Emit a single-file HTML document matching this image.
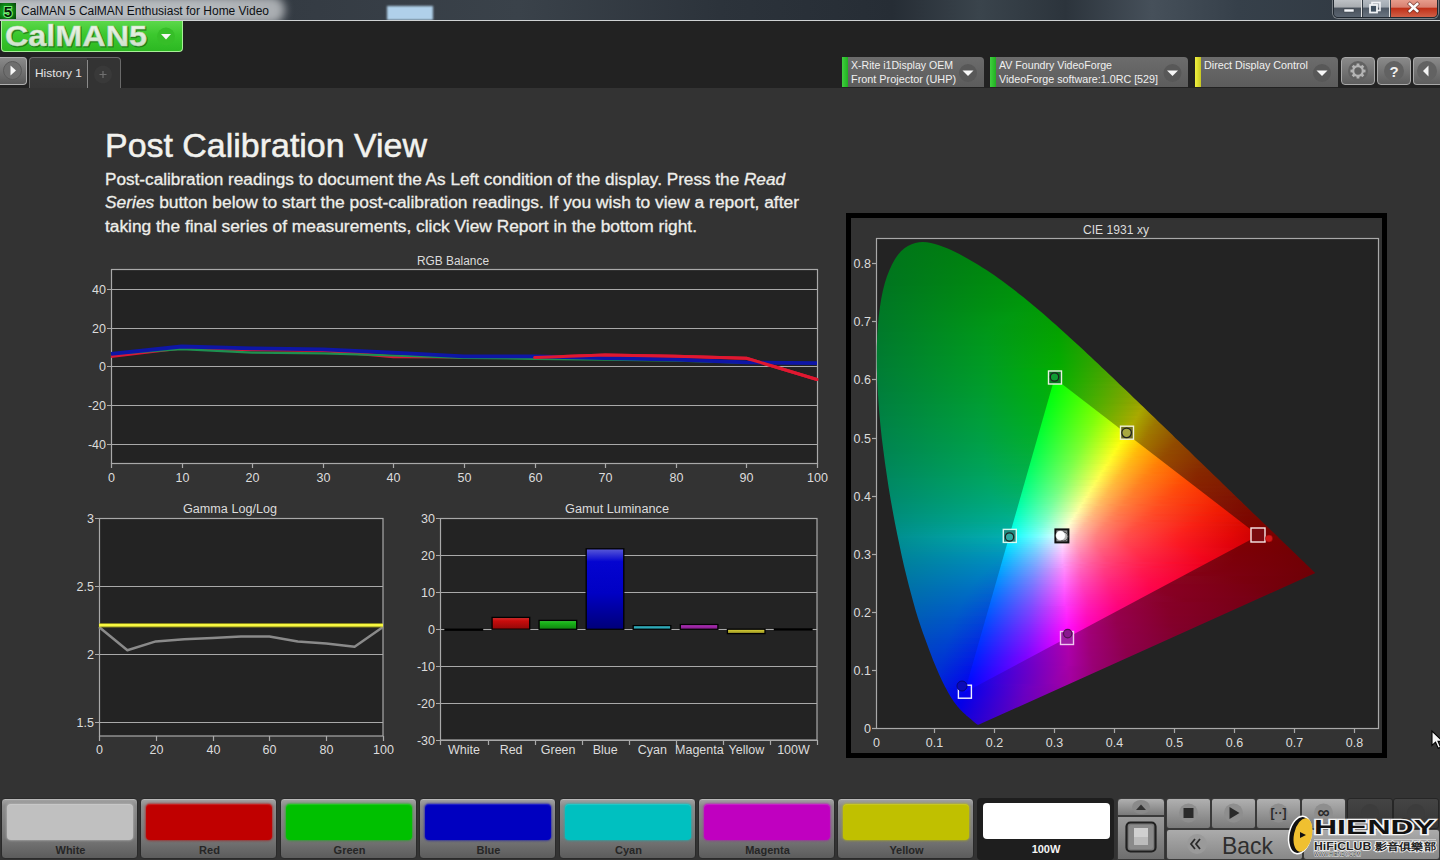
<!DOCTYPE html>
<html><head><meta charset="utf-8"><title>CalMAN 5</title>
<style>
*{margin:0;padding:0;box-sizing:border-box}
html,body{width:1440px;height:860px;overflow:hidden;background:#333;font-family:"Liberation Sans",sans-serif}
.abs{position:absolute}
svg text{font-family:"Liberation Sans",sans-serif}
#titlebar{left:0;top:0;width:1440px;height:21px;background:#2a323c}
#toolbar{left:0;top:21px;width:1440px;height:67px;background:#222222}
#content{left:0;top:88px;width:1440px;height:709px;background:#333333}
#bottombar{left:0;top:797px;width:1440px;height:63px;background:#333333}
</style></head><body>
<div id="titlebar" class="abs"></div>
<div id="toolbar" class="abs"></div>
<div id="content" class="abs"></div>
<div id="bottombar" class="abs"></div>

<svg class="abs" style="left:0;top:0" width="1440" height="860" viewBox="0 0 1440 860">
<text x="105" y="157" font-size="33" fill="#f2f2ee" text-anchor="start" font-weight="normal" font-style="normal" textLength="322" lengthAdjust="spacingAndGlyphs" stroke="#f2f2ee" stroke-width="0.5">Post Calibration View</text>
<text x="105" y="185" font-size="16" fill="#eeeeea" stroke="#eeeeea" stroke-width="0.3" textLength="680" lengthAdjust="spacingAndGlyphs">Post-calibration readings to document the As Left condition of the display. Press the <tspan font-style="italic">Read</tspan></text>
<text x="105" y="208" font-size="16" fill="#eeeeea" stroke="#eeeeea" stroke-width="0.3" textLength="694" lengthAdjust="spacingAndGlyphs"><tspan font-style="italic">Series</tspan> button below to start the post-calibration readings. If you wish to view a report, after</text>
<text x="105" y="232" font-size="16" fill="#eeeeea" stroke="#eeeeea" stroke-width="0.3" textLength="592" lengthAdjust="spacingAndGlyphs">taking the final series of measurements, click View Report in the bottom right.</text>
<text x="453" y="264.5" font-size="12" fill="#dcdcdc" text-anchor="middle" font-weight="normal" font-style="normal" textLength="72" lengthAdjust="spacingAndGlyphs">RGB Balance</text>
<rect x="111.5" y="269.5" width="706" height="194" fill="#232323" stroke="#a9a9a9" stroke-width="1.2"/>
<line x1="107" y1="289.5" x2="817" y2="289.5" stroke="#a9a9a9" stroke-width="1.2"/>
<text x="106" y="294.0" font-size="12.5" fill="#dcdcdc" text-anchor="end" font-weight="normal" font-style="normal">40</text>
<line x1="107" y1="328.5" x2="817" y2="328.5" stroke="#a9a9a9" stroke-width="1.2"/>
<text x="106" y="333.0" font-size="12.5" fill="#dcdcdc" text-anchor="end" font-weight="normal" font-style="normal">20</text>
<line x1="107" y1="366.5" x2="817" y2="366.5" stroke="#a9a9a9" stroke-width="1.2"/>
<text x="106" y="371.0" font-size="12.5" fill="#dcdcdc" text-anchor="end" font-weight="normal" font-style="normal">0</text>
<line x1="107" y1="405.5" x2="817" y2="405.5" stroke="#a9a9a9" stroke-width="1.2"/>
<text x="106" y="410.0" font-size="12.5" fill="#dcdcdc" text-anchor="end" font-weight="normal" font-style="normal">-20</text>
<line x1="107" y1="444.5" x2="817" y2="444.5" stroke="#a9a9a9" stroke-width="1.2"/>
<text x="106" y="449.0" font-size="12.5" fill="#dcdcdc" text-anchor="end" font-weight="normal" font-style="normal">-40</text>
<line x1="111.5" y1="463" x2="111.5" y2="468" stroke="#a9a9a9" stroke-width="1.2"/>
<text x="111.5" y="482" font-size="12.5" fill="#dcdcdc" text-anchor="middle" font-weight="normal" font-style="normal">0</text>
<line x1="182.5" y1="463" x2="182.5" y2="468" stroke="#a9a9a9" stroke-width="1.2"/>
<text x="182.5" y="482" font-size="12.5" fill="#dcdcdc" text-anchor="middle" font-weight="normal" font-style="normal">10</text>
<line x1="252.5" y1="463" x2="252.5" y2="468" stroke="#a9a9a9" stroke-width="1.2"/>
<text x="252.5" y="482" font-size="12.5" fill="#dcdcdc" text-anchor="middle" font-weight="normal" font-style="normal">20</text>
<line x1="323.5" y1="463" x2="323.5" y2="468" stroke="#a9a9a9" stroke-width="1.2"/>
<text x="323.5" y="482" font-size="12.5" fill="#dcdcdc" text-anchor="middle" font-weight="normal" font-style="normal">30</text>
<line x1="393.5" y1="463" x2="393.5" y2="468" stroke="#a9a9a9" stroke-width="1.2"/>
<text x="393.5" y="482" font-size="12.5" fill="#dcdcdc" text-anchor="middle" font-weight="normal" font-style="normal">40</text>
<line x1="464.5" y1="463" x2="464.5" y2="468" stroke="#a9a9a9" stroke-width="1.2"/>
<text x="464.5" y="482" font-size="12.5" fill="#dcdcdc" text-anchor="middle" font-weight="normal" font-style="normal">50</text>
<line x1="535.5" y1="463" x2="535.5" y2="468" stroke="#a9a9a9" stroke-width="1.2"/>
<text x="535.5" y="482" font-size="12.5" fill="#dcdcdc" text-anchor="middle" font-weight="normal" font-style="normal">60</text>
<line x1="605.5" y1="463" x2="605.5" y2="468" stroke="#a9a9a9" stroke-width="1.2"/>
<text x="605.5" y="482" font-size="12.5" fill="#dcdcdc" text-anchor="middle" font-weight="normal" font-style="normal">70</text>
<line x1="676.5" y1="463" x2="676.5" y2="468" stroke="#a9a9a9" stroke-width="1.2"/>
<text x="676.5" y="482" font-size="12.5" fill="#dcdcdc" text-anchor="middle" font-weight="normal" font-style="normal">80</text>
<line x1="746.5" y1="463" x2="746.5" y2="468" stroke="#a9a9a9" stroke-width="1.2"/>
<text x="746.5" y="482" font-size="12.5" fill="#dcdcdc" text-anchor="middle" font-weight="normal" font-style="normal">90</text>
<line x1="817.5" y1="463" x2="817.5" y2="468" stroke="#a9a9a9" stroke-width="1.2"/>
<text x="817.5" y="482" font-size="12.5" fill="#dcdcdc" text-anchor="middle" font-weight="normal" font-style="normal">100</text>
<polyline points="111.0,356.4 181.6,347.9 252.2,349.8 322.8,350.6 393.4,356.8 464.0,357.0 534.6,357.4 605.2,355.1 675.8,356.2 746.4,358.2 817.0,379.5" fill="none" stroke="#d81838" stroke-width="3" stroke-linejoin="round"/>
<polyline points="111.0,353.9 181.6,349.1 252.2,352.6 322.8,353.3 393.4,355.5 464.0,357.8 534.6,358.9 605.2,359.7 675.8,360.7 746.4,362.6 817.0,363.2" fill="none" stroke="#1e9050" stroke-width="2.2" stroke-linejoin="round"/>
<polyline points="111.0,353.9 181.6,346.5 252.2,348.3 322.8,349.4 393.4,352.6 464.0,356.4 534.6,356.4 605.2,358.2 675.8,359.5 746.4,362.4 817.0,363.2" fill="none" stroke="#0e16a6" stroke-width="3.8" stroke-linejoin="round"/>
<polyline points="534.6,357.4 605.2,355.1 675.8,356.2 746.4,358.2 817.0,379.5" fill="none" stroke="#e01830" stroke-width="3" stroke-linejoin="round" stroke-linecap="round"/>
<text x="230" y="512.5" font-size="12" fill="#dcdcdc" text-anchor="middle" font-weight="normal" font-style="normal" textLength="94" lengthAdjust="spacingAndGlyphs">Gamma Log/Log</text>
<rect x="99.5" y="518.5" width="283.5" height="217.5" fill="#232323" stroke="#a9a9a9" stroke-width="1.2"/>
<line x1="95" y1="518.5" x2="383" y2="518.5" stroke="#a9a9a9" stroke-width="1.2"/>
<text x="94" y="523.0" font-size="12.5" fill="#dcdcdc" text-anchor="end" font-weight="normal" font-style="normal">3</text>
<line x1="95" y1="586.5" x2="383" y2="586.5" stroke="#a9a9a9" stroke-width="1.2"/>
<text x="94" y="591.0" font-size="12.5" fill="#dcdcdc" text-anchor="end" font-weight="normal" font-style="normal">2.5</text>
<line x1="95" y1="654.5" x2="383" y2="654.5" stroke="#a9a9a9" stroke-width="1.2"/>
<text x="94" y="659.0" font-size="12.5" fill="#dcdcdc" text-anchor="end" font-weight="normal" font-style="normal">2</text>
<line x1="95" y1="722.5" x2="383" y2="722.5" stroke="#a9a9a9" stroke-width="1.2"/>
<text x="94" y="727.0" font-size="12.5" fill="#dcdcdc" text-anchor="end" font-weight="normal" font-style="normal">1.5</text>
<line x1="99.5" y1="736" x2="99.5" y2="741" stroke="#a9a9a9" stroke-width="1.2"/>
<text x="99.5" y="754" font-size="12.5" fill="#dcdcdc" text-anchor="middle" font-weight="normal" font-style="normal">0</text>
<line x1="156.5" y1="736" x2="156.5" y2="741" stroke="#a9a9a9" stroke-width="1.2"/>
<text x="156.5" y="754" font-size="12.5" fill="#dcdcdc" text-anchor="middle" font-weight="normal" font-style="normal">20</text>
<line x1="213.5" y1="736" x2="213.5" y2="741" stroke="#a9a9a9" stroke-width="1.2"/>
<text x="213.5" y="754" font-size="12.5" fill="#dcdcdc" text-anchor="middle" font-weight="normal" font-style="normal">40</text>
<line x1="269.5" y1="736" x2="269.5" y2="741" stroke="#a9a9a9" stroke-width="1.2"/>
<text x="269.5" y="754" font-size="12.5" fill="#dcdcdc" text-anchor="middle" font-weight="normal" font-style="normal">60</text>
<line x1="326.5" y1="736" x2="326.5" y2="741" stroke="#a9a9a9" stroke-width="1.2"/>
<text x="326.5" y="754" font-size="12.5" fill="#dcdcdc" text-anchor="middle" font-weight="normal" font-style="normal">80</text>
<line x1="383.5" y1="736" x2="383.5" y2="741" stroke="#a9a9a9" stroke-width="1.2"/>
<text x="383.5" y="754" font-size="12.5" fill="#dcdcdc" text-anchor="middle" font-weight="normal" font-style="normal">100</text>
<polyline points="99.0,627.0 127.4,650.2 155.8,641.4 184.2,639.3 212.6,637.9 241.0,636.6 269.4,636.6 297.8,641.4 326.2,643.4 354.6,646.8 383.0,627.0" fill="none" stroke="#8a8a8a" stroke-width="2.5" stroke-linejoin="round"/>
<line x1="99" y1="625.3" x2="383" y2="625.3" stroke="#c8c820" stroke-width="4.5" opacity="0.6"/>
<line x1="99" y1="625.3" x2="383" y2="625.3" stroke="#f8f840" stroke-width="2.4"/>
<text x="617" y="512.5" font-size="12" fill="#dcdcdc" text-anchor="middle" font-weight="normal" font-style="normal" textLength="104" lengthAdjust="spacingAndGlyphs">Gamut Luminance</text>
<rect x="440.5" y="518.5" width="376.5" height="221.5" fill="#232323" stroke="#a9a9a9" stroke-width="1.2"/>
<line x1="436" y1="518.5" x2="817" y2="518.5" stroke="#a9a9a9" stroke-width="1.2"/>
<text x="435" y="523.0" font-size="12.5" fill="#dcdcdc" text-anchor="end" font-weight="normal" font-style="normal">30</text>
<line x1="436" y1="555.5" x2="817" y2="555.5" stroke="#a9a9a9" stroke-width="1.2"/>
<text x="435" y="560.0" font-size="12.5" fill="#dcdcdc" text-anchor="end" font-weight="normal" font-style="normal">20</text>
<line x1="436" y1="592.5" x2="817" y2="592.5" stroke="#a9a9a9" stroke-width="1.2"/>
<text x="435" y="597.0" font-size="12.5" fill="#dcdcdc" text-anchor="end" font-weight="normal" font-style="normal">10</text>
<line x1="436" y1="629.5" x2="817" y2="629.5" stroke="#a9a9a9" stroke-width="1.2"/>
<text x="435" y="634.0" font-size="12.5" fill="#dcdcdc" text-anchor="end" font-weight="normal" font-style="normal">0</text>
<line x1="436" y1="666.5" x2="817" y2="666.5" stroke="#a9a9a9" stroke-width="1.2"/>
<text x="435" y="671.0" font-size="12.5" fill="#dcdcdc" text-anchor="end" font-weight="normal" font-style="normal">-10</text>
<line x1="436" y1="703.5" x2="817" y2="703.5" stroke="#a9a9a9" stroke-width="1.2"/>
<text x="435" y="708.0" font-size="12.5" fill="#dcdcdc" text-anchor="end" font-weight="normal" font-style="normal">-20</text>
<line x1="436" y1="740.5" x2="817" y2="740.5" stroke="#a9a9a9" stroke-width="1.2"/>
<text x="435" y="745.0" font-size="12.5" fill="#dcdcdc" text-anchor="end" font-weight="normal" font-style="normal">-30</text>
<defs>
<linearGradient id="bg0" x1="0" y1="0" x2="0" y2="1"><stop offset="0" stop-color="#535353"/><stop offset="0.3" stop-color="#333333"/><stop offset="1" stop-color="#242424"/></linearGradient>
<linearGradient id="bg1" x1="0" y1="0" x2="0" y2="1"><stop offset="0" stop-color="#d23232"/><stop offset="0.3" stop-color="#c80c0c"/><stop offset="1" stop-color="#900808"/></linearGradient>
<linearGradient id="bg2" x1="0" y1="0" x2="0" y2="1"><stop offset="0" stop-color="#3cc13c"/><stop offset="0.3" stop-color="#18b418"/><stop offset="1" stop-color="#118111"/></linearGradient>
<linearGradient id="bg3" x1="0" y1="0" x2="0" y2="1"><stop offset="0" stop-color="#5a5ad8"/><stop offset="0.16" stop-color="#0404d0"/><stop offset="0.55" stop-color="#0000c4"/><stop offset="1" stop-color="#000078"/></linearGradient>
<linearGradient id="bg4" x1="0" y1="0" x2="0" y2="1"><stop offset="0" stop-color="#50c4d2"/><stop offset="0.3" stop-color="#30b8c8"/><stop offset="1" stop-color="#228490"/></linearGradient>
<linearGradient id="bg5" x1="0" y1="0" x2="0" y2="1"><stop offset="0" stop-color="#b64abd"/><stop offset="0.3" stop-color="#a828b0"/><stop offset="1" stop-color="#781c7e"/></linearGradient>
<linearGradient id="bg6" x1="0" y1="0" x2="0" y2="1"><stop offset="0" stop-color="#d2cb50"/><stop offset="0.3" stop-color="#c8c030"/><stop offset="1" stop-color="#908a22"/></linearGradient>
<linearGradient id="bg7" x1="0" y1="0" x2="0" y2="1"><stop offset="0" stop-color="#535353"/><stop offset="0.3" stop-color="#333333"/><stop offset="1" stop-color="#242424"/></linearGradient>
</defs>
<line x1="440.5" y1="740" x2="440.5" y2="745" stroke="#a9a9a9" stroke-width="1.2"/>
<text x="464.03125" y="754" font-size="12.5" fill="#dcdcdc" text-anchor="middle" font-weight="normal" font-style="normal">White</text>
<rect x="445.0" y="629.2" width="37.6" height="1.0" fill="url(#bg0)" stroke="#000" stroke-width="1.3"/>
<line x1="488.5" y1="740" x2="488.5" y2="745" stroke="#a9a9a9" stroke-width="1.2"/>
<text x="511.09375" y="754" font-size="12.5" fill="#dcdcdc" text-anchor="middle" font-weight="normal" font-style="normal">Red</text>
<rect x="492.1" y="617.4" width="37.6" height="11.8" fill="url(#bg1)" stroke="#000" stroke-width="1.3"/>
<line x1="535.5" y1="740" x2="535.5" y2="745" stroke="#a9a9a9" stroke-width="1.2"/>
<text x="558.15625" y="754" font-size="12.5" fill="#dcdcdc" text-anchor="middle" font-weight="normal" font-style="normal">Green</text>
<rect x="539.1" y="620.4" width="37.6" height="8.9" fill="url(#bg2)" stroke="#000" stroke-width="1.3"/>
<line x1="582.5" y1="740" x2="582.5" y2="745" stroke="#a9a9a9" stroke-width="1.2"/>
<text x="605.21875" y="754" font-size="12.5" fill="#dcdcdc" text-anchor="middle" font-weight="normal" font-style="normal">Blue</text>
<rect x="586.2" y="548.8" width="37.6" height="80.5" fill="url(#bg3)" stroke="#000" stroke-width="1.3"/>
<line x1="629.5" y1="740" x2="629.5" y2="745" stroke="#a9a9a9" stroke-width="1.2"/>
<text x="652.28125" y="754" font-size="12.5" fill="#dcdcdc" text-anchor="middle" font-weight="normal" font-style="normal">Cyan</text>
<rect x="633.2" y="625.6" width="37.6" height="3.7" fill="url(#bg4)" stroke="#000" stroke-width="1.3"/>
<line x1="676.5" y1="740" x2="676.5" y2="745" stroke="#a9a9a9" stroke-width="1.2"/>
<text x="699.34375" y="754" font-size="12.5" fill="#dcdcdc" text-anchor="middle" font-weight="normal" font-style="normal">Magenta</text>
<rect x="680.3" y="624.5" width="37.6" height="4.8" fill="url(#bg5)" stroke="#000" stroke-width="1.3"/>
<line x1="723.5" y1="740" x2="723.5" y2="745" stroke="#a9a9a9" stroke-width="1.2"/>
<text x="746.40625" y="754" font-size="12.5" fill="#dcdcdc" text-anchor="middle" font-weight="normal" font-style="normal">Yellow</text>
<rect x="727.4" y="629.2" width="37.6" height="4.4" fill="url(#bg6)" stroke="#000" stroke-width="1.3"/>
<line x1="770.5" y1="740" x2="770.5" y2="745" stroke="#a9a9a9" stroke-width="1.2"/>
<text x="793.46875" y="754" font-size="12.5" fill="#dcdcdc" text-anchor="middle" font-weight="normal" font-style="normal">100W</text>
<rect x="774.4" y="628.9" width="37.6" height="1.0" fill="url(#bg7)" stroke="#000" stroke-width="1.3"/>
<line x1="817.5" y1="740" x2="817.5" y2="745" stroke="#a9a9a9" stroke-width="1.2"/>
</svg>
<div class="abs" style="left:846px;top:213px;width:541px;height:545px;background:#333;border:5px solid #000"></div>
<svg class="abs" style="left:0;top:0" width="1440" height="860" viewBox="0 0 1440 860">
<defs>
<clipPath id="hs"><polygon points="979.0,724.6 978.9,724.6 978.9,724.6 978.9,724.6 978.9,724.6 978.8,724.6 978.8,724.6 978.7,724.7 978.7,724.7 978.6,724.7 978.6,724.7 978.5,724.7 978.5,724.7 978.4,724.7 978.4,724.7 978.3,724.7 978.2,724.7 978.1,724.7 978.1,724.7 978.0,724.7 977.8,724.7 977.7,724.6 977.6,724.6 977.5,724.6 977.3,724.5 977.2,724.5 977.1,724.4 977.0,724.4 976.9,724.3 976.8,724.2 976.7,724.1 976.6,724.0 976.4,723.9 976.3,723.8 976.2,723.7 976.0,723.6 975.8,723.5 975.7,723.3 975.5,723.2 975.3,723.0 975.1,722.9 974.9,722.7 974.6,722.5 974.4,722.3 974.2,722.1 973.9,721.9 973.7,721.6 973.4,721.4 973.1,721.2 972.8,720.9 972.5,720.6 972.2,720.4 971.9,720.1 971.5,719.8 971.2,719.5 970.8,719.1 970.3,718.8 969.9,718.4 969.4,718.0 969.0,717.6 968.5,717.2 967.9,716.8 967.4,716.3 966.9,715.9 966.3,715.4 965.7,714.8 965.1,714.3 964.5,713.7 963.8,713.1 963.1,712.4 962.4,711.8 961.7,711.0 960.9,710.2 960.1,709.4 959.3,708.5 958.5,707.6 957.7,706.7 956.8,705.5 955.8,704.3 954.8,702.9 953.7,701.4 952.6,699.8 951.4,698.0 950.2,696.0 949.0,693.9 947.6,691.5 946.3,689.1 944.9,686.4 943.4,683.6 941.9,680.4 940.3,677.0 938.6,673.2 936.9,669.3 935.1,665.0 933.2,660.5 931.3,655.6 929.3,650.3 927.2,644.6 925.0,638.6 922.7,632.2 920.4,625.5 918.0,618.3 915.7,610.7 913.4,602.6 911.1,594.0 908.7,585.1 906.4,575.7 904.0,565.9 901.7,555.8 899.5,545.2 897.2,534.2 894.9,522.7 892.7,511.0 890.6,499.2 888.6,487.3 886.8,475.3 885.0,463.1 883.4,450.7 881.8,438.3 880.5,426.1 879.4,414.2 878.5,402.4 877.8,390.7 877.2,379.2 876.8,367.9 876.7,356.9 876.8,346.4 877.2,336.2 877.9,326.3 878.7,316.7 879.9,307.5 881.2,298.9 882.8,290.9 884.7,283.5 886.9,276.6 889.4,270.2 892.0,264.5 894.9,259.3 897.8,254.9 901.0,251.3 904.4,248.3 907.9,246.0 911.6,244.3 915.3,243.1 919.1,242.2 922.9,241.9 926.8,242.2 930.9,242.9 934.9,244.0 939.0,245.3 943.0,246.7 947.1,248.2 951.1,250.0 955.2,252.0 959.3,254.1 963.3,256.3 967.3,258.5 971.2,260.7 975.1,262.9 978.9,265.3 982.7,267.7 986.5,270.1 990.2,272.6 994.0,275.1 997.7,277.7 1001.3,280.3 1005.0,283.0 1008.6,285.7 1012.3,288.5 1015.9,291.3 1019.5,294.2 1023.2,297.1 1026.8,300.0 1030.4,303.0 1034.0,306.0 1037.6,309.0 1041.2,312.0 1044.7,315.1 1048.3,318.3 1051.9,321.4 1055.5,324.6 1059.0,327.8 1062.6,331.0 1066.2,334.2 1069.7,337.5 1073.3,340.7 1076.9,344.0 1080.5,347.3 1084.0,350.6 1087.6,354.0 1091.2,357.3 1094.8,360.7 1098.4,364.0 1101.9,367.4 1105.5,370.8 1109.1,374.2 1112.6,377.6 1116.2,381.0 1119.7,384.4 1123.3,387.7 1126.8,391.1 1130.4,394.5 1133.9,397.9 1137.4,401.3 1141.0,404.7 1144.5,408.0 1148.0,411.4 1151.4,414.8 1154.9,418.1 1158.3,421.4 1161.8,424.7 1165.2,428.0 1168.6,431.3 1172.0,434.6 1175.3,437.9 1178.7,441.1 1182.0,444.3 1185.3,447.5 1188.6,450.6 1191.8,453.8 1195.0,456.9 1198.2,460.0 1201.4,463.0 1204.5,466.1 1207.6,469.0 1210.7,472.0 1213.7,474.9 1216.7,477.8 1219.6,480.6 1222.5,483.4 1225.4,486.2 1228.2,488.9 1230.9,491.6 1233.6,494.2 1236.2,496.7 1238.8,499.2 1241.3,501.6 1243.7,504.0 1246.1,506.3 1248.4,508.5 1250.7,510.7 1252.9,512.9 1255.1,515.0 1257.3,517.1 1259.4,519.1 1261.4,521.1 1263.4,523.0 1265.3,524.8 1267.2,526.6 1269.0,528.3 1270.7,529.9 1272.4,531.6 1274.0,533.1 1275.5,534.6 1277.1,536.1 1278.5,537.5 1279.9,538.9 1281.3,540.2 1282.6,541.4 1283.8,542.7 1285.0,543.8 1286.2,544.9 1287.3,546.0 1288.4,547.1 1289.4,548.1 1290.4,549.0 1291.4,550.0 1292.3,550.8 1293.2,551.7 1294.0,552.5 1294.9,553.3 1295.7,554.1 1296.4,554.8 1297.2,555.5 1297.9,556.2 1298.6,556.9 1299.2,557.6 1299.9,558.2 1300.5,558.8 1301.2,559.4 1301.8,560.0 1302.3,560.6 1302.9,561.1 1303.4,561.6 1304.0,562.1 1304.5,562.6 1305.0,563.1 1305.4,563.6 1305.9,564.0 1306.3,564.4 1306.8,564.8 1307.2,565.2 1307.6,565.6 1307.9,565.9 1308.3,566.3 1308.6,566.6 1309.0,566.9 1309.3,567.2 1309.6,567.5 1309.8,567.8 1310.1,568.0 1310.4,568.3 1310.6,568.5 1310.8,568.7 1311.1,569.0 1311.3,569.2 1311.5,569.4 1311.7,569.6 1311.8,569.7 1312.0,569.9 1312.2,570.0 1312.3,570.2 1312.5,570.4 1312.7,570.5 1312.9,570.7 1313.1,571.0 1313.3,571.2 1313.5,571.3 1313.7,571.5 1313.9,571.7 1314.0,571.8 1314.1,572.0 1314.3,572.1 1314.4,572.2 1314.5,572.3 1314.7,572.5 1314.8,572.6 1315.0,572.8 1315.1,572.9 1315.2,573.0 1315.3,573.1"/></clipPath>
<clipPath id="tr"><polygon points="1258.5,535.4 1054.5,378.3 964.5,692.6"/></clipPath>
<linearGradient id="dim0" gradientUnits="userSpaceOnUse" x1="874.5" y1="0" x2="1320.5" y2="0"><stop offset="0.000" stop-color="#00731b"/><stop offset="0.345" stop-color="#008506"/><stop offset="0.462" stop-color="#0b8500"/><stop offset="0.807" stop-color="#697300"/><stop offset="0.848" stop-color="#726e00"/><stop offset="0.991" stop-color="#684600"/><stop offset="0.996" stop-color="#674500"/></linearGradient>
<linearGradient id="dim1" gradientUnits="userSpaceOnUse" x1="874.5" y1="0" x2="1320.5" y2="0"><stop offset="0.000" stop-color="#00731b"/><stop offset="0.341" stop-color="#008506"/><stop offset="0.448" stop-color="#098500"/><stop offset="0.565" stop-color="#258100"/><stop offset="0.816" stop-color="#6d7300"/><stop offset="0.852" stop-color="#716b00"/><stop offset="0.996" stop-color="#674400"/></linearGradient>
<linearGradient id="dim2" gradientUnits="userSpaceOnUse" x1="874.5" y1="0" x2="1320.5" y2="0"><stop offset="0.000" stop-color="#00731b"/><stop offset="0.341" stop-color="#008607"/><stop offset="0.448" stop-color="#098600"/><stop offset="0.570" stop-color="#278100"/><stop offset="0.821" stop-color="#6f7300"/><stop offset="0.996" stop-color="#674400"/></linearGradient>
<linearGradient id="dim3" gradientUnits="userSpaceOnUse" x1="874.5" y1="0" x2="1320.5" y2="0"><stop offset="0.000" stop-color="#00731b"/><stop offset="0.341" stop-color="#008607"/><stop offset="0.444" stop-color="#088700"/><stop offset="0.552" stop-color="#228300"/><stop offset="0.839" stop-color="#726e00"/><stop offset="0.982" stop-color="#674500"/><stop offset="0.996" stop-color="#674300"/></linearGradient>
<linearGradient id="dim4" gradientUnits="userSpaceOnUse" x1="874.5" y1="0" x2="1320.5" y2="0"><stop offset="0.000" stop-color="#00731c"/><stop offset="0.341" stop-color="#008707"/><stop offset="0.444" stop-color="#088700"/><stop offset="0.552" stop-color="#238300"/><stop offset="0.834" stop-color="#726f00"/><stop offset="0.973" stop-color="#684600"/><stop offset="0.996" stop-color="#674200"/></linearGradient>
<linearGradient id="dim5" gradientUnits="userSpaceOnUse" x1="874.5" y1="0" x2="1320.5" y2="0"><stop offset="0.000" stop-color="#00731c"/><stop offset="0.341" stop-color="#008707"/><stop offset="0.444" stop-color="#098800"/><stop offset="0.556" stop-color="#248300"/><stop offset="0.830" stop-color="#726f00"/><stop offset="0.969" stop-color="#684700"/><stop offset="0.996" stop-color="#664200"/></linearGradient>
<linearGradient id="dim6" gradientUnits="userSpaceOnUse" x1="874.5" y1="0" x2="1320.5" y2="0"><stop offset="0.000" stop-color="#00731c"/><stop offset="0.341" stop-color="#008807"/><stop offset="0.439" stop-color="#088900"/><stop offset="0.543" stop-color="#218500"/><stop offset="0.830" stop-color="#726e00"/><stop offset="0.969" stop-color="#684600"/><stop offset="0.996" stop-color="#664100"/></linearGradient>
<linearGradient id="dim7" gradientUnits="userSpaceOnUse" x1="874.5" y1="0" x2="1320.5" y2="0"><stop offset="0.000" stop-color="#00731c"/><stop offset="0.341" stop-color="#008907"/><stop offset="0.439" stop-color="#088900"/><stop offset="0.543" stop-color="#218500"/><stop offset="0.825" stop-color="#726f00"/><stop offset="0.964" stop-color="#684600"/><stop offset="0.996" stop-color="#664000"/></linearGradient>
<linearGradient id="dim8" gradientUnits="userSpaceOnUse" x1="874.5" y1="0" x2="1320.5" y2="0"><stop offset="0.000" stop-color="#00731d"/><stop offset="0.341" stop-color="#008907"/><stop offset="0.439" stop-color="#088a00"/><stop offset="0.543" stop-color="#228600"/><stop offset="0.821" stop-color="#727000"/><stop offset="0.955" stop-color="#684700"/><stop offset="0.996" stop-color="#664000"/></linearGradient>
<linearGradient id="dim9" gradientUnits="userSpaceOnUse" x1="874.5" y1="0" x2="1320.5" y2="0"><stop offset="0.000" stop-color="#00731d"/><stop offset="0.341" stop-color="#008a07"/><stop offset="0.435" stop-color="#078b00"/><stop offset="0.538" stop-color="#218700"/><stop offset="0.821" stop-color="#726e00"/><stop offset="0.955" stop-color="#684600"/><stop offset="0.996" stop-color="#663f00"/></linearGradient>
<linearGradient id="dim10" gradientUnits="userSpaceOnUse" x1="874.5" y1="0" x2="1320.5" y2="0"><stop offset="0.000" stop-color="#00731d"/><stop offset="0.336" stop-color="#008a08"/><stop offset="0.430" stop-color="#078b00"/><stop offset="0.529" stop-color="#1f8800"/><stop offset="0.816" stop-color="#726f00"/><stop offset="0.951" stop-color="#684700"/><stop offset="0.996" stop-color="#653e00"/></linearGradient>
<linearGradient id="dim11" gradientUnits="userSpaceOnUse" x1="874.5" y1="0" x2="1320.5" y2="0"><stop offset="0.000" stop-color="#00731e"/><stop offset="0.336" stop-color="#008b08"/><stop offset="0.430" stop-color="#078c00"/><stop offset="0.529" stop-color="#1f8800"/><stop offset="0.812" stop-color="#727000"/><stop offset="0.946" stop-color="#684700"/><stop offset="0.996" stop-color="#653e00"/></linearGradient>
<linearGradient id="dim12" gradientUnits="userSpaceOnUse" x1="874.5" y1="0" x2="1320.5" y2="0"><stop offset="0.000" stop-color="#00731e"/><stop offset="0.336" stop-color="#008b08"/><stop offset="0.430" stop-color="#078c00"/><stop offset="0.529" stop-color="#208900"/><stop offset="0.807" stop-color="#727100"/><stop offset="0.937" stop-color="#684800"/><stop offset="0.996" stop-color="#653d00"/></linearGradient>
<linearGradient id="dim13" gradientUnits="userSpaceOnUse" x1="874.5" y1="0" x2="1320.5" y2="0"><stop offset="0.000" stop-color="#00731e"/><stop offset="0.336" stop-color="#008c08"/><stop offset="0.430" stop-color="#078d00"/><stop offset="0.529" stop-color="#208900"/><stop offset="0.807" stop-color="#737000"/><stop offset="0.933" stop-color="#684800"/><stop offset="0.996" stop-color="#653c00"/></linearGradient>
<linearGradient id="dim14" gradientUnits="userSpaceOnUse" x1="874.5" y1="0" x2="1320.5" y2="0"><stop offset="0.000" stop-color="#00731e"/><stop offset="0.336" stop-color="#008d08"/><stop offset="0.430" stop-color="#078e00"/><stop offset="0.525" stop-color="#1f8a00"/><stop offset="0.803" stop-color="#747200"/><stop offset="0.915" stop-color="#694b00"/><stop offset="0.996" stop-color="#653c00"/></linearGradient>
<linearGradient id="dim15" gradientUnits="userSpaceOnUse" x1="874.5" y1="0" x2="1320.5" y2="0"><stop offset="0.000" stop-color="#00731f"/><stop offset="0.336" stop-color="#008d09"/><stop offset="0.430" stop-color="#078e00"/><stop offset="0.525" stop-color="#208b00"/><stop offset="0.798" stop-color="#757300"/><stop offset="0.897" stop-color="#6a4f00"/><stop offset="0.996" stop-color="#653b00"/></linearGradient>
<linearGradient id="dim16" gradientUnits="userSpaceOnUse" x1="874.5" y1="0" x2="1320.5" y2="0"><stop offset="0.000" stop-color="#00731f"/><stop offset="0.336" stop-color="#008e09"/><stop offset="0.430" stop-color="#078f00"/><stop offset="0.529" stop-color="#228b00"/><stop offset="0.798" stop-color="#757200"/><stop offset="0.888" stop-color="#6a5000"/><stop offset="0.996" stop-color="#643a00"/></linearGradient>
<linearGradient id="dim17" gradientUnits="userSpaceOnUse" x1="874.5" y1="0" x2="1320.5" y2="0"><stop offset="0.000" stop-color="#00731f"/><stop offset="0.336" stop-color="#008e09"/><stop offset="0.430" stop-color="#078f00"/><stop offset="0.525" stop-color="#218c00"/><stop offset="0.794" stop-color="#767400"/><stop offset="0.879" stop-color="#6b5200"/><stop offset="0.996" stop-color="#643a00"/></linearGradient>
<linearGradient id="dim18" gradientUnits="userSpaceOnUse" x1="874.5" y1="0" x2="1320.5" y2="0"><stop offset="0.000" stop-color="#007320"/><stop offset="0.336" stop-color="#008f09"/><stop offset="0.430" stop-color="#079000"/><stop offset="0.525" stop-color="#228c00"/><stop offset="0.789" stop-color="#777600"/><stop offset="0.879" stop-color="#6a5100"/><stop offset="0.996" stop-color="#643900"/></linearGradient>
<linearGradient id="dim19" gradientUnits="userSpaceOnUse" x1="874.5" y1="0" x2="1320.5" y2="0"><stop offset="0.000" stop-color="#007320"/><stop offset="0.336" stop-color="#009009"/><stop offset="0.426" stop-color="#069100"/><stop offset="0.520" stop-color="#218d00"/><stop offset="0.789" stop-color="#777500"/><stop offset="0.883" stop-color="#6a4f00"/><stop offset="0.996" stop-color="#643900"/></linearGradient>
<linearGradient id="dim20" gradientUnits="userSpaceOnUse" x1="874.5" y1="0" x2="1320.5" y2="0"><stop offset="0.000" stop-color="#007320"/><stop offset="0.336" stop-color="#009009"/><stop offset="0.426" stop-color="#069100"/><stop offset="0.516" stop-color="#1f8e00"/><stop offset="0.785" stop-color="#787600"/><stop offset="0.879" stop-color="#6a4f00"/><stop offset="0.996" stop-color="#643800"/></linearGradient>
<linearGradient id="dim21" gradientUnits="userSpaceOnUse" x1="874.5" y1="0" x2="1320.5" y2="0"><stop offset="0.000" stop-color="#007321"/><stop offset="0.336" stop-color="#009109"/><stop offset="0.426" stop-color="#069200"/><stop offset="0.516" stop-color="#208f00"/><stop offset="0.780" stop-color="#797800"/><stop offset="0.879" stop-color="#6a4e00"/><stop offset="0.996" stop-color="#633700"/></linearGradient>
<linearGradient id="dim22" gradientUnits="userSpaceOnUse" x1="874.5" y1="0" x2="1320.5" y2="0"><stop offset="0.000" stop-color="#007321"/><stop offset="0.336" stop-color="#009109"/><stop offset="0.426" stop-color="#069300"/><stop offset="0.516" stop-color="#218f00"/><stop offset="0.780" stop-color="#797700"/><stop offset="0.879" stop-color="#6a4d00"/><stop offset="0.996" stop-color="#633700"/></linearGradient>
<linearGradient id="dim23" gradientUnits="userSpaceOnUse" x1="874.5" y1="0" x2="1320.5" y2="0"><stop offset="0.000" stop-color="#007321"/><stop offset="0.336" stop-color="#00920a"/><stop offset="0.426" stop-color="#069300"/><stop offset="0.520" stop-color="#238f00"/><stop offset="0.776" stop-color="#7a7900"/><stop offset="0.879" stop-color="#694c00"/><stop offset="0.996" stop-color="#633600"/></linearGradient>
<linearGradient id="dim24" gradientUnits="userSpaceOnUse" x1="874.5" y1="0" x2="1320.5" y2="0"><stop offset="0.000" stop-color="#007422"/><stop offset="0.336" stop-color="#00930a"/><stop offset="0.426" stop-color="#069400"/><stop offset="0.516" stop-color="#229000"/><stop offset="0.776" stop-color="#7a7800"/><stop offset="0.879" stop-color="#694c00"/><stop offset="0.996" stop-color="#633600"/></linearGradient>
<linearGradient id="dim25" gradientUnits="userSpaceOnUse" x1="874.5" y1="0" x2="1320.5" y2="0"><stop offset="0.000" stop-color="#007422"/><stop offset="0.336" stop-color="#00930a"/><stop offset="0.422" stop-color="#059400"/><stop offset="0.507" stop-color="#1f9100"/><stop offset="0.771" stop-color="#7c7900"/><stop offset="0.874" stop-color="#6a4c00"/><stop offset="0.996" stop-color="#633500"/></linearGradient>
<linearGradient id="dim26" gradientUnits="userSpaceOnUse" x1="874.5" y1="0" x2="1320.5" y2="0"><stop offset="0.000" stop-color="#007422"/><stop offset="0.336" stop-color="#00940a"/><stop offset="0.422" stop-color="#069500"/><stop offset="0.511" stop-color="#219200"/><stop offset="0.767" stop-color="#7d7b00"/><stop offset="0.870" stop-color="#6b4d00"/><stop offset="0.996" stop-color="#633400"/></linearGradient>
<linearGradient id="dim27" gradientUnits="userSpaceOnUse" x1="874.5" y1="0" x2="1320.5" y2="0"><stop offset="0.000" stop-color="#007423"/><stop offset="0.336" stop-color="#00940a"/><stop offset="0.422" stop-color="#069600"/><stop offset="0.507" stop-color="#209200"/><stop offset="0.767" stop-color="#7d7a00"/><stop offset="0.870" stop-color="#6b4d00"/><stop offset="0.996" stop-color="#623400"/></linearGradient>
<linearGradient id="dim28" gradientUnits="userSpaceOnUse" x1="874.5" y1="0" x2="1320.5" y2="0"><stop offset="0.000" stop-color="#007523"/><stop offset="0.336" stop-color="#00950a"/><stop offset="0.422" stop-color="#069600"/><stop offset="0.507" stop-color="#219300"/><stop offset="0.762" stop-color="#7e7c00"/><stop offset="0.861" stop-color="#6d4f00"/><stop offset="0.996" stop-color="#623300"/></linearGradient>
<linearGradient id="dim29" gradientUnits="userSpaceOnUse" x1="874.5" y1="0" x2="1320.5" y2="0"><stop offset="0.000" stop-color="#007524"/><stop offset="0.336" stop-color="#00950a"/><stop offset="0.422" stop-color="#069700"/><stop offset="0.511" stop-color="#239300"/><stop offset="0.758" stop-color="#7f7d00"/><stop offset="0.857" stop-color="#6d5000"/><stop offset="0.996" stop-color="#623300"/></linearGradient>
<linearGradient id="dim30" gradientUnits="userSpaceOnUse" x1="874.5" y1="0" x2="1320.5" y2="0"><stop offset="0.000" stop-color="#007524"/><stop offset="0.336" stop-color="#00960b"/><stop offset="0.422" stop-color="#069800"/><stop offset="0.516" stop-color="#259300"/><stop offset="0.758" stop-color="#7f7c00"/><stop offset="0.857" stop-color="#6e4f00"/><stop offset="0.991" stop-color="#623300"/><stop offset="0.996" stop-color="#623200"/></linearGradient>
<linearGradient id="dim31" gradientUnits="userSpaceOnUse" x1="874.5" y1="0" x2="1320.5" y2="0"><stop offset="0.000" stop-color="#007525"/><stop offset="0.336" stop-color="#00970b"/><stop offset="0.422" stop-color="#069800"/><stop offset="0.507" stop-color="#229500"/><stop offset="0.753" stop-color="#807e00"/><stop offset="0.852" stop-color="#6e5000"/><stop offset="0.987" stop-color="#623300"/><stop offset="0.996" stop-color="#623100"/></linearGradient>
<linearGradient id="dim32" gradientUnits="userSpaceOnUse" x1="874.5" y1="0" x2="1320.5" y2="0"><stop offset="0.000" stop-color="#007625"/><stop offset="0.336" stop-color="#00970b"/><stop offset="0.422" stop-color="#069900"/><stop offset="0.511" stop-color="#259500"/><stop offset="0.749" stop-color="#818000"/><stop offset="0.843" stop-color="#705200"/><stop offset="0.978" stop-color="#623300"/><stop offset="0.996" stop-color="#623100"/></linearGradient>
<linearGradient id="dim33" gradientUnits="userSpaceOnUse" x1="874.5" y1="0" x2="1320.5" y2="0"><stop offset="0.000" stop-color="#007625"/><stop offset="0.336" stop-color="#00980b"/><stop offset="0.422" stop-color="#069900"/><stop offset="0.520" stop-color="#299500"/><stop offset="0.749" stop-color="#817f00"/><stop offset="0.848" stop-color="#6f5000"/><stop offset="0.987" stop-color="#623100"/><stop offset="0.996" stop-color="#613000"/></linearGradient>
<linearGradient id="dim34" gradientUnits="userSpaceOnUse" x1="874.5" y1="0" x2="1320.5" y2="0"><stop offset="0.000" stop-color="#007626"/><stop offset="0.332" stop-color="#00980c"/><stop offset="0.422" stop-color="#069a00"/><stop offset="0.525" stop-color="#2c9500"/><stop offset="0.744" stop-color="#828100"/><stop offset="0.839" stop-color="#715200"/><stop offset="0.978" stop-color="#623200"/><stop offset="0.996" stop-color="#613000"/></linearGradient>
<linearGradient id="dim35" gradientUnits="userSpaceOnUse" x1="874.5" y1="0" x2="1320.5" y2="0"><stop offset="0.000" stop-color="#007626"/><stop offset="0.323" stop-color="#00980d"/><stop offset="0.417" stop-color="#059b00"/><stop offset="0.498" stop-color="#219700"/><stop offset="0.744" stop-color="#827f00"/><stop offset="0.839" stop-color="#715200"/><stop offset="0.982" stop-color="#623100"/><stop offset="0.996" stop-color="#612f00"/></linearGradient>
<linearGradient id="dim36" gradientUnits="userSpaceOnUse" x1="874.5" y1="0" x2="1320.5" y2="0"><stop offset="0.000" stop-color="#007727"/><stop offset="0.318" stop-color="#00980e"/><stop offset="0.417" stop-color="#059b00"/><stop offset="0.502" stop-color="#249800"/><stop offset="0.740" stop-color="#838100"/><stop offset="0.834" stop-color="#725300"/><stop offset="0.982" stop-color="#613000"/><stop offset="0.996" stop-color="#612f00"/></linearGradient>
<linearGradient id="dim37" gradientUnits="userSpaceOnUse" x1="874.5" y1="0" x2="1320.5" y2="0"><stop offset="0.000" stop-color="#007727"/><stop offset="0.314" stop-color="#00990f"/><stop offset="0.417" stop-color="#059c00"/><stop offset="0.511" stop-color="#289700"/><stop offset="0.735" stop-color="#848300"/><stop offset="0.825" stop-color="#745500"/><stop offset="0.973" stop-color="#623100"/><stop offset="0.996" stop-color="#612e00"/></linearGradient>
<linearGradient id="dim38" gradientUnits="userSpaceOnUse" x1="874.5" y1="0" x2="1320.5" y2="0"><stop offset="0.000" stop-color="#007728"/><stop offset="0.309" stop-color="#009910"/><stop offset="0.417" stop-color="#059c00"/><stop offset="0.507" stop-color="#279800"/><stop offset="0.735" stop-color="#858200"/><stop offset="0.830" stop-color="#735300"/><stop offset="0.982" stop-color="#612f00"/><stop offset="0.996" stop-color="#612e00"/></linearGradient>
<linearGradient id="dim39" gradientUnits="userSpaceOnUse" x1="874.5" y1="0" x2="1320.5" y2="0"><stop offset="0.000" stop-color="#007728"/><stop offset="0.300" stop-color="#009911"/><stop offset="0.417" stop-color="#059d00"/><stop offset="0.511" stop-color="#2a9800"/><stop offset="0.731" stop-color="#868400"/><stop offset="0.821" stop-color="#755500"/><stop offset="0.973" stop-color="#613000"/><stop offset="0.996" stop-color="#602d00"/></linearGradient>
<linearGradient id="dim40" gradientUnits="userSpaceOnUse" x1="874.5" y1="0" x2="1320.5" y2="0"><stop offset="0.000" stop-color="#007728"/><stop offset="0.296" stop-color="#009912"/><stop offset="0.417" stop-color="#059e00"/><stop offset="0.529" stop-color="#329700"/><stop offset="0.726" stop-color="#878600"/><stop offset="0.816" stop-color="#755600"/><stop offset="0.969" stop-color="#623000"/><stop offset="0.996" stop-color="#602c00"/></linearGradient>
<linearGradient id="dim41" gradientUnits="userSpaceOnUse" x1="874.5" y1="0" x2="1320.5" y2="0"><stop offset="0.000" stop-color="#007829"/><stop offset="0.287" stop-color="#009913"/><stop offset="0.417" stop-color="#059e00"/><stop offset="0.556" stop-color="#3f9600"/><stop offset="0.726" stop-color="#878400"/><stop offset="0.816" stop-color="#765500"/><stop offset="0.969" stop-color="#622f00"/><stop offset="0.996" stop-color="#602c00"/></linearGradient>
<linearGradient id="dim42" gradientUnits="userSpaceOnUse" x1="874.5" y1="0" x2="1320.5" y2="0"><stop offset="0.000" stop-color="#007829"/><stop offset="0.283" stop-color="#009914"/><stop offset="0.413" stop-color="#049f00"/><stop offset="0.498" stop-color="#269b00"/><stop offset="0.722" stop-color="#888600"/><stop offset="0.812" stop-color="#765600"/><stop offset="0.964" stop-color="#623000"/><stop offset="0.996" stop-color="#602b00"/></linearGradient>
<linearGradient id="dim43" gradientUnits="userSpaceOnUse" x1="874.5" y1="0" x2="1320.5" y2="0"><stop offset="0.000" stop-color="#00782a"/><stop offset="0.274" stop-color="#009815"/><stop offset="0.413" stop-color="#04a000"/><stop offset="0.507" stop-color="#2a9b00"/><stop offset="0.717" stop-color="#898800"/><stop offset="0.803" stop-color="#785900"/><stop offset="0.946" stop-color="#653300"/><stop offset="0.996" stop-color="#602b00"/></linearGradient>
<linearGradient id="dim44" gradientUnits="userSpaceOnUse" x1="874.5" y1="0" x2="1320.5" y2="0"><stop offset="0.000" stop-color="#00782a"/><stop offset="0.260" stop-color="#009717"/><stop offset="0.413" stop-color="#04a000"/><stop offset="0.520" stop-color="#319a00"/><stop offset="0.717" stop-color="#898700"/><stop offset="0.803" stop-color="#785800"/><stop offset="0.951" stop-color="#643100"/><stop offset="0.996" stop-color="#602a00"/></linearGradient>
<linearGradient id="dim45" gradientUnits="userSpaceOnUse" x1="874.5" y1="0" x2="1320.5" y2="0"><stop offset="0.000" stop-color="#00782b"/><stop offset="0.256" stop-color="#009718"/><stop offset="0.413" stop-color="#04a100"/><stop offset="0.520" stop-color="#329a00"/><stop offset="0.713" stop-color="#8a8900"/><stop offset="0.798" stop-color="#795900"/><stop offset="0.942" stop-color="#663200"/><stop offset="0.996" stop-color="#602a00"/></linearGradient>
<linearGradient id="dim46" gradientUnits="userSpaceOnUse" x1="874.5" y1="0" x2="1320.5" y2="0"><stop offset="0.000" stop-color="#00782b"/><stop offset="0.256" stop-color="#009818"/><stop offset="0.413" stop-color="#04a100"/><stop offset="0.547" stop-color="#409900"/><stop offset="0.713" stop-color="#8a8700"/><stop offset="0.798" stop-color="#795800"/><stop offset="0.942" stop-color="#663200"/><stop offset="0.996" stop-color="#602a00"/></linearGradient>
<linearGradient id="dim47" gradientUnits="userSpaceOnUse" x1="874.5" y1="0" x2="1320.5" y2="0"><stop offset="0.000" stop-color="#00792c"/><stop offset="0.256" stop-color="#009819"/><stop offset="0.413" stop-color="#04a200"/><stop offset="0.637" stop-color="#6c9200"/><stop offset="0.709" stop-color="#8b8900"/><stop offset="0.794" stop-color="#7a5900"/><stop offset="0.937" stop-color="#673200"/><stop offset="0.996" stop-color="#602900"/></linearGradient>
<linearGradient id="dim48" gradientUnits="userSpaceOnUse" x1="874.5" y1="0" x2="1320.5" y2="0"><stop offset="0.000" stop-color="#00792c"/><stop offset="0.251" stop-color="#00981a"/><stop offset="0.413" stop-color="#04a300"/><stop offset="0.704" stop-color="#8c8b00"/><stop offset="0.785" stop-color="#7c5c00"/><stop offset="0.924" stop-color="#683400"/><stop offset="0.996" stop-color="#602900"/></linearGradient>
<linearGradient id="dim49" gradientUnits="userSpaceOnUse" x1="874.5" y1="0" x2="1320.5" y2="0"><stop offset="0.000" stop-color="#00792c"/><stop offset="0.251" stop-color="#00981b"/><stop offset="0.413" stop-color="#04a300"/><stop offset="0.704" stop-color="#8c8a00"/><stop offset="0.789" stop-color="#7b5900"/><stop offset="0.933" stop-color="#673200"/><stop offset="0.996" stop-color="#612800"/></linearGradient>
<linearGradient id="dim50" gradientUnits="userSpaceOnUse" x1="874.5" y1="0" x2="1320.5" y2="0"><stop offset="0.000" stop-color="#00792d"/><stop offset="0.251" stop-color="#00981b"/><stop offset="0.413" stop-color="#04a400"/><stop offset="0.700" stop-color="#8e8c00"/><stop offset="0.780" stop-color="#7d5c00"/><stop offset="0.915" stop-color="#6a3500"/><stop offset="0.996" stop-color="#612800"/></linearGradient>
<linearGradient id="dim51" gradientUnits="userSpaceOnUse" x1="874.5" y1="0" x2="1320.5" y2="0"><stop offset="0.000" stop-color="#00792d"/><stop offset="0.251" stop-color="#00991c"/><stop offset="0.413" stop-color="#04a400"/><stop offset="0.695" stop-color="#8f8e00"/><stop offset="0.776" stop-color="#7e5d00"/><stop offset="0.910" stop-color="#6a3500"/><stop offset="0.996" stop-color="#612800"/></linearGradient>
<linearGradient id="dim52" gradientUnits="userSpaceOnUse" x1="874.5" y1="0" x2="1320.5" y2="0"><stop offset="0.000" stop-color="#00792e"/><stop offset="0.251" stop-color="#00991c"/><stop offset="0.413" stop-color="#04a500"/><stop offset="0.695" stop-color="#8f8c00"/><stop offset="0.776" stop-color="#7e5c00"/><stop offset="0.910" stop-color="#6b3500"/><stop offset="0.996" stop-color="#612700"/></linearGradient>
<linearGradient id="dim53" gradientUnits="userSpaceOnUse" x1="874.5" y1="0" x2="1320.5" y2="0"><stop offset="0.000" stop-color="#007a2e"/><stop offset="0.251" stop-color="#00991d"/><stop offset="0.413" stop-color="#04a600"/><stop offset="0.691" stop-color="#908e00"/><stop offset="0.771" stop-color="#7f5d00"/><stop offset="0.906" stop-color="#6b3500"/><stop offset="0.996" stop-color="#622700"/></linearGradient>
<linearGradient id="dim54" gradientUnits="userSpaceOnUse" x1="874.5" y1="0" x2="1320.5" y2="0"><stop offset="0.000" stop-color="#007a2f"/><stop offset="0.251" stop-color="#009a1e"/><stop offset="0.413" stop-color="#04a600"/><stop offset="0.686" stop-color="#919000"/><stop offset="0.762" stop-color="#806000"/><stop offset="0.888" stop-color="#6e3800"/><stop offset="0.996" stop-color="#622700"/></linearGradient>
<linearGradient id="dim55" gradientUnits="userSpaceOnUse" x1="874.5" y1="0" x2="1320.5" y2="0"><stop offset="0.000" stop-color="#007a2f"/><stop offset="0.251" stop-color="#009a1e"/><stop offset="0.413" stop-color="#04a700"/><stop offset="0.686" stop-color="#918f00"/><stop offset="0.762" stop-color="#805f00"/><stop offset="0.892" stop-color="#6d3700"/><stop offset="0.996" stop-color="#622600"/></linearGradient>
<linearGradient id="dim56" gradientUnits="userSpaceOnUse" x1="874.5" y1="0" x2="1320.5" y2="0"><stop offset="0.000" stop-color="#007a30"/><stop offset="0.251" stop-color="#009a1f"/><stop offset="0.413" stop-color="#04a700"/><stop offset="0.682" stop-color="#929100"/><stop offset="0.758" stop-color="#816000"/><stop offset="0.883" stop-color="#6f3800"/><stop offset="0.996" stop-color="#622600"/></linearGradient>
<linearGradient id="dim57" gradientUnits="userSpaceOnUse" x1="874.5" y1="0" x2="1320.5" y2="0"><stop offset="0.000" stop-color="#007a30"/><stop offset="0.251" stop-color="#009a1f"/><stop offset="0.413" stop-color="#04a800"/><stop offset="0.682" stop-color="#928f00"/><stop offset="0.758" stop-color="#815f00"/><stop offset="0.888" stop-color="#6e3700"/><stop offset="0.996" stop-color="#632500"/></linearGradient>
<linearGradient id="dim58" gradientUnits="userSpaceOnUse" x1="874.5" y1="0" x2="1320.5" y2="0"><stop offset="0.000" stop-color="#007a31"/><stop offset="0.251" stop-color="#009a20"/><stop offset="0.413" stop-color="#04a900"/><stop offset="0.677" stop-color="#939100"/><stop offset="0.753" stop-color="#826000"/><stop offset="0.879" stop-color="#703800"/><stop offset="0.996" stop-color="#632500"/></linearGradient>
<linearGradient id="dim59" gradientUnits="userSpaceOnUse" x1="874.5" y1="0" x2="1320.5" y2="0"><stop offset="0.000" stop-color="#007b31"/><stop offset="0.251" stop-color="#009b21"/><stop offset="0.413" stop-color="#04a900"/><stop offset="0.673" stop-color="#949300"/><stop offset="0.744" stop-color="#846300"/><stop offset="0.865" stop-color="#713a00"/><stop offset="0.996" stop-color="#632500"/></linearGradient>
<linearGradient id="dim60" gradientUnits="userSpaceOnUse" x1="874.5" y1="0" x2="1320.5" y2="0"><stop offset="0.000" stop-color="#007b32"/><stop offset="0.251" stop-color="#009b21"/><stop offset="0.413" stop-color="#04aa00"/><stop offset="0.673" stop-color="#949100"/><stop offset="0.749" stop-color="#836000"/><stop offset="0.874" stop-color="#703800"/><stop offset="0.996" stop-color="#632400"/></linearGradient>
<linearGradient id="dim61" gradientUnits="userSpaceOnUse" x1="874.5" y1="0" x2="1320.5" y2="0"><stop offset="0.000" stop-color="#007b33"/><stop offset="0.251" stop-color="#009b22"/><stop offset="0.413" stop-color="#03ab00"/><stop offset="0.668" stop-color="#959400"/><stop offset="0.740" stop-color="#856300"/><stop offset="0.861" stop-color="#723a00"/><stop offset="0.996" stop-color="#632400"/></linearGradient>
<linearGradient id="dim62" gradientUnits="userSpaceOnUse" x1="874.5" y1="0" x2="1320.5" y2="0"><stop offset="0.000" stop-color="#007b33"/><stop offset="0.251" stop-color="#009b23"/><stop offset="0.413" stop-color="#03ab00"/><stop offset="0.664" stop-color="#979600"/><stop offset="0.735" stop-color="#866400"/><stop offset="0.852" stop-color="#743c00"/><stop offset="0.996" stop-color="#642300"/></linearGradient>
<linearGradient id="dim63" gradientUnits="userSpaceOnUse" x1="874.5" y1="0" x2="1320.5" y2="0"><stop offset="0.000" stop-color="#007b34"/><stop offset="0.251" stop-color="#009b23"/><stop offset="0.413" stop-color="#04ac00"/><stop offset="0.664" stop-color="#979400"/><stop offset="0.735" stop-color="#866300"/><stop offset="0.852" stop-color="#743b00"/><stop offset="0.996" stop-color="#642300"/></linearGradient>
<linearGradient id="dim64" gradientUnits="userSpaceOnUse" x1="874.5" y1="0" x2="1320.5" y2="0"><stop offset="0.000" stop-color="#007b34"/><stop offset="0.251" stop-color="#009c24"/><stop offset="0.413" stop-color="#04ac00"/><stop offset="0.659" stop-color="#989600"/><stop offset="0.731" stop-color="#876400"/><stop offset="0.848" stop-color="#743b00"/><stop offset="0.996" stop-color="#642300"/></linearGradient>
<linearGradient id="dim65" gradientUnits="userSpaceOnUse" x1="874.5" y1="0" x2="1320.5" y2="0"><stop offset="0.000" stop-color="#007c35"/><stop offset="0.247" stop-color="#009b25"/><stop offset="0.395" stop-color="#00ad03"/><stop offset="0.430" stop-color="#0fab00"/><stop offset="0.655" stop-color="#999900"/><stop offset="0.722" stop-color="#896700"/><stop offset="0.834" stop-color="#763e00"/><stop offset="0.996" stop-color="#642200"/></linearGradient>
<linearGradient id="dim66" gradientUnits="userSpaceOnUse" x1="874.5" y1="0" x2="1320.5" y2="0"><stop offset="0.000" stop-color="#007c35"/><stop offset="0.247" stop-color="#009b26"/><stop offset="0.386" stop-color="#00ad06"/><stop offset="0.417" stop-color="#07ad00"/><stop offset="0.655" stop-color="#999600"/><stop offset="0.722" stop-color="#896600"/><stop offset="0.834" stop-color="#773d00"/><stop offset="0.996" stop-color="#642200"/></linearGradient>
<linearGradient id="dim67" gradientUnits="userSpaceOnUse" x1="874.5" y1="0" x2="1320.5" y2="0"><stop offset="0.000" stop-color="#007c36"/><stop offset="0.247" stop-color="#009b27"/><stop offset="0.381" stop-color="#00ad08"/><stop offset="0.413" stop-color="#05ae00"/><stop offset="0.650" stop-color="#9a9900"/><stop offset="0.717" stop-color="#8a6700"/><stop offset="0.830" stop-color="#773d00"/><stop offset="0.996" stop-color="#652100"/></linearGradient>
<linearGradient id="dim68" gradientUnits="userSpaceOnUse" x1="874.5" y1="0" x2="1320.5" y2="0"><stop offset="0.000" stop-color="#007c36"/><stop offset="0.247" stop-color="#009c27"/><stop offset="0.381" stop-color="#00ad08"/><stop offset="0.413" stop-color="#05ae00"/><stop offset="0.646" stop-color="#9b9b00"/><stop offset="0.713" stop-color="#8b6800"/><stop offset="0.821" stop-color="#793f00"/><stop offset="0.996" stop-color="#652100"/></linearGradient>
<linearGradient id="dim69" gradientUnits="userSpaceOnUse" x1="874.5" y1="0" x2="1320.5" y2="0"><stop offset="0.000" stop-color="#007c37"/><stop offset="0.247" stop-color="#009c28"/><stop offset="0.381" stop-color="#00ad09"/><stop offset="0.408" stop-color="#03af00"/><stop offset="0.646" stop-color="#9b9900"/><stop offset="0.713" stop-color="#8b6700"/><stop offset="0.821" stop-color="#793e00"/><stop offset="0.996" stop-color="#652100"/></linearGradient>
<linearGradient id="dim70" gradientUnits="userSpaceOnUse" x1="874.5" y1="0" x2="1320.5" y2="0"><stop offset="0.000" stop-color="#007c38"/><stop offset="0.247" stop-color="#009c29"/><stop offset="0.381" stop-color="#00ad09"/><stop offset="0.408" stop-color="#03b000"/><stop offset="0.641" stop-color="#9c9c00"/><stop offset="0.704" stop-color="#8c6b00"/><stop offset="0.807" stop-color="#7b4100"/><stop offset="0.996" stop-color="#652000"/></linearGradient>
<linearGradient id="dim71" gradientUnits="userSpaceOnUse" x1="874.5" y1="0" x2="1320.5" y2="0"><stop offset="0.000" stop-color="#007d38"/><stop offset="0.247" stop-color="#009c29"/><stop offset="0.381" stop-color="#00ad0a"/><stop offset="0.413" stop-color="#06b000"/><stop offset="0.641" stop-color="#9c9900"/><stop offset="0.709" stop-color="#8b6700"/><stop offset="0.816" stop-color="#7a3e00"/><stop offset="0.996" stop-color="#652000"/></linearGradient>
<linearGradient id="dim72" gradientUnits="userSpaceOnUse" x1="874.5" y1="0" x2="1320.5" y2="0"><stop offset="0.000" stop-color="#007d39"/><stop offset="0.247" stop-color="#009c2a"/><stop offset="0.381" stop-color="#00ad0b"/><stop offset="0.408" stop-color="#04b001"/><stop offset="0.637" stop-color="#9d9c00"/><stop offset="0.700" stop-color="#8d6a00"/><stop offset="0.803" stop-color="#7c4100"/><stop offset="0.996" stop-color="#661f00"/></linearGradient>
<linearGradient id="dim73" gradientUnits="userSpaceOnUse" x1="874.5" y1="0" x2="1320.5" y2="0"><stop offset="0.000" stop-color="#007d39"/><stop offset="0.247" stop-color="#009c2b"/><stop offset="0.381" stop-color="#00ae0b"/><stop offset="0.408" stop-color="#05b002"/><stop offset="0.632" stop-color="#9f9e00"/><stop offset="0.695" stop-color="#8e6b00"/><stop offset="0.798" stop-color="#7c4100"/><stop offset="0.987" stop-color="#672000"/><stop offset="0.996" stop-color="#661f00"/></linearGradient>
<linearGradient id="dim74" gradientUnits="userSpaceOnUse" x1="874.5" y1="0" x2="1320.5" y2="0"><stop offset="0.000" stop-color="#007d3a"/><stop offset="0.247" stop-color="#009d2c"/><stop offset="0.381" stop-color="#00ae0c"/><stop offset="0.408" stop-color="#06b003"/><stop offset="0.632" stop-color="#9e9c00"/><stop offset="0.695" stop-color="#8e6a00"/><stop offset="0.798" stop-color="#7c4000"/><stop offset="0.987" stop-color="#672000"/><stop offset="0.996" stop-color="#661f00"/></linearGradient>
<linearGradient id="dim75" gradientUnits="userSpaceOnUse" x1="874.5" y1="0" x2="1320.5" y2="0"><stop offset="0.000" stop-color="#007d3b"/><stop offset="0.247" stop-color="#009d2c"/><stop offset="0.377" stop-color="#00ad0e"/><stop offset="0.408" stop-color="#07b004"/><stop offset="0.628" stop-color="#a09e00"/><stop offset="0.691" stop-color="#8f6b00"/><stop offset="0.794" stop-color="#7d4100"/><stop offset="0.982" stop-color="#682000"/><stop offset="0.996" stop-color="#661e00"/></linearGradient>
<linearGradient id="dim76" gradientUnits="userSpaceOnUse" x1="874.5" y1="0" x2="1320.5" y2="0"><stop offset="0.000" stop-color="#007d3b"/><stop offset="0.247" stop-color="#009d2d"/><stop offset="0.377" stop-color="#00ae0f"/><stop offset="0.404" stop-color="#05b006"/><stop offset="0.516" stop-color="#53aa00"/><stop offset="0.623" stop-color="#a1a100"/><stop offset="0.682" stop-color="#916f00"/><stop offset="0.776" stop-color="#804500"/><stop offset="0.951" stop-color="#6b2300"/><stop offset="0.996" stop-color="#661e00"/></linearGradient>
<linearGradient id="dim77" gradientUnits="userSpaceOnUse" x1="874.5" y1="0" x2="1320.5" y2="0"><stop offset="0.000" stop-color="#007e3c"/><stop offset="0.247" stop-color="#009d2e"/><stop offset="0.377" stop-color="#00ae10"/><stop offset="0.404" stop-color="#06b007"/><stop offset="0.507" stop-color="#4eab00"/><stop offset="0.623" stop-color="#a19f00"/><stop offset="0.682" stop-color="#916d00"/><stop offset="0.780" stop-color="#7f4300"/><stop offset="0.960" stop-color="#6a2100"/><stop offset="0.996" stop-color="#671d00"/></linearGradient>
<linearGradient id="dim78" gradientUnits="userSpaceOnUse" x1="874.5" y1="0" x2="1320.5" y2="0"><stop offset="0.000" stop-color="#007e3d"/><stop offset="0.247" stop-color="#009d2f"/><stop offset="0.377" stop-color="#00ae10"/><stop offset="0.404" stop-color="#07b008"/><stop offset="0.498" stop-color="#48ac00"/><stop offset="0.619" stop-color="#a2a100"/><stop offset="0.677" stop-color="#926f00"/><stop offset="0.771" stop-color="#814400"/><stop offset="0.942" stop-color="#6c2300"/><stop offset="0.996" stop-color="#671d00"/></linearGradient>
<linearGradient id="dim79" gradientUnits="userSpaceOnUse" x1="874.5" y1="0" x2="1320.5" y2="0"><stop offset="0.000" stop-color="#007e3d"/><stop offset="0.247" stop-color="#009d30"/><stop offset="0.377" stop-color="#00ae11"/><stop offset="0.404" stop-color="#08b009"/><stop offset="0.498" stop-color="#4aad00"/><stop offset="0.619" stop-color="#a29f00"/><stop offset="0.677" stop-color="#926d00"/><stop offset="0.771" stop-color="#814400"/><stop offset="0.946" stop-color="#6c2200"/><stop offset="0.996" stop-color="#671d00"/></linearGradient>
<linearGradient id="dim80" gradientUnits="userSpaceOnUse" x1="874.5" y1="0" x2="1320.5" y2="0"><stop offset="0.000" stop-color="#007e3e"/><stop offset="0.247" stop-color="#009e31"/><stop offset="0.377" stop-color="#00ae12"/><stop offset="0.399" stop-color="#06b00b"/><stop offset="0.502" stop-color="#4fad00"/><stop offset="0.614" stop-color="#a3a100"/><stop offset="0.673" stop-color="#936e00"/><stop offset="0.767" stop-color="#814400"/><stop offset="0.937" stop-color="#6d2200"/><stop offset="0.996" stop-color="#671c00"/></linearGradient>
<linearGradient id="dim81" gradientUnits="userSpaceOnUse" x1="874.5" y1="0" x2="1320.5" y2="0"><stop offset="0.000" stop-color="#007e3f"/><stop offset="0.247" stop-color="#009e31"/><stop offset="0.377" stop-color="#00ae13"/><stop offset="0.404" stop-color="#09b00b"/><stop offset="0.507" stop-color="#54ad00"/><stop offset="0.610" stop-color="#a4a400"/><stop offset="0.664" stop-color="#957300"/><stop offset="0.753" stop-color="#844700"/><stop offset="0.915" stop-color="#6f2500"/><stop offset="0.996" stop-color="#671c00"/></linearGradient>
<linearGradient id="dim82" gradientUnits="userSpaceOnUse" x1="874.5" y1="0" x2="1320.5" y2="0"><stop offset="0.000" stop-color="#007e3f"/><stop offset="0.242" stop-color="#009d33"/><stop offset="0.372" stop-color="#00ae15"/><stop offset="0.399" stop-color="#07b00d"/><stop offset="0.507" stop-color="#55ad00"/><stop offset="0.610" stop-color="#a4a100"/><stop offset="0.668" stop-color="#946e00"/><stop offset="0.762" stop-color="#824300"/><stop offset="0.933" stop-color="#6e2200"/><stop offset="0.996" stop-color="#681b00"/></linearGradient>
<linearGradient id="dim83" gradientUnits="userSpaceOnUse" x1="874.5" y1="0" x2="1320.5" y2="0"><stop offset="0.000" stop-color="#007f40"/><stop offset="0.242" stop-color="#009e34"/><stop offset="0.372" stop-color="#00ae16"/><stop offset="0.395" stop-color="#05b00f"/><stop offset="0.511" stop-color="#5bad00"/><stop offset="0.605" stop-color="#a5a400"/><stop offset="0.659" stop-color="#967200"/><stop offset="0.749" stop-color="#844700"/><stop offset="0.910" stop-color="#702400"/><stop offset="0.996" stop-color="#681b00"/></linearGradient>
<linearGradient id="dim84" gradientUnits="userSpaceOnUse" x1="874.5" y1="0" x2="1320.5" y2="0"><stop offset="0.000" stop-color="#007f41"/><stop offset="0.242" stop-color="#009e35"/><stop offset="0.372" stop-color="#00ae17"/><stop offset="0.395" stop-color="#06b010"/><stop offset="0.516" stop-color="#60ae00"/><stop offset="0.601" stop-color="#a6a700"/><stop offset="0.655" stop-color="#977300"/><stop offset="0.740" stop-color="#864900"/><stop offset="0.897" stop-color="#722600"/><stop offset="0.996" stop-color="#681a00"/></linearGradient>
<linearGradient id="dim85" gradientUnits="userSpaceOnUse" x1="874.5" y1="0" x2="1320.5" y2="0"><stop offset="0.000" stop-color="#007f41"/><stop offset="0.242" stop-color="#009e36"/><stop offset="0.372" stop-color="#00ae18"/><stop offset="0.399" stop-color="#0ab010"/><stop offset="0.520" stop-color="#66ae00"/><stop offset="0.601" stop-color="#a6a400"/><stop offset="0.655" stop-color="#977100"/><stop offset="0.744" stop-color="#854600"/><stop offset="0.906" stop-color="#712400"/><stop offset="0.996" stop-color="#681a00"/></linearGradient>
<linearGradient id="dim86" gradientUnits="userSpaceOnUse" x1="874.5" y1="0" x2="1320.5" y2="0"><stop offset="0.000" stop-color="#007f42"/><stop offset="0.242" stop-color="#009e36"/><stop offset="0.368" stop-color="#00ae1a"/><stop offset="0.395" stop-color="#08b012"/><stop offset="0.525" stop-color="#6bae00"/><stop offset="0.596" stop-color="#a8a700"/><stop offset="0.650" stop-color="#987300"/><stop offset="0.735" stop-color="#874800"/><stop offset="0.888" stop-color="#732600"/><stop offset="0.996" stop-color="#681a00"/></linearGradient>
<linearGradient id="dim87" gradientUnits="userSpaceOnUse" x1="874.5" y1="0" x2="1320.5" y2="0"><stop offset="0.000" stop-color="#007f43"/><stop offset="0.242" stop-color="#009e37"/><stop offset="0.368" stop-color="#00ae1b"/><stop offset="0.390" stop-color="#06b014"/><stop offset="0.529" stop-color="#71ae00"/><stop offset="0.592" stop-color="#a8a900"/><stop offset="0.646" stop-color="#997400"/><stop offset="0.731" stop-color="#874800"/><stop offset="0.883" stop-color="#732600"/><stop offset="0.996" stop-color="#691900"/></linearGradient>
<linearGradient id="dim88" gradientUnits="userSpaceOnUse" x1="874.5" y1="0" x2="1320.5" y2="0"><stop offset="0.000" stop-color="#007f43"/><stop offset="0.242" stop-color="#009e38"/><stop offset="0.368" stop-color="#00ae1c"/><stop offset="0.390" stop-color="#07b015"/><stop offset="0.529" stop-color="#74ae00"/><stop offset="0.592" stop-color="#a9a700"/><stop offset="0.646" stop-color="#987200"/><stop offset="0.731" stop-color="#874700"/><stop offset="0.883" stop-color="#742500"/><stop offset="0.996" stop-color="#691900"/></linearGradient>
<linearGradient id="dim89" gradientUnits="userSpaceOnUse" x1="874.5" y1="0" x2="1320.5" y2="0"><stop offset="0.000" stop-color="#008044"/><stop offset="0.242" stop-color="#009e39"/><stop offset="0.368" stop-color="#00af1d"/><stop offset="0.395" stop-color="#0bb016"/><stop offset="0.529" stop-color="#76af00"/><stop offset="0.587" stop-color="#aaaa00"/><stop offset="0.637" stop-color="#9b7700"/><stop offset="0.717" stop-color="#8a4b00"/><stop offset="0.861" stop-color="#762800"/><stop offset="0.996" stop-color="#691800"/></linearGradient>
<linearGradient id="dim90" gradientUnits="userSpaceOnUse" x1="874.5" y1="0" x2="1320.5" y2="0"><stop offset="0.000" stop-color="#008045"/><stop offset="0.242" stop-color="#009f3a"/><stop offset="0.368" stop-color="#00af1e"/><stop offset="0.395" stop-color="#0cb017"/><stop offset="0.525" stop-color="#74b000"/><stop offset="0.587" stop-color="#aaa700"/><stop offset="0.637" stop-color="#9a7500"/><stop offset="0.717" stop-color="#8a4a00"/><stop offset="0.861" stop-color="#762700"/><stop offset="0.996" stop-color="#691800"/></linearGradient>
<linearGradient id="dim91" gradientUnits="userSpaceOnUse" x1="874.5" y1="0" x2="1320.5" y2="0"><stop offset="0.000" stop-color="#008046"/><stop offset="0.242" stop-color="#009f3b"/><stop offset="0.368" stop-color="#00af1f"/><stop offset="0.395" stop-color="#0db019"/><stop offset="0.525" stop-color="#76b001"/><stop offset="0.583" stop-color="#aba900"/><stop offset="0.632" stop-color="#9b7600"/><stop offset="0.713" stop-color="#8a4a00"/><stop offset="0.857" stop-color="#772700"/><stop offset="0.996" stop-color="#691700"/></linearGradient>
<linearGradient id="dim92" gradientUnits="userSpaceOnUse" x1="874.5" y1="0" x2="1320.5" y2="0"><stop offset="0.000" stop-color="#008046"/><stop offset="0.242" stop-color="#009f3c"/><stop offset="0.368" stop-color="#00af20"/><stop offset="0.408" stop-color="#17b018"/><stop offset="0.534" stop-color="#81b000"/><stop offset="0.578" stop-color="#acac00"/><stop offset="0.628" stop-color="#9c7800"/><stop offset="0.704" stop-color="#8c4c00"/><stop offset="0.843" stop-color="#782900"/><stop offset="0.996" stop-color="#691700"/></linearGradient>
<linearGradient id="dim93" gradientUnits="userSpaceOnUse" x1="874.5" y1="0" x2="1320.5" y2="0"><stop offset="0.000" stop-color="#008047"/><stop offset="0.242" stop-color="#009f3d"/><stop offset="0.368" stop-color="#00af21"/><stop offset="0.439" stop-color="#30b014"/><stop offset="0.565" stop-color="#a2ae00"/><stop offset="0.578" stop-color="#aca900"/><stop offset="0.628" stop-color="#9c7500"/><stop offset="0.709" stop-color="#8b4900"/><stop offset="0.852" stop-color="#782600"/><stop offset="0.996" stop-color="#6a1700"/></linearGradient>
<linearGradient id="dim94" gradientUnits="userSpaceOnUse" x1="874.5" y1="0" x2="1320.5" y2="0"><stop offset="0.000" stop-color="#008048"/><stop offset="0.242" stop-color="#009f3e"/><stop offset="0.363" stop-color="#00af24"/><stop offset="0.386" stop-color="#09b01e"/><stop offset="0.511" stop-color="#70b007"/><stop offset="0.574" stop-color="#adac00"/><stop offset="0.619" stop-color="#9e7a00"/><stop offset="0.691" stop-color="#8e4f00"/><stop offset="0.821" stop-color="#7b2b00"/><stop offset="0.996" stop-color="#6a1600"/></linearGradient>
<linearGradient id="dim95" gradientUnits="userSpaceOnUse" x1="874.5" y1="0" x2="1320.5" y2="0"><stop offset="0.000" stop-color="#008149"/><stop offset="0.242" stop-color="#009f3f"/><stop offset="0.363" stop-color="#00af25"/><stop offset="0.395" stop-color="#11b01e"/><stop offset="0.520" stop-color="#7bb007"/><stop offset="0.570" stop-color="#aeae00"/><stop offset="0.619" stop-color="#9e7800"/><stop offset="0.695" stop-color="#8d4c00"/><stop offset="0.830" stop-color="#7a2900"/><stop offset="0.996" stop-color="#6a1600"/></linearGradient>
<linearGradient id="dim96" gradientUnits="userSpaceOnUse" x1="874.5" y1="0" x2="1320.5" y2="0"><stop offset="0.000" stop-color="#00814a"/><stop offset="0.242" stop-color="#00a040"/><stop offset="0.363" stop-color="#00af26"/><stop offset="0.413" stop-color="#1fb01c"/><stop offset="0.534" stop-color="#8bb005"/><stop offset="0.570" stop-color="#aeac00"/><stop offset="0.614" stop-color="#9f7a00"/><stop offset="0.686" stop-color="#8f4e00"/><stop offset="0.816" stop-color="#7c2a00"/><stop offset="0.996" stop-color="#6a1500"/></linearGradient>
<linearGradient id="dim97" gradientUnits="userSpaceOnUse" x1="874.5" y1="0" x2="1320.5" y2="0"><stop offset="0.000" stop-color="#00814a"/><stop offset="0.242" stop-color="#00a042"/><stop offset="0.363" stop-color="#00af27"/><stop offset="0.448" stop-color="#3eb018"/><stop offset="0.565" stop-color="#b0af00"/><stop offset="0.610" stop-color="#a07b00"/><stop offset="0.682" stop-color="#904f00"/><stop offset="0.807" stop-color="#7d2b00"/><stop offset="0.996" stop-color="#6a1500"/></linearGradient>
<linearGradient id="dim98" gradientUnits="userSpaceOnUse" x1="874.5" y1="0" x2="1320.5" y2="0"><stop offset="0.000" stop-color="#00814b"/><stop offset="0.242" stop-color="#00a043"/><stop offset="0.363" stop-color="#00af28"/><stop offset="0.466" stop-color="#4fb016"/><stop offset="0.561" stop-color="#aeb002"/><stop offset="0.614" stop-color="#9f7500"/><stop offset="0.691" stop-color="#8e4900"/><stop offset="0.830" stop-color="#7b2600"/><stop offset="0.996" stop-color="#6b1400"/></linearGradient>
<linearGradient id="dim99" gradientUnits="userSpaceOnUse" x1="874.5" y1="0" x2="1320.5" y2="0"><stop offset="0.000" stop-color="#00814c"/><stop offset="0.242" stop-color="#00a044"/><stop offset="0.363" stop-color="#00b029"/><stop offset="0.475" stop-color="#59b016"/><stop offset="0.561" stop-color="#afae03"/><stop offset="0.610" stop-color="#a07600"/><stop offset="0.682" stop-color="#8f4c00"/><stop offset="0.812" stop-color="#7d2900"/><stop offset="0.996" stop-color="#6b1400"/></linearGradient>
<linearGradient id="dim100" gradientUnits="userSpaceOnUse" x1="874.5" y1="0" x2="1320.5" y2="0"><stop offset="0.000" stop-color="#00814d"/><stop offset="0.242" stop-color="#00a045"/><stop offset="0.368" stop-color="#02b029"/><stop offset="0.493" stop-color="#6cb014"/><stop offset="0.556" stop-color="#b0b006"/><stop offset="0.605" stop-color="#a17800"/><stop offset="0.677" stop-color="#904c00"/><stop offset="0.807" stop-color="#7d2900"/><stop offset="0.996" stop-color="#6b1300"/></linearGradient>
<linearGradient id="dim101" gradientUnits="userSpaceOnUse" x1="874.5" y1="0" x2="1320.5" y2="0"><stop offset="0.000" stop-color="#00824e"/><stop offset="0.242" stop-color="#00a046"/><stop offset="0.368" stop-color="#03b02b"/><stop offset="0.489" stop-color="#6ab016"/><stop offset="0.556" stop-color="#afac07"/><stop offset="0.605" stop-color="#a07500"/><stop offset="0.677" stop-color="#904b00"/><stop offset="0.807" stop-color="#7d2800"/><stop offset="0.996" stop-color="#6b1300"/></linearGradient>
<linearGradient id="dim102" gradientUnits="userSpaceOnUse" x1="874.5" y1="0" x2="1320.5" y2="0"><stop offset="0.000" stop-color="#00824f"/><stop offset="0.242" stop-color="#00a147"/><stop offset="0.368" stop-color="#04b02c"/><stop offset="0.489" stop-color="#6db018"/><stop offset="0.552" stop-color="#b0af0a"/><stop offset="0.601" stop-color="#a17600"/><stop offset="0.673" stop-color="#914b00"/><stop offset="0.803" stop-color="#7e2800"/><stop offset="0.996" stop-color="#6b1300"/></linearGradient>
<linearGradient id="dim103" gradientUnits="userSpaceOnUse" x1="874.5" y1="0" x2="1320.5" y2="0"><stop offset="0.000" stop-color="#008250"/><stop offset="0.242" stop-color="#00a149"/><stop offset="0.363" stop-color="#02b02f"/><stop offset="0.484" stop-color="#6ab01a"/><stop offset="0.547" stop-color="#afb00d"/><stop offset="0.596" stop-color="#a27800"/><stop offset="0.668" stop-color="#924b00"/><stop offset="0.794" stop-color="#7f2800"/><stop offset="0.996" stop-color="#6b1200"/></linearGradient>
<linearGradient id="dim104" gradientUnits="userSpaceOnUse" x1="874.5" y1="0" x2="1320.5" y2="0"><stop offset="0.000" stop-color="#008250"/><stop offset="0.242" stop-color="#00a14a"/><stop offset="0.363" stop-color="#03b030"/><stop offset="0.484" stop-color="#6db01c"/><stop offset="0.547" stop-color="#afad0e"/><stop offset="0.596" stop-color="#a27501"/><stop offset="0.668" stop-color="#914a00"/><stop offset="0.798" stop-color="#7f2700"/><stop offset="0.996" stop-color="#6c1200"/></linearGradient>
<linearGradient id="dim105" gradientUnits="userSpaceOnUse" x1="874.5" y1="0" x2="1320.5" y2="0"><stop offset="0.000" stop-color="#008251"/><stop offset="0.242" stop-color="#00a14b"/><stop offset="0.363" stop-color="#04b032"/><stop offset="0.480" stop-color="#6ab01e"/><stop offset="0.543" stop-color="#b0b011"/><stop offset="0.587" stop-color="#a37a04"/><stop offset="0.655" stop-color="#944e00"/><stop offset="0.771" stop-color="#822b00"/><stop offset="0.996" stop-color="#6c1100"/></linearGradient>
<linearGradient id="dim106" gradientUnits="userSpaceOnUse" x1="874.5" y1="0" x2="1320.5" y2="0"><stop offset="0.000" stop-color="#008252"/><stop offset="0.242" stop-color="#00a14c"/><stop offset="0.359" stop-color="#01b034"/><stop offset="0.475" stop-color="#68b021"/><stop offset="0.538" stop-color="#aeb014"/><stop offset="0.592" stop-color="#a17404"/><stop offset="0.664" stop-color="#924800"/><stop offset="0.794" stop-color="#7f2600"/><stop offset="0.996" stop-color="#6c1100"/></linearGradient>
<linearGradient id="dim107" gradientUnits="userSpaceOnUse" x1="874.5" y1="0" x2="1320.5" y2="0"><stop offset="0.000" stop-color="#008253"/><stop offset="0.242" stop-color="#00a14e"/><stop offset="0.359" stop-color="#02b036"/><stop offset="0.475" stop-color="#6bb023"/><stop offset="0.538" stop-color="#b0ae15"/><stop offset="0.583" stop-color="#a37907"/><stop offset="0.650" stop-color="#944d00"/><stop offset="0.767" stop-color="#822a00"/><stop offset="0.996" stop-color="#6c1000"/></linearGradient>
<linearGradient id="dim108" gradientUnits="userSpaceOnUse" x1="874.5" y1="0" x2="1320.5" y2="0"><stop offset="0.000" stop-color="#008354"/><stop offset="0.247" stop-color="#00a24f"/><stop offset="0.359" stop-color="#03b038"/><stop offset="0.475" stop-color="#6db025"/><stop offset="0.534" stop-color="#b0b018"/><stop offset="0.583" stop-color="#a27608"/><stop offset="0.655" stop-color="#934900"/><stop offset="0.780" stop-color="#812600"/><stop offset="0.996" stop-color="#6c1000"/></linearGradient>
<linearGradient id="dim109" gradientUnits="userSpaceOnUse" x1="874.5" y1="0" x2="1320.5" y2="0"><stop offset="0.000" stop-color="#008355"/><stop offset="0.247" stop-color="#00a250"/><stop offset="0.354" stop-color="#01b03a"/><stop offset="0.471" stop-color="#6bb027"/><stop offset="0.534" stop-color="#afac1a"/><stop offset="0.578" stop-color="#a3770a"/><stop offset="0.646" stop-color="#954b00"/><stop offset="0.762" stop-color="#832900"/><stop offset="0.996" stop-color="#6c0f00"/></linearGradient>
<linearGradient id="dim110" gradientUnits="userSpaceOnUse" x1="874.5" y1="0" x2="1320.5" y2="0"><stop offset="0.000" stop-color="#008356"/><stop offset="0.247" stop-color="#00a351"/><stop offset="0.354" stop-color="#02b03c"/><stop offset="0.466" stop-color="#68b02a"/><stop offset="0.529" stop-color="#b0af1d"/><stop offset="0.574" stop-color="#a3790d"/><stop offset="0.641" stop-color="#964c00"/><stop offset="0.758" stop-color="#842900"/><stop offset="0.996" stop-color="#6d0f00"/></linearGradient>
<linearGradient id="dim111" gradientUnits="userSpaceOnUse" x1="874.5" y1="0" x2="1320.5" y2="0"><stop offset="0.000" stop-color="#008357"/><stop offset="0.247" stop-color="#00a353"/><stop offset="0.354" stop-color="#03b03e"/><stop offset="0.466" stop-color="#6bb02c"/><stop offset="0.525" stop-color="#afb020"/><stop offset="0.574" stop-color="#a3760e"/><stop offset="0.646" stop-color="#954800"/><stop offset="0.771" stop-color="#822500"/><stop offset="0.996" stop-color="#6d0f00"/></linearGradient>
<linearGradient id="dim112" gradientUnits="userSpaceOnUse" x1="874.5" y1="0" x2="1320.5" y2="0"><stop offset="0.000" stop-color="#008358"/><stop offset="0.247" stop-color="#00a354"/><stop offset="0.354" stop-color="#04b040"/><stop offset="0.466" stop-color="#6db02e"/><stop offset="0.525" stop-color="#afad22"/><stop offset="0.570" stop-color="#a37710"/><stop offset="0.641" stop-color="#954801"/><stop offset="0.762" stop-color="#832600"/><stop offset="0.996" stop-color="#6d0e00"/></linearGradient>
<linearGradient id="dim113" gradientUnits="userSpaceOnUse" x1="874.5" y1="0" x2="1320.5" y2="0"><stop offset="0.000" stop-color="#008359"/><stop offset="0.247" stop-color="#00a356"/><stop offset="0.350" stop-color="#01b042"/><stop offset="0.462" stop-color="#6bb031"/><stop offset="0.520" stop-color="#b0b025"/><stop offset="0.565" stop-color="#a47912"/><stop offset="0.632" stop-color="#964b03"/><stop offset="0.740" stop-color="#862900"/><stop offset="0.978" stop-color="#6f0f00"/><stop offset="0.996" stop-color="#6d0e00"/></linearGradient>
<linearGradient id="dim114" gradientUnits="userSpaceOnUse" x1="874.5" y1="0" x2="1320.5" y2="0"><stop offset="0.000" stop-color="#00845a"/><stop offset="0.247" stop-color="#00a357"/><stop offset="0.350" stop-color="#03b044"/><stop offset="0.457" stop-color="#68b034"/><stop offset="0.516" stop-color="#aeb028"/><stop offset="0.570" stop-color="#a27212"/><stop offset="0.641" stop-color="#944503"/><stop offset="0.762" stop-color="#832400"/><stop offset="0.996" stop-color="#6d0d00"/></linearGradient>
<linearGradient id="dim115" gradientUnits="userSpaceOnUse" x1="874.5" y1="0" x2="1320.5" y2="0"><stop offset="0.000" stop-color="#00845b"/><stop offset="0.247" stop-color="#00a359"/><stop offset="0.350" stop-color="#04b046"/><stop offset="0.457" stop-color="#6bb036"/><stop offset="0.516" stop-color="#b0ae2a"/><stop offset="0.561" stop-color="#a37716"/><stop offset="0.628" stop-color="#964a06"/><stop offset="0.731" stop-color="#872900"/><stop offset="0.964" stop-color="#700e00"/><stop offset="0.996" stop-color="#6d0d00"/></linearGradient>
<linearGradient id="dim116" gradientUnits="userSpaceOnUse" x1="874.5" y1="0" x2="1320.5" y2="0"><stop offset="0.000" stop-color="#00845c"/><stop offset="0.247" stop-color="#00a35a"/><stop offset="0.345" stop-color="#01b049"/><stop offset="0.453" stop-color="#68b039"/><stop offset="0.511" stop-color="#afb02e"/><stop offset="0.556" stop-color="#a47818"/><stop offset="0.623" stop-color="#964a07"/><stop offset="0.726" stop-color="#872900"/><stop offset="0.960" stop-color="#700e00"/><stop offset="0.996" stop-color="#6e0c00"/></linearGradient>
<linearGradient id="dim117" gradientUnits="userSpaceOnUse" x1="874.5" y1="0" x2="1320.5" y2="0"><stop offset="0.000" stop-color="#00845d"/><stop offset="0.251" stop-color="#00a45c"/><stop offset="0.345" stop-color="#02b04b"/><stop offset="0.453" stop-color="#6bb03b"/><stop offset="0.511" stop-color="#afac2f"/><stop offset="0.556" stop-color="#a37519"/><stop offset="0.623" stop-color="#964808"/><stop offset="0.726" stop-color="#872700"/><stop offset="0.964" stop-color="#700d00"/><stop offset="0.996" stop-color="#6e0c00"/></linearGradient>
<linearGradient id="dim118" gradientUnits="userSpaceOnUse" x1="874.5" y1="0" x2="1320.5" y2="0"><stop offset="0.000" stop-color="#00845e"/><stop offset="0.251" stop-color="#00a45d"/><stop offset="0.345" stop-color="#03b04d"/><stop offset="0.453" stop-color="#6eb03d"/><stop offset="0.507" stop-color="#b0af33"/><stop offset="0.552" stop-color="#a4771c"/><stop offset="0.619" stop-color="#96490a"/><stop offset="0.722" stop-color="#882700"/><stop offset="0.955" stop-color="#710d00"/><stop offset="0.996" stop-color="#6e0b00"/></linearGradient>
<linearGradient id="dim119" gradientUnits="userSpaceOnUse" x1="874.5" y1="0" x2="1320.5" y2="0"><stop offset="0.000" stop-color="#00845f"/><stop offset="0.251" stop-color="#00a55f"/><stop offset="0.345" stop-color="#04b04f"/><stop offset="0.448" stop-color="#6bb040"/><stop offset="0.502" stop-color="#afb036"/><stop offset="0.552" stop-color="#a3741d"/><stop offset="0.619" stop-color="#96470a"/><stop offset="0.726" stop-color="#872500"/><stop offset="0.973" stop-color="#700c00"/><stop offset="0.996" stop-color="#6e0b00"/></linearGradient>
<linearGradient id="dim120" gradientUnits="userSpaceOnUse" x1="874.5" y1="0" x2="1320.5" y2="0"><stop offset="0.000" stop-color="#008561"/><stop offset="0.251" stop-color="#00a561"/><stop offset="0.341" stop-color="#02b052"/><stop offset="0.444" stop-color="#69b043"/><stop offset="0.502" stop-color="#afad38"/><stop offset="0.547" stop-color="#a47520"/><stop offset="0.614" stop-color="#96470c"/><stop offset="0.722" stop-color="#882500"/><stop offset="0.969" stop-color="#700c00"/><stop offset="0.996" stop-color="#6e0a00"/></linearGradient>
<linearGradient id="dim121" gradientUnits="userSpaceOnUse" x1="874.5" y1="0" x2="1320.5" y2="0"><stop offset="0.000" stop-color="#008562"/><stop offset="0.251" stop-color="#00a563"/><stop offset="0.341" stop-color="#03b054"/><stop offset="0.444" stop-color="#6bb046"/><stop offset="0.498" stop-color="#b0b03c"/><stop offset="0.543" stop-color="#a47722"/><stop offset="0.610" stop-color="#97480e"/><stop offset="0.717" stop-color="#882500"/><stop offset="0.960" stop-color="#710c00"/><stop offset="0.996" stop-color="#6e0a00"/></linearGradient>
<linearGradient id="dim122" gradientUnits="userSpaceOnUse" x1="874.5" y1="0" x2="1320.5" y2="0"><stop offset="0.000" stop-color="#008563"/><stop offset="0.256" stop-color="#00a664"/><stop offset="0.341" stop-color="#04b057"/><stop offset="0.444" stop-color="#6eb048"/><stop offset="0.493" stop-color="#aeb040"/><stop offset="0.543" stop-color="#a47423"/><stop offset="0.610" stop-color="#96460f"/><stop offset="0.722" stop-color="#882300"/><stop offset="0.978" stop-color="#700a00"/><stop offset="0.996" stop-color="#6e0900"/></linearGradient>
<linearGradient id="dim123" gradientUnits="userSpaceOnUse" x1="874.5" y1="0" x2="1320.5" y2="0"><stop offset="0.000" stop-color="#008564"/><stop offset="0.256" stop-color="#00a666"/><stop offset="0.336" stop-color="#01b059"/><stop offset="0.435" stop-color="#66b04c"/><stop offset="0.493" stop-color="#b0ae42"/><stop offset="0.538" stop-color="#a47526"/><stop offset="0.605" stop-color="#974710"/><stop offset="0.717" stop-color="#882200"/><stop offset="0.973" stop-color="#700a00"/><stop offset="0.996" stop-color="#6e0900"/></linearGradient>
<linearGradient id="dim124" gradientUnits="userSpaceOnUse" x1="874.5" y1="0" x2="1320.5" y2="0"><stop offset="0.000" stop-color="#008565"/><stop offset="0.256" stop-color="#00a668"/><stop offset="0.336" stop-color="#02b05c"/><stop offset="0.435" stop-color="#69b04f"/><stop offset="0.489" stop-color="#afb046"/><stop offset="0.534" stop-color="#a57629"/><stop offset="0.596" stop-color="#984913"/><stop offset="0.704" stop-color="#8a2402"/><stop offset="0.933" stop-color="#740c00"/><stop offset="0.996" stop-color="#6e0800"/></linearGradient>
<linearGradient id="dim125" gradientUnits="userSpaceOnUse" x1="874.5" y1="0" x2="1320.5" y2="0"><stop offset="0.000" stop-color="#008566"/><stop offset="0.256" stop-color="#00a66a"/><stop offset="0.336" stop-color="#03b05e"/><stop offset="0.435" stop-color="#6bb052"/><stop offset="0.489" stop-color="#afac47"/><stop offset="0.534" stop-color="#a4732a"/><stop offset="0.601" stop-color="#974513"/><stop offset="0.713" stop-color="#882101"/><stop offset="0.960" stop-color="#720a00"/><stop offset="0.996" stop-color="#6f0800"/></linearGradient>
<linearGradient id="dim126" gradientUnits="userSpaceOnUse" x1="874.5" y1="0" x2="1320.5" y2="0"><stop offset="0.000" stop-color="#008668"/><stop offset="0.260" stop-color="#00a76c"/><stop offset="0.332" stop-color="#01b061"/><stop offset="0.430" stop-color="#69b055"/><stop offset="0.484" stop-color="#b0af4c"/><stop offset="0.525" stop-color="#a67930"/><stop offset="0.587" stop-color="#994a17"/><stop offset="0.691" stop-color="#8b2504"/><stop offset="0.888" stop-color="#780d00"/><stop offset="0.996" stop-color="#6f0800"/></linearGradient>
<linearGradient id="dim127" gradientUnits="userSpaceOnUse" x1="874.5" y1="0" x2="1320.5" y2="0"><stop offset="0.000" stop-color="#008669"/><stop offset="0.260" stop-color="#00a76e"/><stop offset="0.332" stop-color="#02b064"/><stop offset="0.430" stop-color="#6cb058"/><stop offset="0.480" stop-color="#aeb050"/><stop offset="0.529" stop-color="#a4722e"/><stop offset="0.596" stop-color="#974415"/><stop offset="0.713" stop-color="#881f02"/><stop offset="0.960" stop-color="#720900"/><stop offset="0.996" stop-color="#6f0700"/></linearGradient>
<linearGradient id="dim128" gradientUnits="userSpaceOnUse" x1="874.5" y1="0" x2="1320.5" y2="0"><stop offset="0.000" stop-color="#00866a"/><stop offset="0.260" stop-color="#00a770"/><stop offset="0.332" stop-color="#03b067"/><stop offset="0.426" stop-color="#69b05b"/><stop offset="0.480" stop-color="#b0ad52"/><stop offset="0.525" stop-color="#a57331"/><stop offset="0.592" stop-color="#974417"/><stop offset="0.704" stop-color="#892004"/><stop offset="0.928" stop-color="#740a00"/><stop offset="0.996" stop-color="#6f0700"/></linearGradient>
<linearGradient id="dim129" gradientUnits="userSpaceOnUse" x1="874.5" y1="0" x2="1320.5" y2="0"><stop offset="0.000" stop-color="#00866b"/><stop offset="0.265" stop-color="#00a872"/><stop offset="0.332" stop-color="#04b069"/><stop offset="0.426" stop-color="#6cb05e"/><stop offset="0.475" stop-color="#b0b057"/><stop offset="0.516" stop-color="#a67937"/><stop offset="0.578" stop-color="#99491c"/><stop offset="0.682" stop-color="#8b2407"/><stop offset="0.834" stop-color="#7c0f00"/><stop offset="0.996" stop-color="#6f0600"/></linearGradient>
<linearGradient id="dim130" gradientUnits="userSpaceOnUse" x1="874.5" y1="0" x2="1320.5" y2="0"><stop offset="0.000" stop-color="#00866d"/><stop offset="0.265" stop-color="#00a874"/><stop offset="0.327" stop-color="#01b06d"/><stop offset="0.422" stop-color="#69b062"/><stop offset="0.471" stop-color="#aeb05b"/><stop offset="0.520" stop-color="#a57135"/><stop offset="0.587" stop-color="#98431a"/><stop offset="0.700" stop-color="#891f05"/><stop offset="0.906" stop-color="#760a00"/><stop offset="0.996" stop-color="#6f0600"/></linearGradient>
<linearGradient id="dim131" gradientUnits="userSpaceOnUse" x1="874.5" y1="0" x2="1320.5" y2="0"><stop offset="0.000" stop-color="#00866e"/><stop offset="0.269" stop-color="#00a976"/><stop offset="0.327" stop-color="#02b06f"/><stop offset="0.422" stop-color="#6cb065"/><stop offset="0.471" stop-color="#b0ae5d"/><stop offset="0.511" stop-color="#a6773c"/><stop offset="0.574" stop-color="#9a481f"/><stop offset="0.677" stop-color="#8b2309"/><stop offset="0.830" stop-color="#7d0e00"/><stop offset="0.996" stop-color="#6f0500"/></linearGradient>
<linearGradient id="dim132" gradientUnits="userSpaceOnUse" x1="874.5" y1="0" x2="1320.5" y2="0"><stop offset="0.000" stop-color="#00876f"/><stop offset="0.269" stop-color="#00a978"/><stop offset="0.327" stop-color="#04b072"/><stop offset="0.417" stop-color="#69b069"/><stop offset="0.466" stop-color="#afb063"/><stop offset="0.511" stop-color="#a6743c"/><stop offset="0.574" stop-color="#994620"/><stop offset="0.682" stop-color="#8a2109"/><stop offset="0.834" stop-color="#7c0d00"/><stop offset="0.996" stop-color="#6f0500"/></linearGradient>
<linearGradient id="dim133" gradientUnits="userSpaceOnUse" x1="874.5" y1="0" x2="1320.5" y2="0"><stop offset="0.000" stop-color="#008771"/><stop offset="0.274" stop-color="#00aa7b"/><stop offset="0.323" stop-color="#01b076"/><stop offset="0.413" stop-color="#66b06d"/><stop offset="0.466" stop-color="#afac64"/><stop offset="0.507" stop-color="#a67640"/><stop offset="0.570" stop-color="#9a4622"/><stop offset="0.673" stop-color="#8b220b"/><stop offset="0.830" stop-color="#7d0c00"/><stop offset="0.996" stop-color="#6f0400"/></linearGradient>
<linearGradient id="dim134" gradientUnits="userSpaceOnUse" x1="874.5" y1="0" x2="1320.5" y2="0"><stop offset="0.000" stop-color="#008772"/><stop offset="0.274" stop-color="#00aa7d"/><stop offset="0.323" stop-color="#02b079"/><stop offset="0.413" stop-color="#69b070"/><stop offset="0.462" stop-color="#b0af6a"/><stop offset="0.502" stop-color="#a77744"/><stop offset="0.561" stop-color="#9b4926"/><stop offset="0.659" stop-color="#8c240d"/><stop offset="0.830" stop-color="#7d0c00"/><stop offset="0.996" stop-color="#6f0400"/></linearGradient>
<linearGradient id="dim135" gradientUnits="userSpaceOnUse" x1="874.5" y1="0" x2="1320.5" y2="0"><stop offset="0.000" stop-color="#008773"/><stop offset="0.278" stop-color="#00ab80"/><stop offset="0.323" stop-color="#03b07c"/><stop offset="0.413" stop-color="#6cb074"/><stop offset="0.457" stop-color="#aeb06f"/><stop offset="0.502" stop-color="#a77445"/><stop offset="0.565" stop-color="#9a4525"/><stop offset="0.668" stop-color="#8b210c"/><stop offset="0.839" stop-color="#7c0a00"/><stop offset="0.996" stop-color="#6f0400"/></linearGradient>
<linearGradient id="dim136" gradientUnits="userSpaceOnUse" x1="874.5" y1="0" x2="1320.5" y2="0"><stop offset="0.000" stop-color="#008775"/><stop offset="0.283" stop-color="#00ab82"/><stop offset="0.318" stop-color="#00b07f"/><stop offset="0.408" stop-color="#69b078"/><stop offset="0.457" stop-color="#b0ad71"/><stop offset="0.498" stop-color="#a77549"/><stop offset="0.556" stop-color="#9b4829"/><stop offset="0.655" stop-color="#8d230f"/><stop offset="0.834" stop-color="#7d0a00"/><stop offset="0.996" stop-color="#6f0400"/></linearGradient>
<linearGradient id="dim137" gradientUnits="userSpaceOnUse" x1="874.5" y1="0" x2="1320.5" y2="0"><stop offset="0.000" stop-color="#008776"/><stop offset="0.287" stop-color="#00ac85"/><stop offset="0.318" stop-color="#01b083"/><stop offset="0.404" stop-color="#66b07c"/><stop offset="0.453" stop-color="#b0b077"/><stop offset="0.493" stop-color="#a8774d"/><stop offset="0.552" stop-color="#9c482b"/><stop offset="0.650" stop-color="#8d2310"/><stop offset="0.830" stop-color="#7d0900"/><stop offset="0.996" stop-color="#6f0300"/></linearGradient>
<linearGradient id="dim138" gradientUnits="userSpaceOnUse" x1="874.5" y1="0" x2="1320.5" y2="0"><stop offset="0.000" stop-color="#008878"/><stop offset="0.291" stop-color="#00ad88"/><stop offset="0.318" stop-color="#03b086"/><stop offset="0.404" stop-color="#69b080"/><stop offset="0.448" stop-color="#adb07b"/><stop offset="0.498" stop-color="#a66f4a"/><stop offset="0.561" stop-color="#9a4229"/><stop offset="0.668" stop-color="#8b1e0e"/><stop offset="0.852" stop-color="#7b0700"/><stop offset="0.996" stop-color="#6f0300"/></linearGradient>
<linearGradient id="dim139" gradientUnits="userSpaceOnUse" x1="874.5" y1="0" x2="1320.5" y2="0"><stop offset="0.000" stop-color="#008879"/><stop offset="0.296" stop-color="#00ae8b"/><stop offset="0.318" stop-color="#04b089"/><stop offset="0.404" stop-color="#6cb084"/><stop offset="0.448" stop-color="#b0ae7e"/><stop offset="0.489" stop-color="#a87552"/><stop offset="0.547" stop-color="#9c472f"/><stop offset="0.646" stop-color="#8d2212"/><stop offset="0.830" stop-color="#7d0800"/><stop offset="0.996" stop-color="#6f0300"/></linearGradient>
<linearGradient id="dim140" gradientUnits="userSpaceOnUse" x1="874.5" y1="0" x2="1320.5" y2="0"><stop offset="0.000" stop-color="#00887b"/><stop offset="0.300" stop-color="#00ae8e"/><stop offset="0.318" stop-color="#05b08d"/><stop offset="0.404" stop-color="#70b088"/><stop offset="0.444" stop-color="#afb084"/><stop offset="0.489" stop-color="#a77253"/><stop offset="0.547" stop-color="#9b452f"/><stop offset="0.646" stop-color="#8d2113"/><stop offset="0.834" stop-color="#7d0700"/><stop offset="0.996" stop-color="#6f0200"/></linearGradient>
<linearGradient id="dim141" gradientUnits="userSpaceOnUse" x1="874.5" y1="0" x2="1320.5" y2="0"><stop offset="0.000" stop-color="#00887c"/><stop offset="0.305" stop-color="#00af91"/><stop offset="0.323" stop-color="#0cb090"/><stop offset="0.404" stop-color="#73b08c"/><stop offset="0.444" stop-color="#b0ac86"/><stop offset="0.484" stop-color="#a87357"/><stop offset="0.543" stop-color="#9c4532"/><stop offset="0.641" stop-color="#8d2114"/><stop offset="0.834" stop-color="#7d0600"/><stop offset="0.996" stop-color="#6f0200"/></linearGradient>
<linearGradient id="dim142" gradientUnits="userSpaceOnUse" x1="874.5" y1="0" x2="1320.5" y2="0"><stop offset="0.000" stop-color="#00887e"/><stop offset="0.314" stop-color="#03b095"/><stop offset="0.395" stop-color="#69b091"/><stop offset="0.439" stop-color="#b0af8d"/><stop offset="0.480" stop-color="#a9755c"/><stop offset="0.538" stop-color="#9d4635"/><stop offset="0.637" stop-color="#8e2016"/><stop offset="0.830" stop-color="#7d0600"/><stop offset="0.996" stop-color="#6f0200"/></linearGradient>
<linearGradient id="dim143" gradientUnits="userSpaceOnUse" x1="874.5" y1="0" x2="1320.5" y2="0"><stop offset="0.000" stop-color="#008880"/><stop offset="0.309" stop-color="#00b099"/><stop offset="0.390" stop-color="#66b095"/><stop offset="0.435" stop-color="#aeb093"/><stop offset="0.480" stop-color="#a8715d"/><stop offset="0.538" stop-color="#9c4436"/><stop offset="0.637" stop-color="#8d1f16"/><stop offset="0.834" stop-color="#7d0500"/><stop offset="0.996" stop-color="#6f0100"/></linearGradient>
<linearGradient id="dim144" gradientUnits="userSpaceOnUse" x1="874.5" y1="0" x2="1320.5" y2="0"><stop offset="0.000" stop-color="#008981"/><stop offset="0.309" stop-color="#01b09d"/><stop offset="0.390" stop-color="#69b09a"/><stop offset="0.435" stop-color="#b0ad95"/><stop offset="0.475" stop-color="#a97362"/><stop offset="0.534" stop-color="#9d4438"/><stop offset="0.632" stop-color="#8e1f18"/><stop offset="0.830" stop-color="#7d0400"/><stop offset="0.996" stop-color="#6f0100"/></linearGradient>
<linearGradient id="dim145" gradientUnits="userSpaceOnUse" x1="874.5" y1="0" x2="1320.5" y2="0"><stop offset="0.000" stop-color="#008983"/><stop offset="0.309" stop-color="#03b0a1"/><stop offset="0.390" stop-color="#6db09e"/><stop offset="0.430" stop-color="#b0b09d"/><stop offset="0.471" stop-color="#a97567"/><stop offset="0.529" stop-color="#9d453b"/><stop offset="0.623" stop-color="#8f201a"/><stop offset="0.816" stop-color="#7e0502"/><stop offset="0.996" stop-color="#6f0100"/></linearGradient>
<linearGradient id="dim146" gradientUnits="userSpaceOnUse" x1="874.5" y1="0" x2="1320.5" y2="0"><stop offset="0.000" stop-color="#008984"/><stop offset="0.305" stop-color="#00b0a5"/><stop offset="0.381" stop-color="#63b0a3"/><stop offset="0.426" stop-color="#adb0a2"/><stop offset="0.475" stop-color="#a86c63"/><stop offset="0.534" stop-color="#9c403a"/><stop offset="0.632" stop-color="#8d1d19"/><stop offset="0.839" stop-color="#7d0301"/><stop offset="0.996" stop-color="#6f0100"/></linearGradient>
<linearGradient id="dim147" gradientUnits="userSpaceOnUse" x1="874.5" y1="0" x2="1320.5" y2="0"><stop offset="0.000" stop-color="#008986"/><stop offset="0.305" stop-color="#01b0a9"/><stop offset="0.381" stop-color="#66b0a8"/><stop offset="0.426" stop-color="#b0aea6"/><stop offset="0.466" stop-color="#aa736d"/><stop offset="0.525" stop-color="#9e433f"/><stop offset="0.619" stop-color="#8f1f1d"/><stop offset="0.812" stop-color="#7e0403"/><stop offset="0.996" stop-color="#6f0000"/></linearGradient>
<linearGradient id="dim148" gradientUnits="userSpaceOnUse" x1="874.5" y1="0" x2="1320.5" y2="0"><stop offset="0.000" stop-color="#008988"/><stop offset="0.305" stop-color="#02b0ad"/><stop offset="0.381" stop-color="#6ab0ad"/><stop offset="0.422" stop-color="#afb0ad"/><stop offset="0.466" stop-color="#aa6f6d"/><stop offset="0.525" stop-color="#9d4140"/><stop offset="0.623" stop-color="#8e1d1c"/><stop offset="0.825" stop-color="#7d0202"/><stop offset="0.996" stop-color="#6f0000"/></linearGradient>
<linearGradient id="dim149" gradientUnits="userSpaceOnUse" x1="874.5" y1="0" x2="1320.5" y2="0"><stop offset="0.000" stop-color="#00898a"/><stop offset="0.305" stop-color="#04afb1"/><stop offset="0.381" stop-color="#6caeb0"/><stop offset="0.422" stop-color="#b0acaf"/><stop offset="0.462" stop-color="#aa7173"/><stop offset="0.516" stop-color="#9f4446"/><stop offset="0.605" stop-color="#902021"/><stop offset="0.785" stop-color="#800506"/><stop offset="0.996" stop-color="#6f0000"/></linearGradient>
<linearGradient id="dim150" gradientUnits="userSpaceOnUse" x1="874.5" y1="0" x2="1320.5" y2="0"><stop offset="0.000" stop-color="#00888a"/><stop offset="0.300" stop-color="#00acb2"/><stop offset="0.381" stop-color="#6da9b1"/><stop offset="0.422" stop-color="#b0a7af"/><stop offset="0.462" stop-color="#aa6d73"/><stop offset="0.520" stop-color="#9e3f44"/><stop offset="0.614" stop-color="#8f1d1f"/><stop offset="0.807" stop-color="#7e0304"/><stop offset="0.996" stop-color="#6f0001"/></linearGradient>
<linearGradient id="dim151" gradientUnits="userSpaceOnUse" x1="874.5" y1="0" x2="1320.5" y2="0"><stop offset="0.000" stop-color="#00878b"/><stop offset="0.300" stop-color="#02a9b4"/><stop offset="0.381" stop-color="#6ea5b2"/><stop offset="0.422" stop-color="#b0a2af"/><stop offset="0.462" stop-color="#aa6a74"/><stop offset="0.520" stop-color="#9e3d44"/><stop offset="0.614" stop-color="#8f1b20"/><stop offset="0.807" stop-color="#7e0205"/><stop offset="0.996" stop-color="#6f0001"/></linearGradient>
<linearGradient id="dim152" gradientUnits="userSpaceOnUse" x1="874.5" y1="0" x2="1320.5" y2="0"><stop offset="0.000" stop-color="#00868c"/><stop offset="0.300" stop-color="#03a6b5"/><stop offset="0.386" stop-color="#75a0b2"/><stop offset="0.422" stop-color="#b09db0"/><stop offset="0.462" stop-color="#a96774"/><stop offset="0.520" stop-color="#9d3b45"/><stop offset="0.614" stop-color="#8f1a20"/><stop offset="0.807" stop-color="#7e0105"/><stop offset="0.996" stop-color="#6f0001"/></linearGradient>
<linearGradient id="dim153" gradientUnits="userSpaceOnUse" x1="874.5" y1="0" x2="1320.5" y2="0"><stop offset="0.000" stop-color="#00868c"/><stop offset="0.296" stop-color="#00a3b6"/><stop offset="0.377" stop-color="#699db3"/><stop offset="0.422" stop-color="#b098b0"/><stop offset="0.462" stop-color="#a96375"/><stop offset="0.520" stop-color="#9d3945"/><stop offset="0.614" stop-color="#8f1921"/><stop offset="0.807" stop-color="#7e0105"/><stop offset="0.996" stop-color="#6f0001"/></linearGradient>
<linearGradient id="dim154" gradientUnits="userSpaceOnUse" x1="874.5" y1="0" x2="1320.5" y2="0"><stop offset="0.000" stop-color="#00858d"/><stop offset="0.296" stop-color="#01a0b8"/><stop offset="0.386" stop-color="#7798b3"/><stop offset="0.422" stop-color="#af93b0"/><stop offset="0.462" stop-color="#a96076"/><stop offset="0.520" stop-color="#9d3746"/><stop offset="0.614" stop-color="#8e1821"/><stop offset="0.807" stop-color="#7e0006"/><stop offset="0.996" stop-color="#6f0002"/></linearGradient>
<linearGradient id="dim155" gradientUnits="userSpaceOnUse" x1="874.5" y1="0" x2="1320.5" y2="0"><stop offset="0.000" stop-color="#00848e"/><stop offset="0.296" stop-color="#029db9"/><stop offset="0.386" stop-color="#7793b4"/><stop offset="0.422" stop-color="#af8eb0"/><stop offset="0.466" stop-color="#a85971"/><stop offset="0.525" stop-color="#9c3344"/><stop offset="0.623" stop-color="#8d1520"/><stop offset="0.816" stop-color="#7d0006"/><stop offset="0.996" stop-color="#6f0002"/></linearGradient>
<linearGradient id="dim156" gradientUnits="userSpaceOnUse" x1="874.5" y1="0" x2="1320.5" y2="0"><stop offset="0.000" stop-color="#00838f"/><stop offset="0.296" stop-color="#049aba"/><stop offset="0.390" stop-color="#7f8fb4"/><stop offset="0.422" stop-color="#af89b0"/><stop offset="0.466" stop-color="#a85672"/><stop offset="0.525" stop-color="#9c3145"/><stop offset="0.623" stop-color="#8d1420"/><stop offset="0.816" stop-color="#7d0006"/><stop offset="0.996" stop-color="#6f0002"/></linearGradient>
<linearGradient id="dim157" gradientUnits="userSpaceOnUse" x1="874.5" y1="0" x2="1320.5" y2="0"><stop offset="0.000" stop-color="#00828f"/><stop offset="0.291" stop-color="#0098bc"/><stop offset="0.386" stop-color="#798bb5"/><stop offset="0.422" stop-color="#ae85b0"/><stop offset="0.466" stop-color="#a85372"/><stop offset="0.525" stop-color="#9c2f45"/><stop offset="0.623" stop-color="#8d1321"/><stop offset="0.812" stop-color="#7d0007"/><stop offset="0.996" stop-color="#6f0002"/></linearGradient>
<linearGradient id="dim158" gradientUnits="userSpaceOnUse" x1="874.5" y1="0" x2="1320.5" y2="0"><stop offset="0.000" stop-color="#008190"/><stop offset="0.287" stop-color="#0095bd"/><stop offset="0.354" stop-color="#4e8cb8"/><stop offset="0.422" stop-color="#ae80b0"/><stop offset="0.466" stop-color="#a75073"/><stop offset="0.525" stop-color="#9b2e46"/><stop offset="0.623" stop-color="#8d1221"/><stop offset="0.807" stop-color="#7d0008"/><stop offset="0.996" stop-color="#6f0003"/></linearGradient>
<linearGradient id="dim159" gradientUnits="userSpaceOnUse" x1="874.5" y1="0" x2="1320.5" y2="0"><stop offset="0.000" stop-color="#008091"/><stop offset="0.283" stop-color="#0092bd"/><stop offset="0.300" stop-color="#0d90be"/><stop offset="0.404" stop-color="#9380b3"/><stop offset="0.426" stop-color="#af77ab"/><stop offset="0.466" stop-color="#a74d73"/><stop offset="0.525" stop-color="#9b2c46"/><stop offset="0.623" stop-color="#8d1122"/><stop offset="0.807" stop-color="#7d0009"/><stop offset="0.996" stop-color="#6f0003"/></linearGradient>
<linearGradient id="dim160" gradientUnits="userSpaceOnUse" x1="874.5" y1="0" x2="1320.5" y2="0"><stop offset="0.000" stop-color="#007f91"/><stop offset="0.278" stop-color="#008fbe"/><stop offset="0.291" stop-color="#048ebf"/><stop offset="0.399" stop-color="#8d7cb4"/><stop offset="0.426" stop-color="#af73ab"/><stop offset="0.466" stop-color="#a74b74"/><stop offset="0.529" stop-color="#9a2844"/><stop offset="0.632" stop-color="#8b0e20"/><stop offset="0.812" stop-color="#7d0009"/><stop offset="0.996" stop-color="#6f0003"/></linearGradient>
<linearGradient id="dim161" gradientUnits="userSpaceOnUse" x1="874.5" y1="0" x2="1320.5" y2="0"><stop offset="0.000" stop-color="#007e92"/><stop offset="0.269" stop-color="#008dbd"/><stop offset="0.291" stop-color="#068bc0"/><stop offset="0.404" stop-color="#9477b4"/><stop offset="0.426" stop-color="#af6fab"/><stop offset="0.466" stop-color="#a74874"/><stop offset="0.529" stop-color="#9a2745"/><stop offset="0.632" stop-color="#8b0d21"/><stop offset="0.803" stop-color="#7d000a"/><stop offset="0.996" stop-color="#6f0004"/></linearGradient>
<linearGradient id="dim162" gradientUnits="userSpaceOnUse" x1="874.5" y1="0" x2="1320.5" y2="0"><stop offset="0.000" stop-color="#007d93"/><stop offset="0.265" stop-color="#008bbe"/><stop offset="0.287" stop-color="#0289c2"/><stop offset="0.399" stop-color="#8e74b5"/><stop offset="0.426" stop-color="#b06bac"/><stop offset="0.466" stop-color="#a74575"/><stop offset="0.529" stop-color="#9a2546"/><stop offset="0.632" stop-color="#8b0c21"/><stop offset="0.798" stop-color="#7d000b"/><stop offset="0.996" stop-color="#6f0004"/></linearGradient>
<linearGradient id="dim163" gradientUnits="userSpaceOnUse" x1="874.5" y1="0" x2="1320.5" y2="0"><stop offset="0.000" stop-color="#007c93"/><stop offset="0.260" stop-color="#0088be"/><stop offset="0.287" stop-color="#0486c3"/><stop offset="0.404" stop-color="#9470b4"/><stop offset="0.426" stop-color="#b068ac"/><stop offset="0.466" stop-color="#a74375"/><stop offset="0.529" stop-color="#9a2346"/><stop offset="0.632" stop-color="#8b0b22"/><stop offset="0.794" stop-color="#7d000c"/><stop offset="0.996" stop-color="#6f0004"/></linearGradient>
<linearGradient id="dim164" gradientUnits="userSpaceOnUse" x1="874.5" y1="0" x2="1320.5" y2="0"><stop offset="0.000" stop-color="#007b94"/><stop offset="0.256" stop-color="#0086be"/><stop offset="0.283" stop-color="#0084c4"/><stop offset="0.404" stop-color="#956cb4"/><stop offset="0.426" stop-color="#b064ad"/><stop offset="0.466" stop-color="#a64076"/><stop offset="0.529" stop-color="#9a2247"/><stop offset="0.632" stop-color="#8b0a22"/><stop offset="0.789" stop-color="#7e000d"/><stop offset="0.996" stop-color="#6f0004"/></linearGradient>
<linearGradient id="dim165" gradientUnits="userSpaceOnUse" x1="874.5" y1="0" x2="1320.5" y2="0"><stop offset="0.000" stop-color="#007a95"/><stop offset="0.251" stop-color="#0084bf"/><stop offset="0.283" stop-color="#0181c5"/><stop offset="0.413" stop-color="#a166b3"/><stop offset="0.426" stop-color="#b060ad"/><stop offset="0.466" stop-color="#a63e76"/><stop offset="0.529" stop-color="#9a2047"/><stop offset="0.632" stop-color="#8b0923"/><stop offset="0.785" stop-color="#7e000e"/><stop offset="0.996" stop-color="#6f0005"/></linearGradient>
<linearGradient id="dim166" gradientUnits="userSpaceOnUse" x1="874.5" y1="0" x2="1320.5" y2="0"><stop offset="0.000" stop-color="#007995"/><stop offset="0.247" stop-color="#0082bf"/><stop offset="0.283" stop-color="#037ec6"/><stop offset="0.422" stop-color="#ac5fb1"/><stop offset="0.457" stop-color="#a84181"/><stop offset="0.516" stop-color="#9c234f"/><stop offset="0.610" stop-color="#8e0c29"/><stop offset="0.762" stop-color="#7f0010"/><stop offset="0.996" stop-color="#6f0005"/></linearGradient>
<linearGradient id="dim167" gradientUnits="userSpaceOnUse" x1="874.5" y1="0" x2="1320.5" y2="0"><stop offset="0.000" stop-color="#007896"/><stop offset="0.242" stop-color="#0080bf"/><stop offset="0.283" stop-color="#047bc7"/><stop offset="0.422" stop-color="#ac5cb1"/><stop offset="0.448" stop-color="#aa458c"/><stop offset="0.502" stop-color="#9e2759"/><stop offset="0.587" stop-color="#900f30"/><stop offset="0.731" stop-color="#820013"/><stop offset="0.996" stop-color="#6e0005"/></linearGradient>
<linearGradient id="dim168" gradientUnits="userSpaceOnUse" x1="874.5" y1="0" x2="1320.5" y2="0"><stop offset="0.000" stop-color="#007797"/><stop offset="0.238" stop-color="#007ebf"/><stop offset="0.278" stop-color="#0179c8"/><stop offset="0.422" stop-color="#ac58b1"/><stop offset="0.439" stop-color="#ad4a99"/><stop offset="0.489" stop-color="#a12a63"/><stop offset="0.565" stop-color="#931238"/><stop offset="0.700" stop-color="#840017"/><stop offset="0.996" stop-color="#6e0005"/></linearGradient>
<linearGradient id="dim169" gradientUnits="userSpaceOnUse" x1="874.5" y1="0" x2="1320.5" y2="0"><stop offset="0.000" stop-color="#007697"/><stop offset="0.233" stop-color="#007cc0"/><stop offset="0.278" stop-color="#0276c9"/><stop offset="0.426" stop-color="#b053ae"/><stop offset="0.466" stop-color="#a63478"/><stop offset="0.529" stop-color="#991a49"/><stop offset="0.632" stop-color="#8b0624"/><stop offset="0.812" stop-color="#7b000e"/><stop offset="0.996" stop-color="#6e0005"/></linearGradient>
<linearGradient id="dim170" gradientUnits="userSpaceOnUse" x1="874.5" y1="0" x2="1320.5" y2="0"><stop offset="0.000" stop-color="#007598"/><stop offset="0.229" stop-color="#007ac0"/><stop offset="0.278" stop-color="#0473ca"/><stop offset="0.426" stop-color="#b04faf"/><stop offset="0.466" stop-color="#a63279"/><stop offset="0.529" stop-color="#99184a"/><stop offset="0.632" stop-color="#8b0525"/><stop offset="0.821" stop-color="#7a000e"/><stop offset="0.996" stop-color="#6e0006"/></linearGradient>
<linearGradient id="dim171" gradientUnits="userSpaceOnUse" x1="874.5" y1="0" x2="1320.5" y2="0"><stop offset="0.000" stop-color="#007499"/><stop offset="0.229" stop-color="#0078c1"/><stop offset="0.274" stop-color="#0071cb"/><stop offset="0.426" stop-color="#b04caf"/><stop offset="0.466" stop-color="#a62f79"/><stop offset="0.529" stop-color="#99174a"/><stop offset="0.632" stop-color="#8a0425"/><stop offset="0.830" stop-color="#7a000e"/><stop offset="0.996" stop-color="#6e0006"/></linearGradient>
<linearGradient id="dim172" gradientUnits="userSpaceOnUse" x1="874.5" y1="0" x2="1320.5" y2="0"><stop offset="0.000" stop-color="#007399"/><stop offset="0.224" stop-color="#0076c1"/><stop offset="0.274" stop-color="#016ecc"/><stop offset="0.426" stop-color="#b049b0"/><stop offset="0.466" stop-color="#a62d7a"/><stop offset="0.529" stop-color="#99154b"/><stop offset="0.632" stop-color="#8a0326"/><stop offset="0.839" stop-color="#79000e"/><stop offset="0.996" stop-color="#6e0006"/></linearGradient>
<linearGradient id="dim173" gradientUnits="userSpaceOnUse" x1="874.5" y1="0" x2="1320.5" y2="0"><stop offset="0.000" stop-color="#00729a"/><stop offset="0.220" stop-color="#0074c1"/><stop offset="0.274" stop-color="#036bcd"/><stop offset="0.426" stop-color="#b046b0"/><stop offset="0.471" stop-color="#a52976"/><stop offset="0.538" stop-color="#971247"/><stop offset="0.650" stop-color="#880022"/><stop offset="0.910" stop-color="#74000a"/><stop offset="0.996" stop-color="#6e0007"/></linearGradient>
<linearGradient id="dim174" gradientUnits="userSpaceOnUse" x1="874.5" y1="0" x2="1320.5" y2="0"><stop offset="0.000" stop-color="#00719b"/><stop offset="0.215" stop-color="#0072c1"/><stop offset="0.274" stop-color="#0468ce"/><stop offset="0.426" stop-color="#b042b0"/><stop offset="0.471" stop-color="#a52676"/><stop offset="0.538" stop-color="#971047"/><stop offset="0.650" stop-color="#880023"/><stop offset="0.910" stop-color="#74000a"/><stop offset="0.996" stop-color="#6d0007"/></linearGradient>
<linearGradient id="dim175" gradientUnits="userSpaceOnUse" x1="874.5" y1="0" x2="1320.5" y2="0"><stop offset="0.000" stop-color="#00709b"/><stop offset="0.215" stop-color="#0070c2"/><stop offset="0.269" stop-color="#0167cf"/><stop offset="0.426" stop-color="#af3fb0"/><stop offset="0.471" stop-color="#a52477"/><stop offset="0.538" stop-color="#970f48"/><stop offset="0.646" stop-color="#890024"/><stop offset="0.897" stop-color="#74000c"/><stop offset="0.996" stop-color="#6d0007"/></linearGradient>
<linearGradient id="dim176" gradientUnits="userSpaceOnUse" x1="874.5" y1="0" x2="1320.5" y2="0"><stop offset="0.000" stop-color="#006f9c"/><stop offset="0.211" stop-color="#006ec2"/><stop offset="0.269" stop-color="#0264d0"/><stop offset="0.426" stop-color="#af3cb0"/><stop offset="0.471" stop-color="#a42277"/><stop offset="0.538" stop-color="#970e48"/><stop offset="0.646" stop-color="#890025"/><stop offset="0.892" stop-color="#74000c"/><stop offset="0.996" stop-color="#6d0008"/></linearGradient>
<linearGradient id="dim177" gradientUnits="userSpaceOnUse" x1="874.5" y1="0" x2="1320.5" y2="0"><stop offset="0.000" stop-color="#006e9d"/><stop offset="0.211" stop-color="#006cc3"/><stop offset="0.269" stop-color="#0361d0"/><stop offset="0.426" stop-color="#af39b0"/><stop offset="0.475" stop-color="#a31e73"/><stop offset="0.543" stop-color="#960b47"/><stop offset="0.650" stop-color="#880025"/><stop offset="0.906" stop-color="#73000c"/><stop offset="0.996" stop-color="#6d0008"/></linearGradient>
<linearGradient id="dim178" gradientUnits="userSpaceOnUse" x1="874.5" y1="0" x2="1320.5" y2="0"><stop offset="0.000" stop-color="#006d9d"/><stop offset="0.206" stop-color="#006bc3"/><stop offset="0.265" stop-color="#005fd2"/><stop offset="0.422" stop-color="#aa38b2"/><stop offset="0.435" stop-color="#ae31a4"/><stop offset="0.480" stop-color="#a21b70"/><stop offset="0.552" stop-color="#950843"/><stop offset="0.659" stop-color="#870024"/><stop offset="0.924" stop-color="#72000b"/><stop offset="0.996" stop-color="#6d0008"/></linearGradient>
<linearGradient id="dim179" gradientUnits="userSpaceOnUse" x1="874.5" y1="0" x2="1320.5" y2="0"><stop offset="0.000" stop-color="#006c9e"/><stop offset="0.202" stop-color="#0069c3"/><stop offset="0.265" stop-color="#015dd2"/><stop offset="0.422" stop-color="#aa35b2"/><stop offset="0.435" stop-color="#ae2ea4"/><stop offset="0.484" stop-color="#a1176d"/><stop offset="0.561" stop-color="#930640"/><stop offset="0.677" stop-color="#850022"/><stop offset="0.969" stop-color="#6f000a"/><stop offset="0.996" stop-color="#6d0009"/></linearGradient>
<linearGradient id="dim180" gradientUnits="userSpaceOnUse" x1="874.5" y1="0" x2="1320.5" y2="0"><stop offset="0.000" stop-color="#006b9f"/><stop offset="0.202" stop-color="#0067c4"/><stop offset="0.265" stop-color="#035ad3"/><stop offset="0.422" stop-color="#aa32b2"/><stop offset="0.439" stop-color="#ad299e"/><stop offset="0.489" stop-color="#a01469"/><stop offset="0.565" stop-color="#92043e"/><stop offset="0.691" stop-color="#830020"/><stop offset="0.996" stop-color="#6c0009"/></linearGradient>
<linearGradient id="dim181" gradientUnits="userSpaceOnUse" x1="874.5" y1="0" x2="1320.5" y2="0"><stop offset="0.000" stop-color="#006a9f"/><stop offset="0.197" stop-color="#0066c4"/><stop offset="0.265" stop-color="#0457d3"/><stop offset="0.422" stop-color="#aa2fb2"/><stop offset="0.439" stop-color="#ad269e"/><stop offset="0.489" stop-color="#a0126a"/><stop offset="0.565" stop-color="#92033f"/><stop offset="0.695" stop-color="#830020"/><stop offset="0.996" stop-color="#6c0009"/></linearGradient>
<linearGradient id="dim182" gradientUnits="userSpaceOnUse" x1="874.5" y1="0" x2="1320.5" y2="0"><stop offset="0.000" stop-color="#0069a0"/><stop offset="0.197" stop-color="#0064c5"/><stop offset="0.260" stop-color="#0155d5"/><stop offset="0.417" stop-color="#a52db4"/><stop offset="0.430" stop-color="#af29ac"/><stop offset="0.475" stop-color="#a31576"/><stop offset="0.543" stop-color="#960549"/><stop offset="0.650" stop-color="#870028"/><stop offset="0.897" stop-color="#73000e"/><stop offset="0.996" stop-color="#6c0009"/></linearGradient>
<linearGradient id="dim183" gradientUnits="userSpaceOnUse" x1="874.5" y1="0" x2="1320.5" y2="0"><stop offset="0.000" stop-color="#0068a1"/><stop offset="0.193" stop-color="#0062c5"/><stop offset="0.260" stop-color="#0253d5"/><stop offset="0.417" stop-color="#a52bb4"/><stop offset="0.430" stop-color="#af26ac"/><stop offset="0.475" stop-color="#a31376"/><stop offset="0.543" stop-color="#960449"/><stop offset="0.650" stop-color="#870029"/><stop offset="0.897" stop-color="#72000e"/><stop offset="0.996" stop-color="#6c000a"/></linearGradient>
<linearGradient id="dim184" gradientUnits="userSpaceOnUse" x1="874.5" y1="0" x2="1320.5" y2="0"><stop offset="0.000" stop-color="#0067a1"/><stop offset="0.193" stop-color="#0060c6"/><stop offset="0.260" stop-color="#0350d6"/><stop offset="0.417" stop-color="#a528b4"/><stop offset="0.430" stop-color="#af24ad"/><stop offset="0.475" stop-color="#a31177"/><stop offset="0.543" stop-color="#96034a"/><stop offset="0.655" stop-color="#860028"/><stop offset="0.906" stop-color="#72000e"/><stop offset="0.996" stop-color="#6c000a"/></linearGradient>
<linearGradient id="dim185" gradientUnits="userSpaceOnUse" x1="874.5" y1="0" x2="1320.5" y2="0"><stop offset="0.000" stop-color="#0066a2"/><stop offset="0.188" stop-color="#005fc6"/><stop offset="0.256" stop-color="#004fd7"/><stop offset="0.413" stop-color="#a127b6"/><stop offset="0.430" stop-color="#af21ad"/><stop offset="0.475" stop-color="#a30f77"/><stop offset="0.547" stop-color="#950148"/><stop offset="0.668" stop-color="#850026"/><stop offset="0.937" stop-color="#6f000d"/><stop offset="0.996" stop-color="#6b000a"/></linearGradient>
<linearGradient id="dim186" gradientUnits="userSpaceOnUse" x1="874.5" y1="0" x2="1320.5" y2="0"><stop offset="0.000" stop-color="#0065a2"/><stop offset="0.188" stop-color="#005dc7"/><stop offset="0.256" stop-color="#014cd8"/><stop offset="0.413" stop-color="#a124b6"/><stop offset="0.430" stop-color="#af1fad"/><stop offset="0.475" stop-color="#a30e78"/><stop offset="0.543" stop-color="#96004b"/><stop offset="0.664" stop-color="#850028"/><stop offset="0.924" stop-color="#70000e"/><stop offset="0.996" stop-color="#6b000b"/></linearGradient>
<linearGradient id="dim187" gradientUnits="userSpaceOnUse" x1="874.5" y1="0" x2="1320.5" y2="0"><stop offset="0.000" stop-color="#0064a3"/><stop offset="0.188" stop-color="#005bc8"/><stop offset="0.256" stop-color="#0349d8"/><stop offset="0.413" stop-color="#a122b6"/><stop offset="0.430" stop-color="#af1cae"/><stop offset="0.475" stop-color="#a30c78"/><stop offset="0.543" stop-color="#95004b"/><stop offset="0.664" stop-color="#850028"/><stop offset="0.924" stop-color="#70000e"/><stop offset="0.996" stop-color="#6b000b"/></linearGradient>
<linearGradient id="dim188" gradientUnits="userSpaceOnUse" x1="874.5" y1="0" x2="1320.5" y2="0"><stop offset="0.000" stop-color="#0063a4"/><stop offset="0.184" stop-color="#005ac8"/><stop offset="0.256" stop-color="#0447d9"/><stop offset="0.413" stop-color="#a11fb6"/><stop offset="0.430" stop-color="#b01aae"/><stop offset="0.475" stop-color="#a30a78"/><stop offset="0.543" stop-color="#95004c"/><stop offset="0.664" stop-color="#850029"/><stop offset="0.924" stop-color="#6f000f"/><stop offset="0.996" stop-color="#6b000b"/></linearGradient>
<linearGradient id="dim189" gradientUnits="userSpaceOnUse" x1="874.5" y1="0" x2="1320.5" y2="0"><stop offset="0.000" stop-color="#0062a4"/><stop offset="0.184" stop-color="#0058c8"/><stop offset="0.251" stop-color="#0145da"/><stop offset="0.408" stop-color="#9d1eb8"/><stop offset="0.430" stop-color="#b017ae"/><stop offset="0.475" stop-color="#a30979"/><stop offset="0.543" stop-color="#95004d"/><stop offset="0.664" stop-color="#840029"/><stop offset="0.919" stop-color="#6f000f"/><stop offset="0.996" stop-color="#6a000b"/></linearGradient>
<linearGradient id="dim190" gradientUnits="userSpaceOnUse" x1="874.5" y1="0" x2="1320.5" y2="0"><stop offset="0.000" stop-color="#0061a5"/><stop offset="0.179" stop-color="#0056c8"/><stop offset="0.251" stop-color="#0243da"/><stop offset="0.408" stop-color="#9d1bb8"/><stop offset="0.430" stop-color="#b015af"/><stop offset="0.475" stop-color="#a30779"/><stop offset="0.543" stop-color="#95004d"/><stop offset="0.664" stop-color="#84002a"/><stop offset="0.919" stop-color="#6f000f"/><stop offset="0.996" stop-color="#6a000c"/></linearGradient>
<linearGradient id="dim191" gradientUnits="userSpaceOnUse" x1="874.5" y1="0" x2="1320.5" y2="0"><stop offset="0.000" stop-color="#0060a5"/><stop offset="0.179" stop-color="#0054c9"/><stop offset="0.251" stop-color="#0341db"/><stop offset="0.408" stop-color="#9d19b8"/><stop offset="0.430" stop-color="#b013af"/><stop offset="0.475" stop-color="#a3057a"/><stop offset="0.543" stop-color="#95004e"/><stop offset="0.664" stop-color="#84002a"/><stop offset="0.919" stop-color="#6f0010"/><stop offset="0.996" stop-color="#6a000c"/></linearGradient>
<linearGradient id="dim192" gradientUnits="userSpaceOnUse" x1="874.5" y1="0" x2="1320.5" y2="0"><stop offset="0.000" stop-color="#005fa6"/><stop offset="0.179" stop-color="#0053ca"/><stop offset="0.251" stop-color="#043edb"/><stop offset="0.408" stop-color="#9d16b8"/><stop offset="0.430" stop-color="#b010af"/><stop offset="0.475" stop-color="#a3047a"/><stop offset="0.543" stop-color="#94004e"/><stop offset="0.664" stop-color="#84002b"/><stop offset="0.919" stop-color="#6f0010"/><stop offset="0.996" stop-color="#6a000c"/></linearGradient>
<linearGradient id="dim193" gradientUnits="userSpaceOnUse" x1="874.5" y1="0" x2="1320.5" y2="0"><stop offset="0.000" stop-color="#005ea7"/><stop offset="0.175" stop-color="#0051ca"/><stop offset="0.247" stop-color="#013ddc"/><stop offset="0.404" stop-color="#9915ba"/><stop offset="0.430" stop-color="#b00eb0"/><stop offset="0.475" stop-color="#a3027b"/><stop offset="0.543" stop-color="#94004f"/><stop offset="0.664" stop-color="#83002b"/><stop offset="0.919" stop-color="#6e0010"/><stop offset="0.996" stop-color="#69000d"/></linearGradient>
<linearGradient id="dim194" gradientUnits="userSpaceOnUse" x1="874.5" y1="0" x2="1320.5" y2="0"><stop offset="0.000" stop-color="#005da7"/><stop offset="0.175" stop-color="#0050cb"/><stop offset="0.247" stop-color="#033add"/><stop offset="0.404" stop-color="#9913ba"/><stop offset="0.430" stop-color="#b00cb0"/><stop offset="0.475" stop-color="#a3007b"/><stop offset="0.543" stop-color="#940050"/><stop offset="0.664" stop-color="#83002c"/><stop offset="0.919" stop-color="#6e0011"/><stop offset="0.996" stop-color="#69000d"/></linearGradient>
<linearGradient id="dim195" gradientUnits="userSpaceOnUse" x1="874.5" y1="0" x2="1320.5" y2="0"><stop offset="0.000" stop-color="#005ca8"/><stop offset="0.175" stop-color="#004ecc"/><stop offset="0.247" stop-color="#0438dd"/><stop offset="0.404" stop-color="#9911ba"/><stop offset="0.430" stop-color="#b00ab0"/><stop offset="0.480" stop-color="#a20077"/><stop offset="0.552" stop-color="#92004c"/><stop offset="0.682" stop-color="#810029"/><stop offset="0.960" stop-color="#6b000f"/><stop offset="0.996" stop-color="#69000d"/></linearGradient>
<linearGradient id="dim196" gradientUnits="userSpaceOnUse" x1="874.5" y1="0" x2="1320.5" y2="0"><stop offset="0.000" stop-color="#005ba9"/><stop offset="0.170" stop-color="#004dcb"/><stop offset="0.242" stop-color="#0137de"/><stop offset="0.404" stop-color="#990eba"/><stop offset="0.430" stop-color="#b007b0"/><stop offset="0.480" stop-color="#a10078"/><stop offset="0.552" stop-color="#92004d"/><stop offset="0.682" stop-color="#810029"/><stop offset="0.960" stop-color="#6b000f"/><stop offset="0.996" stop-color="#69000d"/></linearGradient>
<linearGradient id="dim197" gradientUnits="userSpaceOnUse" x1="874.5" y1="0" x2="1320.5" y2="0"><stop offset="0.000" stop-color="#005aa9"/><stop offset="0.170" stop-color="#004bcc"/><stop offset="0.242" stop-color="#0234df"/><stop offset="0.404" stop-color="#990cba"/><stop offset="0.435" stop-color="#af04aa"/><stop offset="0.484" stop-color="#a00074"/><stop offset="0.561" stop-color="#900049"/><stop offset="0.700" stop-color="#7f0027"/><stop offset="0.996" stop-color="#68000e"/></linearGradient>
<linearGradient id="dim198" gradientUnits="userSpaceOnUse" x1="874.5" y1="0" x2="1320.5" y2="0"><stop offset="0.000" stop-color="#0059aa"/><stop offset="0.170" stop-color="#0049cd"/><stop offset="0.242" stop-color="#0332df"/><stop offset="0.404" stop-color="#990aba"/><stop offset="0.435" stop-color="#af02ab"/><stop offset="0.480" stop-color="#a10079"/><stop offset="0.552" stop-color="#91004e"/><stop offset="0.682" stop-color="#80002a"/><stop offset="0.955" stop-color="#6b0010"/><stop offset="0.996" stop-color="#68000e"/></linearGradient>
<linearGradient id="dim199" gradientUnits="userSpaceOnUse" x1="874.5" y1="0" x2="1320.5" y2="0"><stop offset="0.000" stop-color="#0058aa"/><stop offset="0.166" stop-color="#0048cd"/><stop offset="0.242" stop-color="#0430e0"/><stop offset="0.404" stop-color="#9908ba"/><stop offset="0.435" stop-color="#af00ab"/><stop offset="0.480" stop-color="#a00079"/><stop offset="0.552" stop-color="#91004e"/><stop offset="0.682" stop-color="#80002b"/><stop offset="0.955" stop-color="#6a0010"/><stop offset="0.996" stop-color="#68000e"/></linearGradient>
<linearGradient id="dim200" gradientUnits="userSpaceOnUse" x1="874.5" y1="0" x2="1320.5" y2="0"><stop offset="0.000" stop-color="#0057ab"/><stop offset="0.166" stop-color="#0046cd"/><stop offset="0.238" stop-color="#012ee1"/><stop offset="0.399" stop-color="#9607bc"/><stop offset="0.435" stop-color="#ae00ab"/><stop offset="0.480" stop-color="#a00079"/><stop offset="0.556" stop-color="#90004d"/><stop offset="0.691" stop-color="#7f002a"/><stop offset="0.978" stop-color="#69000f"/><stop offset="0.996" stop-color="#67000e"/></linearGradient>
<linearGradient id="dim201" gradientUnits="userSpaceOnUse" x1="874.5" y1="0" x2="1320.5" y2="0"><stop offset="0.000" stop-color="#0055ac"/><stop offset="0.166" stop-color="#0044ce"/><stop offset="0.238" stop-color="#022ce1"/><stop offset="0.399" stop-color="#9605bc"/><stop offset="0.435" stop-color="#ae00ab"/><stop offset="0.480" stop-color="#a00079"/><stop offset="0.556" stop-color="#90004d"/><stop offset="0.691" stop-color="#7f002a"/><stop offset="0.978" stop-color="#68000f"/><stop offset="0.996" stop-color="#67000f"/></linearGradient>
<linearGradient id="dim202" gradientUnits="userSpaceOnUse" x1="874.5" y1="0" x2="1320.5" y2="0"><stop offset="0.000" stop-color="#0054ac"/><stop offset="0.161" stop-color="#0043ce"/><stop offset="0.238" stop-color="#042ae1"/><stop offset="0.399" stop-color="#9603bc"/><stop offset="0.435" stop-color="#ad00ab"/><stop offset="0.484" stop-color="#9e0076"/><stop offset="0.561" stop-color="#8f004c"/><stop offset="0.700" stop-color="#7e0029"/><stop offset="0.996" stop-color="#67000f"/></linearGradient>
<linearGradient id="dim203" gradientUnits="userSpaceOnUse" x1="874.5" y1="0" x2="1320.5" y2="0"><stop offset="0.000" stop-color="#0053ad"/><stop offset="0.161" stop-color="#0041cf"/><stop offset="0.233" stop-color="#0129e2"/><stop offset="0.399" stop-color="#9601bc"/><stop offset="0.435" stop-color="#ad00aa"/><stop offset="0.484" stop-color="#9e0076"/><stop offset="0.565" stop-color="#8e004a"/><stop offset="0.709" stop-color="#7c0028"/><stop offset="0.996" stop-color="#67000f"/></linearGradient>
<linearGradient id="dim204" gradientUnits="userSpaceOnUse" x1="874.5" y1="0" x2="1320.5" y2="0"><stop offset="0.000" stop-color="#0052ad"/><stop offset="0.161" stop-color="#0040d0"/><stop offset="0.233" stop-color="#0226e3"/><stop offset="0.395" stop-color="#9300be"/><stop offset="0.435" stop-color="#ad00aa"/><stop offset="0.484" stop-color="#9e0077"/><stop offset="0.565" stop-color="#8e004b"/><stop offset="0.709" stop-color="#7c0028"/><stop offset="0.996" stop-color="#66000f"/></linearGradient>
<linearGradient id="dim205" gradientUnits="userSpaceOnUse" x1="874.5" y1="0" x2="1320.5" y2="0"><stop offset="0.000" stop-color="#0051ae"/><stop offset="0.157" stop-color="#003fcf"/><stop offset="0.233" stop-color="#0324e3"/><stop offset="0.390" stop-color="#8f00bf"/><stop offset="0.435" stop-color="#ac00aa"/><stop offset="0.484" stop-color="#9d0077"/><stop offset="0.565" stop-color="#8d004b"/><stop offset="0.709" stop-color="#7c0028"/><stop offset="0.996" stop-color="#66000f"/></linearGradient>
<linearGradient id="dim206" gradientUnits="userSpaceOnUse" x1="874.5" y1="0" x2="1320.5" y2="0"><stop offset="0.000" stop-color="#0050af"/><stop offset="0.157" stop-color="#003dd0"/><stop offset="0.233" stop-color="#0422e3"/><stop offset="0.386" stop-color="#8b00c0"/><stop offset="0.435" stop-color="#ac00aa"/><stop offset="0.484" stop-color="#9d0077"/><stop offset="0.565" stop-color="#8d004c"/><stop offset="0.709" stop-color="#7c0029"/><stop offset="0.996" stop-color="#660010"/></linearGradient>
<linearGradient id="dim207" gradientUnits="userSpaceOnUse" x1="874.5" y1="0" x2="1320.5" y2="0"><stop offset="0.000" stop-color="#004faf"/><stop offset="0.157" stop-color="#003bd1"/><stop offset="0.229" stop-color="#0121e4"/><stop offset="0.381" stop-color="#8800c1"/><stop offset="0.435" stop-color="#ab00aa"/><stop offset="0.484" stop-color="#9c0077"/><stop offset="0.565" stop-color="#8d004c"/><stop offset="0.709" stop-color="#7b0029"/><stop offset="0.996" stop-color="#650010"/></linearGradient>
<linearGradient id="dim208" gradientUnits="userSpaceOnUse" x1="874.5" y1="0" x2="1320.5" y2="0"><stop offset="0.000" stop-color="#004eb0"/><stop offset="0.157" stop-color="#0039d2"/><stop offset="0.229" stop-color="#021fe5"/><stop offset="0.377" stop-color="#8400c2"/><stop offset="0.435" stop-color="#ab00a9"/><stop offset="0.484" stop-color="#9c0078"/><stop offset="0.565" stop-color="#8c004c"/><stop offset="0.709" stop-color="#7b0029"/><stop offset="0.996" stop-color="#650010"/></linearGradient>
<linearGradient id="dim209" gradientUnits="userSpaceOnUse" x1="874.5" y1="0" x2="1320.5" y2="0"><stop offset="0.000" stop-color="#004db0"/><stop offset="0.152" stop-color="#0039d1"/><stop offset="0.229" stop-color="#041de5"/><stop offset="0.368" stop-color="#7d00c5"/><stop offset="0.435" stop-color="#aa00a9"/><stop offset="0.489" stop-color="#9b0074"/><stop offset="0.574" stop-color="#8b0049"/><stop offset="0.726" stop-color="#790027"/><stop offset="0.996" stop-color="#650010"/></linearGradient>
<linearGradient id="dim210" gradientUnits="userSpaceOnUse" x1="874.5" y1="0" x2="1320.5" y2="0"><stop offset="0.000" stop-color="#004cb1"/><stop offset="0.152" stop-color="#0037d2"/><stop offset="0.224" stop-color="#011ce6"/><stop offset="0.359" stop-color="#7600c8"/><stop offset="0.435" stop-color="#aa00a9"/><stop offset="0.489" stop-color="#9a0075"/><stop offset="0.574" stop-color="#8b004a"/><stop offset="0.731" stop-color="#780027"/><stop offset="0.996" stop-color="#640010"/></linearGradient>
<linearGradient id="dim211" gradientUnits="userSpaceOnUse" x1="874.5" y1="0" x2="1320.5" y2="0"><stop offset="0.000" stop-color="#004bb1"/><stop offset="0.152" stop-color="#0035d3"/><stop offset="0.224" stop-color="#021ae6"/><stop offset="0.354" stop-color="#7300c9"/><stop offset="0.435" stop-color="#a900a9"/><stop offset="0.489" stop-color="#9a0075"/><stop offset="0.574" stop-color="#8a004a"/><stop offset="0.731" stop-color="#780027"/><stop offset="0.996" stop-color="#640011"/></linearGradient>
<linearGradient id="dim212" gradientUnits="userSpaceOnUse" x1="874.5" y1="0" x2="1320.5" y2="0"><stop offset="0.000" stop-color="#004ab2"/><stop offset="0.152" stop-color="#0033d4"/><stop offset="0.224" stop-color="#0317e7"/><stop offset="0.345" stop-color="#6c00cb"/><stop offset="0.435" stop-color="#a900a8"/><stop offset="0.489" stop-color="#9a0075"/><stop offset="0.574" stop-color="#8a004a"/><stop offset="0.731" stop-color="#780027"/><stop offset="0.996" stop-color="#640011"/></linearGradient>
<linearGradient id="dim213" gradientUnits="userSpaceOnUse" x1="874.5" y1="0" x2="1320.5" y2="0"><stop offset="0.000" stop-color="#0049b3"/><stop offset="0.152" stop-color="#0031d4"/><stop offset="0.224" stop-color="#0415e7"/><stop offset="0.336" stop-color="#6500ce"/><stop offset="0.435" stop-color="#a800a8"/><stop offset="0.489" stop-color="#990075"/><stop offset="0.574" stop-color="#8a004b"/><stop offset="0.731" stop-color="#770028"/><stop offset="0.996" stop-color="#640011"/></linearGradient>
<linearGradient id="dim214" gradientUnits="userSpaceOnUse" x1="874.5" y1="0" x2="1320.5" y2="0"><stop offset="0.000" stop-color="#0048b3"/><stop offset="0.148" stop-color="#0031d4"/><stop offset="0.220" stop-color="#0114e8"/><stop offset="0.327" stop-color="#5e00d0"/><stop offset="0.430" stop-color="#a600aa"/><stop offset="0.498" stop-color="#97006f"/><stop offset="0.592" stop-color="#870045"/><stop offset="0.767" stop-color="#740023"/><stop offset="0.996" stop-color="#630011"/></linearGradient>
<linearGradient id="dim215" gradientUnits="userSpaceOnUse" x1="874.5" y1="0" x2="1320.5" y2="0"><stop offset="0.000" stop-color="#0046b4"/><stop offset="0.148" stop-color="#002fd5"/><stop offset="0.220" stop-color="#0212e8"/><stop offset="0.323" stop-color="#5b00d1"/><stop offset="0.430" stop-color="#a500a9"/><stop offset="0.498" stop-color="#97006f"/><stop offset="0.592" stop-color="#860045"/><stop offset="0.767" stop-color="#740023"/><stop offset="0.996" stop-color="#630011"/></linearGradient>
<linearGradient id="dim216" gradientUnits="userSpaceOnUse" x1="874.5" y1="0" x2="1320.5" y2="0"><stop offset="0.000" stop-color="#0045b4"/><stop offset="0.148" stop-color="#002dd5"/><stop offset="0.220" stop-color="#0310e8"/><stop offset="0.314" stop-color="#5400d3"/><stop offset="0.422" stop-color="#9f00ac"/><stop offset="0.439" stop-color="#a500a2"/><stop offset="0.498" stop-color="#960070"/><stop offset="0.592" stop-color="#860046"/><stop offset="0.767" stop-color="#730024"/><stop offset="0.996" stop-color="#630012"/></linearGradient>
<linearGradient id="dim217" gradientUnits="userSpaceOnUse" x1="874.5" y1="0" x2="1320.5" y2="0"><stop offset="0.000" stop-color="#0044b5"/><stop offset="0.148" stop-color="#002bd6"/><stop offset="0.220" stop-color="#040ee9"/><stop offset="0.305" stop-color="#4d00d6"/><stop offset="0.417" stop-color="#9c00ad"/><stop offset="0.439" stop-color="#a500a2"/><stop offset="0.498" stop-color="#960070"/><stop offset="0.592" stop-color="#860046"/><stop offset="0.767" stop-color="#730024"/><stop offset="0.996" stop-color="#620012"/></linearGradient>
<linearGradient id="dim218" gradientUnits="userSpaceOnUse" x1="874.5" y1="0" x2="1320.5" y2="0"><stop offset="0.000" stop-color="#0043b5"/><stop offset="0.143" stop-color="#002bd6"/><stop offset="0.215" stop-color="#020eea"/><stop offset="0.300" stop-color="#4a00d6"/><stop offset="0.413" stop-color="#9900ae"/><stop offset="0.439" stop-color="#a500a1"/><stop offset="0.498" stop-color="#950070"/><stop offset="0.592" stop-color="#860046"/><stop offset="0.767" stop-color="#730024"/><stop offset="0.996" stop-color="#620012"/></linearGradient>
<linearGradient id="dim219" gradientUnits="userSpaceOnUse" x1="874.5" y1="0" x2="1320.5" y2="0"><stop offset="0.000" stop-color="#0042b6"/><stop offset="0.143" stop-color="#0029d6"/><stop offset="0.215" stop-color="#030cea"/><stop offset="0.296" stop-color="#4700d7"/><stop offset="0.408" stop-color="#9600af"/><stop offset="0.439" stop-color="#a400a1"/><stop offset="0.498" stop-color="#950070"/><stop offset="0.596" stop-color="#850045"/><stop offset="0.776" stop-color="#720023"/><stop offset="0.996" stop-color="#620012"/></linearGradient>
<linearGradient id="dim220" gradientUnits="userSpaceOnUse" x1="874.5" y1="0" x2="1320.5" y2="0"><stop offset="0.000" stop-color="#0041b6"/><stop offset="0.143" stop-color="#0027d7"/><stop offset="0.215" stop-color="#040aea"/><stop offset="0.291" stop-color="#4400d7"/><stop offset="0.408" stop-color="#9600af"/><stop offset="0.439" stop-color="#a400a1"/><stop offset="0.502" stop-color="#94006d"/><stop offset="0.601" stop-color="#840044"/><stop offset="0.785" stop-color="#710023"/><stop offset="0.996" stop-color="#610012"/></linearGradient>
<linearGradient id="dim221" gradientUnits="userSpaceOnUse" x1="874.5" y1="0" x2="1320.5" y2="0"><stop offset="0.000" stop-color="#0040b7"/><stop offset="0.143" stop-color="#0026d8"/><stop offset="0.211" stop-color="#0109eb"/><stop offset="0.283" stop-color="#3e00d9"/><stop offset="0.399" stop-color="#9000b1"/><stop offset="0.439" stop-color="#a300a1"/><stop offset="0.502" stop-color="#93006d"/><stop offset="0.605" stop-color="#830043"/><stop offset="0.794" stop-color="#700022"/><stop offset="0.996" stop-color="#610012"/></linearGradient>
<linearGradient id="dim222" gradientUnits="userSpaceOnUse" x1="874.5" y1="0" x2="1320.5" y2="0"><stop offset="0.000" stop-color="#003fb7"/><stop offset="0.143" stop-color="#0024d9"/><stop offset="0.211" stop-color="#0207eb"/><stop offset="0.283" stop-color="#3f00d8"/><stop offset="0.399" stop-color="#9000b1"/><stop offset="0.439" stop-color="#a300a0"/><stop offset="0.502" stop-color="#93006e"/><stop offset="0.605" stop-color="#820043"/><stop offset="0.794" stop-color="#6f0022"/><stop offset="0.996" stop-color="#610013"/></linearGradient>
<linearGradient id="dim223" gradientUnits="userSpaceOnUse" x1="874.5" y1="0" x2="1320.5" y2="0"><stop offset="0.000" stop-color="#003db8"/><stop offset="0.139" stop-color="#0024d8"/><stop offset="0.211" stop-color="#0305eb"/><stop offset="0.332" stop-color="#6500c7"/><stop offset="0.435" stop-color="#a200a4"/><stop offset="0.502" stop-color="#93006e"/><stop offset="0.605" stop-color="#820043"/><stop offset="0.794" stop-color="#6f0022"/><stop offset="0.996" stop-color="#600013"/></linearGradient>
<linearGradient id="dim224" gradientUnits="userSpaceOnUse" x1="874.5" y1="0" x2="1320.5" y2="0"><stop offset="0.000" stop-color="#003cb8"/><stop offset="0.139" stop-color="#0022d9"/><stop offset="0.211" stop-color="#0403ec"/><stop offset="0.350" stop-color="#7200c0"/><stop offset="0.439" stop-color="#a200a0"/><stop offset="0.502" stop-color="#92006e"/><stop offset="0.605" stop-color="#820044"/><stop offset="0.794" stop-color="#6f0022"/><stop offset="0.996" stop-color="#600013"/></linearGradient>
<linearGradient id="dim225" gradientUnits="userSpaceOnUse" x1="874.5" y1="0" x2="1320.5" y2="0"><stop offset="0.000" stop-color="#003bb9"/><stop offset="0.139" stop-color="#0020da"/><stop offset="0.206" stop-color="#0202ec"/><stop offset="0.341" stop-color="#6c00c2"/><stop offset="0.439" stop-color="#a1009f"/><stop offset="0.502" stop-color="#92006e"/><stop offset="0.605" stop-color="#810044"/><stop offset="0.794" stop-color="#6e0023"/><stop offset="0.996" stop-color="#600013"/></linearGradient>
<linearGradient id="dim226" gradientUnits="userSpaceOnUse" x1="874.5" y1="0" x2="1320.5" y2="0"><stop offset="0.000" stop-color="#003ab9"/><stop offset="0.139" stop-color="#001eda"/><stop offset="0.206" stop-color="#0300ed"/><stop offset="0.336" stop-color="#6900c3"/><stop offset="0.439" stop-color="#a1009f"/><stop offset="0.502" stop-color="#92006e"/><stop offset="0.605" stop-color="#810044"/><stop offset="0.798" stop-color="#6e0022"/><stop offset="0.996" stop-color="#5f0013"/></linearGradient>
<linearGradient id="dim227" gradientUnits="userSpaceOnUse" x1="874.5" y1="0" x2="1320.5" y2="0"><stop offset="0.000" stop-color="#0039b9"/><stop offset="0.139" stop-color="#001ddb"/><stop offset="0.206" stop-color="#0400ec"/><stop offset="0.336" stop-color="#6900c2"/><stop offset="0.439" stop-color="#a0009f"/><stop offset="0.502" stop-color="#91006e"/><stop offset="0.605" stop-color="#810044"/><stop offset="0.798" stop-color="#6d0023"/><stop offset="0.996" stop-color="#5f0013"/></linearGradient>
<linearGradient id="dim228" gradientUnits="userSpaceOnUse" x1="874.5" y1="0" x2="1320.5" y2="0"><stop offset="0.000" stop-color="#0038ba"/><stop offset="0.135" stop-color="#001cda"/><stop offset="0.202" stop-color="#0200ec"/><stop offset="0.332" stop-color="#6600c3"/><stop offset="0.439" stop-color="#a0009f"/><stop offset="0.507" stop-color="#90006b"/><stop offset="0.614" stop-color="#7f0042"/><stop offset="0.816" stop-color="#6c0021"/><stop offset="0.996" stop-color="#5f0014"/></linearGradient>
<linearGradient id="dim229" gradientUnits="userSpaceOnUse" x1="874.5" y1="0" x2="1320.5" y2="0"><stop offset="0.000" stop-color="#0037ba"/><stop offset="0.135" stop-color="#001ada"/><stop offset="0.202" stop-color="#0400eb"/><stop offset="0.336" stop-color="#6900c0"/><stop offset="0.439" stop-color="#9f009e"/><stop offset="0.507" stop-color="#90006b"/><stop offset="0.614" stop-color="#7f0042"/><stop offset="0.816" stop-color="#6b0021"/><stop offset="0.996" stop-color="#5f0014"/></linearGradient>
<linearGradient id="dim230" gradientUnits="userSpaceOnUse" x1="874.5" y1="0" x2="1320.5" y2="0"><stop offset="0.000" stop-color="#0035ba"/><stop offset="0.135" stop-color="#0019db"/><stop offset="0.197" stop-color="#0200ea"/><stop offset="0.332" stop-color="#6700c1"/><stop offset="0.439" stop-color="#9f009e"/><stop offset="0.507" stop-color="#8f006c"/><stop offset="0.614" stop-color="#7f0042"/><stop offset="0.816" stop-color="#6b0021"/><stop offset="0.996" stop-color="#5e0014"/></linearGradient>
<linearGradient id="dim231" gradientUnits="userSpaceOnUse" x1="874.5" y1="0" x2="1320.5" y2="0"><stop offset="0.000" stop-color="#0034bb"/><stop offset="0.135" stop-color="#0017db"/><stop offset="0.197" stop-color="#0400e9"/><stop offset="0.332" stop-color="#6700c0"/><stop offset="0.439" stop-color="#9e009e"/><stop offset="0.507" stop-color="#8f006c"/><stop offset="0.619" stop-color="#7e0041"/><stop offset="0.825" stop-color="#6a0020"/><stop offset="0.996" stop-color="#5e0014"/></linearGradient>
<linearGradient id="dim232" gradientUnits="userSpaceOnUse" x1="874.5" y1="0" x2="1320.5" y2="0"><stop offset="0.000" stop-color="#0033bb"/><stop offset="0.135" stop-color="#0015db"/><stop offset="0.193" stop-color="#0300e8"/><stop offset="0.336" stop-color="#6a00be"/><stop offset="0.439" stop-color="#9e009d"/><stop offset="0.507" stop-color="#8e006c"/><stop offset="0.619" stop-color="#7d0042"/><stop offset="0.825" stop-color="#6a0021"/><stop offset="0.996" stop-color="#5e0014"/></linearGradient>
<linearGradient id="dim233" gradientUnits="userSpaceOnUse" x1="874.5" y1="0" x2="1320.5" y2="0"><stop offset="0.000" stop-color="#0032bb"/><stop offset="0.135" stop-color="#0013db"/><stop offset="0.193" stop-color="#0400e7"/><stop offset="0.336" stop-color="#6a00bd"/><stop offset="0.439" stop-color="#9d009d"/><stop offset="0.507" stop-color="#8e006c"/><stop offset="0.619" stop-color="#7d0042"/><stop offset="0.825" stop-color="#690021"/><stop offset="0.996" stop-color="#5d0014"/></linearGradient>
<linearGradient id="dim234" gradientUnits="userSpaceOnUse" x1="874.5" y1="0" x2="1320.5" y2="0"><stop offset="0.000" stop-color="#0031bb"/><stop offset="0.135" stop-color="#0012db"/><stop offset="0.193" stop-color="#0500e6"/><stop offset="0.332" stop-color="#6700be"/><stop offset="0.439" stop-color="#9d009d"/><stop offset="0.507" stop-color="#8e006c"/><stop offset="0.619" stop-color="#7d0042"/><stop offset="0.825" stop-color="#690021"/><stop offset="0.996" stop-color="#5d0014"/></linearGradient>
<linearGradient id="dim235" gradientUnits="userSpaceOnUse" x1="874.5" y1="0" x2="1320.5" y2="0"><stop offset="0.000" stop-color="#002fbc"/><stop offset="0.135" stop-color="#0010db"/><stop offset="0.188" stop-color="#0400e5"/><stop offset="0.336" stop-color="#6a00bc"/><stop offset="0.439" stop-color="#9c009c"/><stop offset="0.511" stop-color="#8c0069"/><stop offset="0.628" stop-color="#7b0040"/><stop offset="0.843" stop-color="#67001f"/><stop offset="0.996" stop-color="#5d0015"/></linearGradient>
<linearGradient id="dim236" gradientUnits="userSpaceOnUse" x1="874.5" y1="0" x2="1320.5" y2="0"><stop offset="0.000" stop-color="#002ebc"/><stop offset="0.143" stop-color="#000cdd"/><stop offset="0.188" stop-color="#0500e4"/><stop offset="0.336" stop-color="#6a00bb"/><stop offset="0.439" stop-color="#9c009c"/><stop offset="0.511" stop-color="#8c0069"/><stop offset="0.628" stop-color="#7b0040"/><stop offset="0.843" stop-color="#670020"/><stop offset="0.996" stop-color="#5c0015"/></linearGradient>
<linearGradient id="dim237" gradientUnits="userSpaceOnUse" x1="874.5" y1="0" x2="1320.5" y2="0"><stop offset="0.000" stop-color="#002dbc"/><stop offset="0.148" stop-color="#000ade"/><stop offset="0.188" stop-color="#0600e3"/><stop offset="0.332" stop-color="#6800bb"/><stop offset="0.439" stop-color="#9b009b"/><stop offset="0.511" stop-color="#8c0069"/><stop offset="0.628" stop-color="#7b0040"/><stop offset="0.848" stop-color="#66001f"/><stop offset="0.996" stop-color="#5c0015"/></linearGradient>
<linearGradient id="dim238" gradientUnits="userSpaceOnUse" x1="874.5" y1="0" x2="1320.5" y2="0"><stop offset="0.000" stop-color="#002cbc"/><stop offset="0.157" stop-color="#0005e0"/><stop offset="0.188" stop-color="#0800e2"/><stop offset="0.332" stop-color="#6800bb"/><stop offset="0.439" stop-color="#9a009b"/><stop offset="0.511" stop-color="#8b0069"/><stop offset="0.628" stop-color="#7a0040"/><stop offset="0.848" stop-color="#66001f"/><stop offset="0.996" stop-color="#5c0015"/></linearGradient>
<linearGradient id="dim239" gradientUnits="userSpaceOnUse" x1="874.5" y1="0" x2="1320.5" y2="0"><stop offset="0.000" stop-color="#002bbc"/><stop offset="0.161" stop-color="#0003e0"/><stop offset="0.197" stop-color="#1000df"/><stop offset="0.341" stop-color="#6d00b7"/><stop offset="0.444" stop-color="#990097"/><stop offset="0.520" stop-color="#890065"/><stop offset="0.646" stop-color="#78003c"/><stop offset="0.883" stop-color="#63001d"/><stop offset="0.996" stop-color="#5b0015"/></linearGradient>
<linearGradient id="dim240" gradientUnits="userSpaceOnUse" x1="874.5" y1="0" x2="1320.5" y2="0"><stop offset="0.000" stop-color="#002abc"/><stop offset="0.175" stop-color="#0400e1"/><stop offset="0.350" stop-color="#7100b4"/><stop offset="0.444" stop-color="#990096"/><stop offset="0.520" stop-color="#890065"/><stop offset="0.646" stop-color="#78003c"/><stop offset="0.883" stop-color="#63001d"/><stop offset="0.996" stop-color="#5b0015"/></linearGradient>
<linearGradient id="dim241" gradientUnits="userSpaceOnUse" x1="874.5" y1="0" x2="1320.5" y2="0"><stop offset="0.000" stop-color="#0028bc"/><stop offset="0.170" stop-color="#0300e0"/><stop offset="0.309" stop-color="#5c00bf"/><stop offset="0.439" stop-color="#990099"/><stop offset="0.516" stop-color="#890067"/><stop offset="0.637" stop-color="#78003e"/><stop offset="0.865" stop-color="#64001e"/><stop offset="0.996" stop-color="#5b0015"/></linearGradient>
<linearGradient id="dim242" gradientUnits="userSpaceOnUse" x1="874.5" y1="0" x2="1320.5" y2="0"><stop offset="0.000" stop-color="#0027bd"/><stop offset="0.166" stop-color="#0300df"/><stop offset="0.287" stop-color="#4f00c4"/><stop offset="0.430" stop-color="#95009b"/><stop offset="0.466" stop-color="#920084"/><stop offset="0.556" stop-color="#820056"/><stop offset="0.713" stop-color="#700030"/><stop offset="0.996" stop-color="#5a0015"/></linearGradient>
<linearGradient id="dim243" gradientUnits="userSpaceOnUse" x1="874.5" y1="0" x2="1320.5" y2="0"><stop offset="0.000" stop-color="#0026bd"/><stop offset="0.166" stop-color="#0400de"/><stop offset="0.291" stop-color="#5200c2"/><stop offset="0.435" stop-color="#96009a"/><stop offset="0.529" stop-color="#860061"/><stop offset="0.664" stop-color="#750039"/><stop offset="0.919" stop-color="#5f001a"/><stop offset="0.996" stop-color="#5a0015"/></linearGradient>
<linearGradient id="dim244" gradientUnits="userSpaceOnUse" x1="874.5" y1="0" x2="1320.5" y2="0"><stop offset="0.000" stop-color="#0025bd"/><stop offset="0.161" stop-color="#0300dd"/><stop offset="0.229" stop-color="#2c00d3"/><stop offset="0.377" stop-color="#7e00aa"/><stop offset="0.444" stop-color="#970095"/><stop offset="0.520" stop-color="#870065"/><stop offset="0.650" stop-color="#76003c"/><stop offset="0.892" stop-color="#61001c"/><stop offset="0.996" stop-color="#590016"/></linearGradient>
<linearGradient id="br0" gradientUnits="userSpaceOnUse" x1="958.5" y1="0" x2="1266.5" y2="0"><stop offset="0.000" stop-color="#00ff25"/><stop offset="0.318" stop-color="#01ff00"/><stop offset="0.506" stop-color="#7bff00"/><stop offset="0.669" stop-color="#fffd00"/><stop offset="0.760" stop-color="#ffbb00"/><stop offset="0.890" stop-color="#ff8100"/><stop offset="0.994" stop-color="#ff6200"/></linearGradient>
<linearGradient id="br1" gradientUnits="userSpaceOnUse" x1="958.5" y1="0" x2="1266.5" y2="0"><stop offset="0.000" stop-color="#00ff27"/><stop offset="0.318" stop-color="#02ff00"/><stop offset="0.506" stop-color="#7dff00"/><stop offset="0.662" stop-color="#ffff00"/><stop offset="0.753" stop-color="#ffbc00"/><stop offset="0.883" stop-color="#ff8100"/><stop offset="0.994" stop-color="#ff6100"/></linearGradient>
<linearGradient id="br2" gradientUnits="userSpaceOnUse" x1="958.5" y1="0" x2="1266.5" y2="0"><stop offset="0.000" stop-color="#00ff28"/><stop offset="0.318" stop-color="#03ff00"/><stop offset="0.506" stop-color="#80ff00"/><stop offset="0.662" stop-color="#fffb00"/><stop offset="0.753" stop-color="#ffb900"/><stop offset="0.883" stop-color="#ff7f00"/><stop offset="0.994" stop-color="#fe5f00"/></linearGradient>
<linearGradient id="br3" gradientUnits="userSpaceOnUse" x1="958.5" y1="0" x2="1266.5" y2="0"><stop offset="0.000" stop-color="#00ff29"/><stop offset="0.312" stop-color="#00ff00"/><stop offset="0.500" stop-color="#7dff00"/><stop offset="0.656" stop-color="#fffe00"/><stop offset="0.747" stop-color="#ffba00"/><stop offset="0.877" stop-color="#ff8000"/><stop offset="0.994" stop-color="#fe5e00"/></linearGradient>
<linearGradient id="br4" gradientUnits="userSpaceOnUse" x1="958.5" y1="0" x2="1266.5" y2="0"><stop offset="0.000" stop-color="#00ff2b"/><stop offset="0.312" stop-color="#01ff02"/><stop offset="0.500" stop-color="#7fff00"/><stop offset="0.649" stop-color="#feff00"/><stop offset="0.740" stop-color="#ffbb00"/><stop offset="0.870" stop-color="#ff8000"/><stop offset="0.994" stop-color="#fe5c00"/></linearGradient>
<linearGradient id="br5" gradientUnits="userSpaceOnUse" x1="958.5" y1="0" x2="1266.5" y2="0"><stop offset="0.000" stop-color="#00ff2c"/><stop offset="0.312" stop-color="#03ff03"/><stop offset="0.494" stop-color="#7dff00"/><stop offset="0.649" stop-color="#fffc00"/><stop offset="0.740" stop-color="#ffb900"/><stop offset="0.870" stop-color="#ff7e00"/><stop offset="0.994" stop-color="#fe5b00"/></linearGradient>
<linearGradient id="br6" gradientUnits="userSpaceOnUse" x1="958.5" y1="0" x2="1266.5" y2="0"><stop offset="0.000" stop-color="#00ff2d"/><stop offset="0.312" stop-color="#04ff05"/><stop offset="0.494" stop-color="#7fff00"/><stop offset="0.643" stop-color="#fffe00"/><stop offset="0.727" stop-color="#ffbe00"/><stop offset="0.851" stop-color="#ff8300"/><stop offset="0.994" stop-color="#fe5900"/></linearGradient>
<linearGradient id="br7" gradientUnits="userSpaceOnUse" x1="958.5" y1="0" x2="1266.5" y2="0"><stop offset="0.000" stop-color="#00ff2f"/><stop offset="0.305" stop-color="#01ff07"/><stop offset="0.409" stop-color="#44ff00"/><stop offset="0.571" stop-color="#c2ff00"/><stop offset="0.636" stop-color="#fdff00"/><stop offset="0.734" stop-color="#ffb700"/><stop offset="0.864" stop-color="#ff7d00"/><stop offset="0.994" stop-color="#fe5800"/></linearGradient>
<linearGradient id="br8" gradientUnits="userSpaceOnUse" x1="958.5" y1="0" x2="1266.5" y2="0"><stop offset="0.000" stop-color="#00ff30"/><stop offset="0.305" stop-color="#02ff08"/><stop offset="0.403" stop-color="#41ff00"/><stop offset="0.565" stop-color="#bfff00"/><stop offset="0.636" stop-color="#fffd00"/><stop offset="0.721" stop-color="#ffbc00"/><stop offset="0.844" stop-color="#ff8200"/><stop offset="0.994" stop-color="#fe5600"/></linearGradient>
<linearGradient id="br9" gradientUnits="userSpaceOnUse" x1="958.5" y1="0" x2="1266.5" y2="0"><stop offset="0.000" stop-color="#00ff32"/><stop offset="0.305" stop-color="#03ff0a"/><stop offset="0.403" stop-color="#43ff00"/><stop offset="0.565" stop-color="#c2ff00"/><stop offset="0.630" stop-color="#ffff00"/><stop offset="0.714" stop-color="#ffbd00"/><stop offset="0.838" stop-color="#ff8200"/><stop offset="0.994" stop-color="#fe5500"/></linearGradient>
<linearGradient id="br10" gradientUnits="userSpaceOnUse" x1="958.5" y1="0" x2="1266.5" y2="0"><stop offset="0.000" stop-color="#00ff33"/><stop offset="0.299" stop-color="#00ff0c"/><stop offset="0.409" stop-color="#49ff00"/><stop offset="0.571" stop-color="#cbff00"/><stop offset="0.630" stop-color="#fffb00"/><stop offset="0.714" stop-color="#ffba00"/><stop offset="0.838" stop-color="#ff8000"/><stop offset="0.994" stop-color="#fe5400"/></linearGradient>
<linearGradient id="br11" gradientUnits="userSpaceOnUse" x1="958.5" y1="0" x2="1266.5" y2="0"><stop offset="0.000" stop-color="#00ff35"/><stop offset="0.299" stop-color="#02ff0e"/><stop offset="0.416" stop-color="#50ff00"/><stop offset="0.571" stop-color="#cfff00"/><stop offset="0.623" stop-color="#fffe00"/><stop offset="0.708" stop-color="#ffbb00"/><stop offset="0.831" stop-color="#ff8000"/><stop offset="0.994" stop-color="#fe5200"/></linearGradient>
<linearGradient id="br12" gradientUnits="userSpaceOnUse" x1="958.5" y1="0" x2="1266.5" y2="0"><stop offset="0.000" stop-color="#00ff36"/><stop offset="0.299" stop-color="#03ff0f"/><stop offset="0.422" stop-color="#57ff00"/><stop offset="0.578" stop-color="#d8ff00"/><stop offset="0.617" stop-color="#feff00"/><stop offset="0.708" stop-color="#ffb900"/><stop offset="0.831" stop-color="#ff7e00"/><stop offset="0.994" stop-color="#fe5100"/></linearGradient>
<linearGradient id="br13" gradientUnits="userSpaceOnUse" x1="958.5" y1="0" x2="1266.5" y2="0"><stop offset="0.000" stop-color="#00ff38"/><stop offset="0.299" stop-color="#04ff11"/><stop offset="0.429" stop-color="#5dff00"/><stop offset="0.584" stop-color="#e2ff00"/><stop offset="0.617" stop-color="#fffc00"/><stop offset="0.701" stop-color="#ffba00"/><stop offset="0.825" stop-color="#ff7f00"/><stop offset="0.994" stop-color="#fe4f00"/></linearGradient>
<linearGradient id="br14" gradientUnits="userSpaceOnUse" x1="958.5" y1="0" x2="1266.5" y2="0"><stop offset="0.000" stop-color="#00ff39"/><stop offset="0.292" stop-color="#01ff13"/><stop offset="0.435" stop-color="#65ff00"/><stop offset="0.584" stop-color="#e6ff00"/><stop offset="0.610" stop-color="#fffe00"/><stop offset="0.695" stop-color="#ffbb00"/><stop offset="0.818" stop-color="#ff7f00"/><stop offset="0.994" stop-color="#fe4e00"/></linearGradient>
<linearGradient id="br15" gradientUnits="userSpaceOnUse" x1="958.5" y1="0" x2="1266.5" y2="0"><stop offset="0.000" stop-color="#00ff3b"/><stop offset="0.292" stop-color="#02ff15"/><stop offset="0.442" stop-color="#6cff00"/><stop offset="0.591" stop-color="#f0ff00"/><stop offset="0.610" stop-color="#fffa00"/><stop offset="0.695" stop-color="#ffb800"/><stop offset="0.818" stop-color="#ff7d00"/><stop offset="0.994" stop-color="#fd4c00"/></linearGradient>
<linearGradient id="br16" gradientUnits="userSpaceOnUse" x1="958.5" y1="0" x2="1266.5" y2="0"><stop offset="0.000" stop-color="#00ff3d"/><stop offset="0.292" stop-color="#03ff17"/><stop offset="0.448" stop-color="#73ff00"/><stop offset="0.591" stop-color="#f4ff00"/><stop offset="0.610" stop-color="#fff600"/><stop offset="0.695" stop-color="#ffb500"/><stop offset="0.818" stop-color="#ff7b00"/><stop offset="0.994" stop-color="#fd4b00"/></linearGradient>
<linearGradient id="br17" gradientUnits="userSpaceOnUse" x1="958.5" y1="0" x2="1266.5" y2="0"><stop offset="0.000" stop-color="#00ff3e"/><stop offset="0.286" stop-color="#00ff19"/><stop offset="0.455" stop-color="#7bff00"/><stop offset="0.597" stop-color="#ffff00"/><stop offset="0.682" stop-color="#ffba00"/><stop offset="0.799" stop-color="#ff8000"/><stop offset="0.981" stop-color="#fd4c00"/><stop offset="0.994" stop-color="#fd4a00"/></linearGradient>
<linearGradient id="br18" gradientUnits="userSpaceOnUse" x1="958.5" y1="0" x2="1266.5" y2="0"><stop offset="0.000" stop-color="#00ff40"/><stop offset="0.286" stop-color="#02ff1b"/><stop offset="0.455" stop-color="#7eff00"/><stop offset="0.597" stop-color="#fffb00"/><stop offset="0.675" stop-color="#ffbc00"/><stop offset="0.792" stop-color="#ff8100"/><stop offset="0.974" stop-color="#fd4c00"/><stop offset="0.994" stop-color="#fd4800"/></linearGradient>
<linearGradient id="br19" gradientUnits="userSpaceOnUse" x1="958.5" y1="0" x2="1266.5" y2="0"><stop offset="0.000" stop-color="#00ff42"/><stop offset="0.286" stop-color="#03ff1d"/><stop offset="0.455" stop-color="#80ff00"/><stop offset="0.591" stop-color="#fffe00"/><stop offset="0.669" stop-color="#ffbd00"/><stop offset="0.786" stop-color="#ff8100"/><stop offset="0.968" stop-color="#fd4c00"/><stop offset="0.994" stop-color="#fd4700"/></linearGradient>
<linearGradient id="br20" gradientUnits="userSpaceOnUse" x1="958.5" y1="0" x2="1266.5" y2="0"><stop offset="0.000" stop-color="#00ff43"/><stop offset="0.279" stop-color="#00ff1f"/><stop offset="0.448" stop-color="#7dff02"/><stop offset="0.584" stop-color="#feff00"/><stop offset="0.669" stop-color="#ffba00"/><stop offset="0.786" stop-color="#ff7f00"/><stop offset="0.968" stop-color="#fd4b00"/><stop offset="0.994" stop-color="#fd4500"/></linearGradient>
<linearGradient id="br21" gradientUnits="userSpaceOnUse" x1="958.5" y1="0" x2="1266.5" y2="0"><stop offset="0.000" stop-color="#00ff45"/><stop offset="0.279" stop-color="#01ff21"/><stop offset="0.448" stop-color="#80ff04"/><stop offset="0.584" stop-color="#fffc00"/><stop offset="0.662" stop-color="#ffbb00"/><stop offset="0.779" stop-color="#ff7f00"/><stop offset="0.961" stop-color="#fd4b00"/><stop offset="0.994" stop-color="#fd4400"/></linearGradient>
<linearGradient id="br22" gradientUnits="userSpaceOnUse" x1="958.5" y1="0" x2="1266.5" y2="0"><stop offset="0.000" stop-color="#00ff47"/><stop offset="0.279" stop-color="#02ff23"/><stop offset="0.442" stop-color="#7dff07"/><stop offset="0.526" stop-color="#caff00"/><stop offset="0.578" stop-color="#fffe00"/><stop offset="0.656" stop-color="#ffbc00"/><stop offset="0.766" stop-color="#ff8200"/><stop offset="0.942" stop-color="#fe4d00"/><stop offset="0.994" stop-color="#fc4300"/></linearGradient>
<linearGradient id="br23" gradientUnits="userSpaceOnUse" x1="958.5" y1="0" x2="1266.5" y2="0"><stop offset="0.000" stop-color="#00ff49"/><stop offset="0.279" stop-color="#04ff25"/><stop offset="0.442" stop-color="#80ff08"/><stop offset="0.519" stop-color="#c7ff00"/><stop offset="0.571" stop-color="#fdff00"/><stop offset="0.662" stop-color="#ffb500"/><stop offset="0.779" stop-color="#ff7b00"/><stop offset="0.961" stop-color="#fd4800"/><stop offset="0.994" stop-color="#fc4100"/></linearGradient>
<linearGradient id="br24" gradientUnits="userSpaceOnUse" x1="958.5" y1="0" x2="1266.5" y2="0"><stop offset="0.000" stop-color="#00ff4a"/><stop offset="0.273" stop-color="#00ff28"/><stop offset="0.435" stop-color="#7dff0c"/><stop offset="0.519" stop-color="#cbff00"/><stop offset="0.571" stop-color="#fffd00"/><stop offset="0.649" stop-color="#ffba00"/><stop offset="0.760" stop-color="#ff8100"/><stop offset="0.935" stop-color="#fd4c00"/><stop offset="0.994" stop-color="#fc4000"/></linearGradient>
<linearGradient id="br25" gradientUnits="userSpaceOnUse" x1="958.5" y1="0" x2="1266.5" y2="0"><stop offset="0.000" stop-color="#00ff4c"/><stop offset="0.273" stop-color="#02ff29"/><stop offset="0.435" stop-color="#7fff0d"/><stop offset="0.526" stop-color="#d5ff00"/><stop offset="0.565" stop-color="#ffff00"/><stop offset="0.643" stop-color="#ffbc00"/><stop offset="0.753" stop-color="#ff8100"/><stop offset="0.929" stop-color="#fd4c00"/><stop offset="0.994" stop-color="#fc3e00"/></linearGradient>
<linearGradient id="br26" gradientUnits="userSpaceOnUse" x1="958.5" y1="0" x2="1266.5" y2="0"><stop offset="0.000" stop-color="#00ff4e"/><stop offset="0.273" stop-color="#03ff2b"/><stop offset="0.435" stop-color="#82ff0f"/><stop offset="0.532" stop-color="#e0ff00"/><stop offset="0.565" stop-color="#fffb00"/><stop offset="0.643" stop-color="#ffb800"/><stop offset="0.753" stop-color="#ff7f00"/><stop offset="0.929" stop-color="#fd4a00"/><stop offset="0.994" stop-color="#fc3d00"/></linearGradient>
<linearGradient id="br27" gradientUnits="userSpaceOnUse" x1="958.5" y1="0" x2="1266.5" y2="0"><stop offset="0.000" stop-color="#00ff50"/><stop offset="0.266" stop-color="#00ff2e"/><stop offset="0.422" stop-color="#79ff14"/><stop offset="0.539" stop-color="#ebff00"/><stop offset="0.558" stop-color="#fffe00"/><stop offset="0.636" stop-color="#ffba00"/><stop offset="0.747" stop-color="#ff7f00"/><stop offset="0.922" stop-color="#fd4a00"/><stop offset="0.994" stop-color="#fb3c00"/></linearGradient>
<linearGradient id="br28" gradientUnits="userSpaceOnUse" x1="958.5" y1="0" x2="1266.5" y2="0"><stop offset="0.000" stop-color="#00ff52"/><stop offset="0.266" stop-color="#01ff30"/><stop offset="0.422" stop-color="#7cff16"/><stop offset="0.545" stop-color="#f6ff00"/><stop offset="0.558" stop-color="#fff900"/><stop offset="0.636" stop-color="#ffb700"/><stop offset="0.747" stop-color="#ff7d00"/><stop offset="0.922" stop-color="#fd4900"/><stop offset="0.994" stop-color="#fb3a00"/></linearGradient>
<linearGradient id="br29" gradientUnits="userSpaceOnUse" x1="958.5" y1="0" x2="1266.5" y2="0"><stop offset="0.000" stop-color="#00ff54"/><stop offset="0.266" stop-color="#02ff32"/><stop offset="0.422" stop-color="#7fff18"/><stop offset="0.552" stop-color="#fffc00"/><stop offset="0.623" stop-color="#ffbc00"/><stop offset="0.727" stop-color="#ff8300"/><stop offset="0.890" stop-color="#fe4f00"/><stop offset="0.994" stop-color="#fb3900"/></linearGradient>
<linearGradient id="br30" gradientUnits="userSpaceOnUse" x1="958.5" y1="0" x2="1266.5" y2="0"><stop offset="0.000" stop-color="#00ff56"/><stop offset="0.266" stop-color="#04ff34"/><stop offset="0.422" stop-color="#82ff1a"/><stop offset="0.545" stop-color="#ffff00"/><stop offset="0.617" stop-color="#ffbe00"/><stop offset="0.721" stop-color="#ff8300"/><stop offset="0.883" stop-color="#fe4f00"/><stop offset="0.994" stop-color="#fa3800"/></linearGradient>
<linearGradient id="br31" gradientUnits="userSpaceOnUse" x1="958.5" y1="0" x2="1266.5" y2="0"><stop offset="0.000" stop-color="#00ff58"/><stop offset="0.260" stop-color="#01ff37"/><stop offset="0.416" stop-color="#7eff1d"/><stop offset="0.539" stop-color="#fdff03"/><stop offset="0.623" stop-color="#ffb600"/><stop offset="0.734" stop-color="#ff7b00"/><stop offset="0.909" stop-color="#fd4700"/><stop offset="0.994" stop-color="#fa3600"/></linearGradient>
<linearGradient id="br32" gradientUnits="userSpaceOnUse" x1="958.5" y1="0" x2="1266.5" y2="0"><stop offset="0.000" stop-color="#00ff5a"/><stop offset="0.260" stop-color="#02ff3a"/><stop offset="0.409" stop-color="#7bff21"/><stop offset="0.539" stop-color="#fffd05"/><stop offset="0.610" stop-color="#ffbc00"/><stop offset="0.714" stop-color="#ff8100"/><stop offset="0.877" stop-color="#fd4d00"/><stop offset="0.994" stop-color="#fa3500"/></linearGradient>
<linearGradient id="br33" gradientUnits="userSpaceOnUse" x1="958.5" y1="0" x2="1266.5" y2="0"><stop offset="0.000" stop-color="#00ff5c"/><stop offset="0.260" stop-color="#03ff3c"/><stop offset="0.409" stop-color="#7eff23"/><stop offset="0.532" stop-color="#ffff09"/><stop offset="0.597" stop-color="#ffc200"/><stop offset="0.695" stop-color="#ff8800"/><stop offset="0.851" stop-color="#fe5200"/><stop offset="0.994" stop-color="#fa3400"/></linearGradient>
<linearGradient id="br34" gradientUnits="userSpaceOnUse" x1="958.5" y1="0" x2="1266.5" y2="0"><stop offset="0.000" stop-color="#00ff5e"/><stop offset="0.253" stop-color="#00ff3f"/><stop offset="0.403" stop-color="#7bff26"/><stop offset="0.532" stop-color="#fffb0b"/><stop offset="0.604" stop-color="#ffba00"/><stop offset="0.708" stop-color="#ff7f00"/><stop offset="0.870" stop-color="#fd4b00"/><stop offset="0.994" stop-color="#f93200"/></linearGradient>
<linearGradient id="br35" gradientUnits="userSpaceOnUse" x1="958.5" y1="0" x2="1266.5" y2="0"><stop offset="0.000" stop-color="#00ff60"/><stop offset="0.253" stop-color="#01ff41"/><stop offset="0.403" stop-color="#7eff29"/><stop offset="0.526" stop-color="#fffe0f"/><stop offset="0.597" stop-color="#ffbb00"/><stop offset="0.701" stop-color="#ff8000"/><stop offset="0.864" stop-color="#fd4b00"/><stop offset="0.994" stop-color="#f93100"/></linearGradient>
<linearGradient id="br36" gradientUnits="userSpaceOnUse" x1="958.5" y1="0" x2="1266.5" y2="0"><stop offset="0.000" stop-color="#00ff62"/><stop offset="0.253" stop-color="#03ff44"/><stop offset="0.403" stop-color="#81ff2b"/><stop offset="0.519" stop-color="#fdff12"/><stop offset="0.597" stop-color="#ffb800"/><stop offset="0.701" stop-color="#ff7d00"/><stop offset="0.864" stop-color="#fd4a00"/><stop offset="0.994" stop-color="#f83000"/></linearGradient>
<linearGradient id="br37" gradientUnits="userSpaceOnUse" x1="958.5" y1="0" x2="1266.5" y2="0"><stop offset="0.000" stop-color="#00ff65"/><stop offset="0.253" stop-color="#04ff46"/><stop offset="0.396" stop-color="#7dff2e"/><stop offset="0.519" stop-color="#fffc15"/><stop offset="0.591" stop-color="#ffb902"/><stop offset="0.695" stop-color="#ff7e00"/><stop offset="0.857" stop-color="#fd4900"/><stop offset="0.994" stop-color="#f82f00"/></linearGradient>
<linearGradient id="br38" gradientUnits="userSpaceOnUse" x1="958.5" y1="0" x2="1266.5" y2="0"><stop offset="0.000" stop-color="#00ff67"/><stop offset="0.247" stop-color="#01ff49"/><stop offset="0.390" stop-color="#7aff32"/><stop offset="0.513" stop-color="#ffff19"/><stop offset="0.578" stop-color="#ffbf07"/><stop offset="0.656" stop-color="#ff8e00"/><stop offset="0.799" stop-color="#fe5700"/><stop offset="0.994" stop-color="#f82d00"/></linearGradient>
<linearGradient id="br39" gradientUnits="userSpaceOnUse" x1="958.5" y1="0" x2="1266.5" y2="0"><stop offset="0.000" stop-color="#00ff69"/><stop offset="0.247" stop-color="#02ff4c"/><stop offset="0.390" stop-color="#7dff35"/><stop offset="0.506" stop-color="#fcff1d"/><stop offset="0.584" stop-color="#ffb707"/><stop offset="0.669" stop-color="#ff8500"/><stop offset="0.818" stop-color="#fe5000"/><stop offset="0.994" stop-color="#f72c00"/></linearGradient>
<linearGradient id="br40" gradientUnits="userSpaceOnUse" x1="958.5" y1="0" x2="1266.5" y2="0"><stop offset="0.000" stop-color="#00ff6b"/><stop offset="0.247" stop-color="#03ff4e"/><stop offset="0.390" stop-color="#80ff37"/><stop offset="0.506" stop-color="#fffd1f"/><stop offset="0.571" stop-color="#ffbd0b"/><stop offset="0.656" stop-color="#ff8900"/><stop offset="0.799" stop-color="#fe5300"/><stop offset="0.994" stop-color="#f72b00"/></linearGradient>
<linearGradient id="br41" gradientUnits="userSpaceOnUse" x1="958.5" y1="0" x2="1266.5" y2="0"><stop offset="0.000" stop-color="#00ff6e"/><stop offset="0.240" stop-color="#00ff52"/><stop offset="0.383" stop-color="#7dff3b"/><stop offset="0.500" stop-color="#feff23"/><stop offset="0.571" stop-color="#ffba0d"/><stop offset="0.662" stop-color="#ff8300"/><stop offset="0.812" stop-color="#fe4e00"/><stop offset="0.994" stop-color="#f62900"/></linearGradient>
<linearGradient id="br42" gradientUnits="userSpaceOnUse" x1="958.5" y1="0" x2="1266.5" y2="0"><stop offset="0.000" stop-color="#00ff70"/><stop offset="0.240" stop-color="#01ff54"/><stop offset="0.383" stop-color="#80ff3e"/><stop offset="0.494" stop-color="#fbff28"/><stop offset="0.578" stop-color="#ffb10d"/><stop offset="0.669" stop-color="#ff7d00"/><stop offset="0.825" stop-color="#fd4900"/><stop offset="0.994" stop-color="#f62800"/></linearGradient>
<linearGradient id="br43" gradientUnits="userSpaceOnUse" x1="958.5" y1="0" x2="1266.5" y2="0"><stop offset="0.000" stop-color="#00ff72"/><stop offset="0.240" stop-color="#03ff57"/><stop offset="0.377" stop-color="#7cff41"/><stop offset="0.494" stop-color="#fffe2a"/><stop offset="0.558" stop-color="#ffbd14"/><stop offset="0.656" stop-color="#ff8100"/><stop offset="0.805" stop-color="#fd4c00"/><stop offset="0.994" stop-color="#f52700"/></linearGradient>
<linearGradient id="br44" gradientUnits="userSpaceOnUse" x1="958.5" y1="0" x2="1266.5" y2="0"><stop offset="0.000" stop-color="#00ff75"/><stop offset="0.234" stop-color="#00ff5a"/><stop offset="0.364" stop-color="#72ff47"/><stop offset="0.481" stop-color="#f5ff30"/><stop offset="0.494" stop-color="#fff92c"/><stop offset="0.558" stop-color="#ffb915"/><stop offset="0.656" stop-color="#ff7e01"/><stop offset="0.805" stop-color="#fd4b00"/><stop offset="0.994" stop-color="#f52600"/></linearGradient>
<linearGradient id="br45" gradientUnits="userSpaceOnUse" x1="958.5" y1="0" x2="1266.5" y2="0"><stop offset="0.000" stop-color="#00ff77"/><stop offset="0.234" stop-color="#01ff5d"/><stop offset="0.370" stop-color="#7cff48"/><stop offset="0.487" stop-color="#fffc31"/><stop offset="0.552" stop-color="#ffba19"/><stop offset="0.649" stop-color="#ff7f03"/><stop offset="0.799" stop-color="#fd4a00"/><stop offset="0.994" stop-color="#f42400"/></linearGradient>
<linearGradient id="br46" gradientUnits="userSpaceOnUse" x1="958.5" y1="0" x2="1266.5" y2="0"><stop offset="0.000" stop-color="#00ff7a"/><stop offset="0.234" stop-color="#02ff60"/><stop offset="0.370" stop-color="#7fff4b"/><stop offset="0.481" stop-color="#ffff36"/><stop offset="0.545" stop-color="#ffbc1d"/><stop offset="0.636" stop-color="#ff8207"/><stop offset="0.734" stop-color="#fe5b00"/><stop offset="0.942" stop-color="#f72b00"/><stop offset="0.994" stop-color="#f32300"/></linearGradient>
<linearGradient id="br47" gradientUnits="userSpaceOnUse" x1="958.5" y1="0" x2="1266.5" y2="0"><stop offset="0.000" stop-color="#00ff7d"/><stop offset="0.234" stop-color="#04ff63"/><stop offset="0.370" stop-color="#82ff4e"/><stop offset="0.474" stop-color="#fcff3a"/><stop offset="0.552" stop-color="#ffb31c"/><stop offset="0.649" stop-color="#ff7906"/><stop offset="0.766" stop-color="#fe5000"/><stop offset="0.994" stop-color="#f32200"/></linearGradient>
<linearGradient id="br48" gradientUnits="userSpaceOnUse" x1="958.5" y1="0" x2="1266.5" y2="0"><stop offset="0.000" stop-color="#00ff7f"/><stop offset="0.227" stop-color="#00ff66"/><stop offset="0.357" stop-color="#78ff53"/><stop offset="0.474" stop-color="#fffd3d"/><stop offset="0.539" stop-color="#ffba22"/><stop offset="0.630" stop-color="#ff800b"/><stop offset="0.727" stop-color="#fe5900"/><stop offset="0.935" stop-color="#f62a00"/><stop offset="0.994" stop-color="#f22100"/></linearGradient>
<linearGradient id="br49" gradientUnits="userSpaceOnUse" x1="958.5" y1="0" x2="1266.5" y2="0"><stop offset="0.000" stop-color="#00ff82"/><stop offset="0.227" stop-color="#01ff69"/><stop offset="0.357" stop-color="#7bff57"/><stop offset="0.468" stop-color="#feff42"/><stop offset="0.532" stop-color="#ffbb26"/><stop offset="0.623" stop-color="#ff810e"/><stop offset="0.734" stop-color="#fe5500"/><stop offset="0.948" stop-color="#f52600"/><stop offset="0.994" stop-color="#f12000"/></linearGradient>
<linearGradient id="br50" gradientUnits="userSpaceOnUse" x1="958.5" y1="0" x2="1266.5" y2="0"><stop offset="0.000" stop-color="#00ff85"/><stop offset="0.227" stop-color="#03ff6c"/><stop offset="0.357" stop-color="#7eff5a"/><stop offset="0.461" stop-color="#fbff47"/><stop offset="0.539" stop-color="#ffb225"/><stop offset="0.636" stop-color="#ff780c"/><stop offset="0.747" stop-color="#fe5000"/><stop offset="0.968" stop-color="#f32200"/><stop offset="0.994" stop-color="#f01e00"/></linearGradient>
<linearGradient id="br51" gradientUnits="userSpaceOnUse" x1="958.5" y1="0" x2="1266.5" y2="0"><stop offset="0.000" stop-color="#00ff87"/><stop offset="0.221" stop-color="#00ff70"/><stop offset="0.344" stop-color="#74ff5f"/><stop offset="0.461" stop-color="#fffe4a"/><stop offset="0.519" stop-color="#ffbe2e"/><stop offset="0.604" stop-color="#ff8515"/><stop offset="0.740" stop-color="#fe5000"/><stop offset="0.961" stop-color="#f22200"/><stop offset="0.994" stop-color="#f01d00"/></linearGradient>
<linearGradient id="br52" gradientUnits="userSpaceOnUse" x1="958.5" y1="0" x2="1266.5" y2="0"><stop offset="0.000" stop-color="#00ff8a"/><stop offset="0.221" stop-color="#01ff74"/><stop offset="0.351" stop-color="#7eff61"/><stop offset="0.455" stop-color="#fdff4f"/><stop offset="0.519" stop-color="#ffba2f"/><stop offset="0.610" stop-color="#ff7f15"/><stop offset="0.753" stop-color="#fd4a00"/><stop offset="0.981" stop-color="#f01e00"/><stop offset="0.994" stop-color="#ef1c00"/></linearGradient>
<linearGradient id="br53" gradientUnits="userSpaceOnUse" x1="958.5" y1="0" x2="1266.5" y2="0"><stop offset="0.000" stop-color="#00ff8d"/><stop offset="0.221" stop-color="#02ff77"/><stop offset="0.344" stop-color="#7aff66"/><stop offset="0.455" stop-color="#fffb51"/><stop offset="0.513" stop-color="#ffbc34"/><stop offset="0.597" stop-color="#ff8319"/><stop offset="0.734" stop-color="#fe4e00"/><stop offset="0.955" stop-color="#f22000"/><stop offset="0.994" stop-color="#ee1b00"/></linearGradient>
<linearGradient id="br54" gradientUnits="userSpaceOnUse" x1="958.5" y1="0" x2="1266.5" y2="0"><stop offset="0.000" stop-color="#00ff90"/><stop offset="0.221" stop-color="#04ff7a"/><stop offset="0.344" stop-color="#7eff69"/><stop offset="0.448" stop-color="#ffff57"/><stop offset="0.506" stop-color="#ffbe38"/><stop offset="0.591" stop-color="#ff831c"/><stop offset="0.721" stop-color="#fe4f03"/><stop offset="0.935" stop-color="#f22200"/><stop offset="0.994" stop-color="#ed1a00"/></linearGradient>
<linearGradient id="br55" gradientUnits="userSpaceOnUse" x1="958.5" y1="0" x2="1266.5" y2="0"><stop offset="0.000" stop-color="#00ff93"/><stop offset="0.214" stop-color="#00ff7e"/><stop offset="0.338" stop-color="#7aff6e"/><stop offset="0.442" stop-color="#fcff5c"/><stop offset="0.513" stop-color="#ffb437"/><stop offset="0.604" stop-color="#ff7a1a"/><stop offset="0.747" stop-color="#fd4601"/><stop offset="0.974" stop-color="#ee1b00"/><stop offset="0.994" stop-color="#ec1900"/></linearGradient>
<linearGradient id="br56" gradientUnits="userSpaceOnUse" x1="958.5" y1="0" x2="1266.5" y2="0"><stop offset="0.000" stop-color="#00ff96"/><stop offset="0.214" stop-color="#02ff82"/><stop offset="0.338" stop-color="#7dff72"/><stop offset="0.442" stop-color="#fffc5f"/><stop offset="0.500" stop-color="#ffbb3e"/><stop offset="0.584" stop-color="#ff8121"/><stop offset="0.714" stop-color="#fe4d06"/><stop offset="0.844" stop-color="#f82e00"/><stop offset="0.994" stop-color="#eb1700"/></linearGradient>
<linearGradient id="br57" gradientUnits="userSpaceOnUse" x1="958.5" y1="0" x2="1266.5" y2="0"><stop offset="0.000" stop-color="#00ff99"/><stop offset="0.214" stop-color="#03ff85"/><stop offset="0.338" stop-color="#81ff75"/><stop offset="0.435" stop-color="#feff66"/><stop offset="0.494" stop-color="#ffbd43"/><stop offset="0.578" stop-color="#ff8224"/><stop offset="0.708" stop-color="#fe4d08"/><stop offset="0.825" stop-color="#f93100"/><stop offset="0.994" stop-color="#ea1600"/></linearGradient>
<linearGradient id="br58" gradientUnits="userSpaceOnUse" x1="958.5" y1="0" x2="1266.5" y2="0"><stop offset="0.000" stop-color="#00ff9d"/><stop offset="0.208" stop-color="#00ff89"/><stop offset="0.325" stop-color="#75ff7b"/><stop offset="0.429" stop-color="#fbff6b"/><stop offset="0.487" stop-color="#ffbf47"/><stop offset="0.571" stop-color="#ff8227"/><stop offset="0.701" stop-color="#fe4d0b"/><stop offset="0.825" stop-color="#f82f00"/><stop offset="0.994" stop-color="#e91500"/></linearGradient>
<linearGradient id="br59" gradientUnits="userSpaceOnUse" x1="958.5" y1="0" x2="1266.5" y2="0"><stop offset="0.000" stop-color="#00ffa0"/><stop offset="0.208" stop-color="#01ff8d"/><stop offset="0.325" stop-color="#79ff7f"/><stop offset="0.429" stop-color="#fffe6e"/><stop offset="0.487" stop-color="#ffba49"/><stop offset="0.571" stop-color="#ff7f28"/><stop offset="0.701" stop-color="#fe4b0c"/><stop offset="0.831" stop-color="#f72c00"/><stop offset="0.994" stop-color="#e81400"/></linearGradient>
<linearGradient id="br60" gradientUnits="userSpaceOnUse" x1="958.5" y1="0" x2="1266.5" y2="0"><stop offset="0.000" stop-color="#00ffa3"/><stop offset="0.208" stop-color="#03ff91"/><stop offset="0.325" stop-color="#7cff83"/><stop offset="0.422" stop-color="#fdff74"/><stop offset="0.487" stop-color="#ffb64b"/><stop offset="0.571" stop-color="#ff7c2a"/><stop offset="0.701" stop-color="#fe490d"/><stop offset="0.838" stop-color="#f62900"/><stop offset="0.994" stop-color="#e71300"/></linearGradient>
<linearGradient id="br61" gradientUnits="userSpaceOnUse" x1="958.5" y1="0" x2="1266.5" y2="0"><stop offset="0.000" stop-color="#00ffa6"/><stop offset="0.201" stop-color="#00ff95"/><stop offset="0.305" stop-color="#69ff8a"/><stop offset="0.403" stop-color="#e6ff7c"/><stop offset="0.422" stop-color="#fffb77"/><stop offset="0.481" stop-color="#ffb850"/><stop offset="0.565" stop-color="#ff7d2d"/><stop offset="0.695" stop-color="#fe490f"/><stop offset="0.838" stop-color="#f62800"/><stop offset="0.994" stop-color="#e61200"/></linearGradient>
<linearGradient id="br62" gradientUnits="userSpaceOnUse" x1="958.5" y1="0" x2="1266.5" y2="0"><stop offset="0.000" stop-color="#00ffaa"/><stop offset="0.201" stop-color="#00ff99"/><stop offset="0.318" stop-color="#7cff8c"/><stop offset="0.416" stop-color="#ffff7e"/><stop offset="0.468" stop-color="#ffc058"/><stop offset="0.545" stop-color="#ff8535"/><stop offset="0.662" stop-color="#ff5116"/><stop offset="0.838" stop-color="#f52600"/><stop offset="0.994" stop-color="#e51100"/></linearGradient>
<linearGradient id="br63" gradientUnits="userSpaceOnUse" x1="958.5" y1="0" x2="1266.5" y2="0"><stop offset="0.000" stop-color="#00ffad"/><stop offset="0.201" stop-color="#02ff9d"/><stop offset="0.318" stop-color="#80ff91"/><stop offset="0.409" stop-color="#fbff84"/><stop offset="0.474" stop-color="#ffb556"/><stop offset="0.558" stop-color="#ff7a32"/><stop offset="0.688" stop-color="#fe4712"/><stop offset="0.851" stop-color="#f32300"/><stop offset="0.994" stop-color="#e41000"/></linearGradient>
<linearGradient id="br64" gradientUnits="userSpaceOnUse" x1="958.5" y1="0" x2="1266.5" y2="0"><stop offset="0.000" stop-color="#00ffb1"/><stop offset="0.201" stop-color="#04ffa1"/><stop offset="0.312" stop-color="#7bff96"/><stop offset="0.409" stop-color="#fffc88"/><stop offset="0.461" stop-color="#ffbd5f"/><stop offset="0.539" stop-color="#ff823a"/><stop offset="0.656" stop-color="#ff4f1a"/><stop offset="0.851" stop-color="#f22100"/><stop offset="0.994" stop-color="#e20f00"/></linearGradient>
<linearGradient id="br65" gradientUnits="userSpaceOnUse" x1="958.5" y1="0" x2="1266.5" y2="0"><stop offset="0.000" stop-color="#00ffb5"/><stop offset="0.195" stop-color="#00ffa6"/><stop offset="0.299" stop-color="#6fff9c"/><stop offset="0.396" stop-color="#f4ff90"/><stop offset="0.403" stop-color="#feff8f"/><stop offset="0.461" stop-color="#ffb961"/><stop offset="0.539" stop-color="#ff7f3b"/><stop offset="0.662" stop-color="#fe4b1a"/><stop offset="0.857" stop-color="#f11f00"/><stop offset="0.994" stop-color="#e10e00"/></linearGradient>
<linearGradient id="br66" gradientUnits="userSpaceOnUse" x1="958.5" y1="0" x2="1266.5" y2="0"><stop offset="0.000" stop-color="#00ffb8"/><stop offset="0.195" stop-color="#01ffab"/><stop offset="0.305" stop-color="#7bffa0"/><stop offset="0.396" stop-color="#faff95"/><stop offset="0.429" stop-color="#ffd779"/><stop offset="0.494" stop-color="#ff9950"/><stop offset="0.591" stop-color="#ff632c"/><stop offset="0.753" stop-color="#fb310b"/><stop offset="0.896" stop-color="#ec1800"/><stop offset="0.994" stop-color="#df0d00"/></linearGradient>
<linearGradient id="br67" gradientUnits="userSpaceOnUse" x1="958.5" y1="0" x2="1266.5" y2="0"><stop offset="0.000" stop-color="#00ffbc"/><stop offset="0.195" stop-color="#03ffaf"/><stop offset="0.305" stop-color="#7fffa5"/><stop offset="0.396" stop-color="#fffe99"/><stop offset="0.448" stop-color="#ffbc6c"/><stop offset="0.526" stop-color="#ff8043"/><stop offset="0.643" stop-color="#ff4d20"/><stop offset="0.844" stop-color="#f11e01"/><stop offset="0.994" stop-color="#de0c00"/></linearGradient>
<linearGradient id="br68" gradientUnits="userSpaceOnUse" x1="958.5" y1="0" x2="1266.5" y2="0"><stop offset="0.000" stop-color="#00ffc0"/><stop offset="0.188" stop-color="#00ffb4"/><stop offset="0.286" stop-color="#6affac"/><stop offset="0.377" stop-color="#e8ffa2"/><stop offset="0.390" stop-color="#fcffa0"/><stop offset="0.448" stop-color="#ffb86e"/><stop offset="0.526" stop-color="#ff7d44"/><stop offset="0.643" stop-color="#ff4b21"/><stop offset="0.844" stop-color="#f11d02"/><stop offset="0.994" stop-color="#dd0a00"/></linearGradient>
<linearGradient id="br69" gradientUnits="userSpaceOnUse" x1="958.5" y1="0" x2="1266.5" y2="0"><stop offset="0.000" stop-color="#00ffc4"/><stop offset="0.188" stop-color="#00ffb9"/><stop offset="0.299" stop-color="#7effb0"/><stop offset="0.390" stop-color="#fffba3"/><stop offset="0.442" stop-color="#ffb974"/><stop offset="0.519" stop-color="#ff7e48"/><stop offset="0.636" stop-color="#ff4b24"/><stop offset="0.838" stop-color="#f11d03"/><stop offset="0.994" stop-color="#db0a00"/></linearGradient>
<linearGradient id="br70" gradientUnits="userSpaceOnUse" x1="958.5" y1="0" x2="1266.5" y2="0"><stop offset="0.000" stop-color="#00ffc8"/><stop offset="0.188" stop-color="#02ffbd"/><stop offset="0.292" stop-color="#7affb5"/><stop offset="0.383" stop-color="#ffffac"/><stop offset="0.435" stop-color="#ffbb7a"/><stop offset="0.506" stop-color="#ff8250"/><stop offset="0.617" stop-color="#ff4f2a"/><stop offset="0.805" stop-color="#f52108"/><stop offset="0.955" stop-color="#df0c00"/><stop offset="0.994" stop-color="#d90900"/></linearGradient>
<linearGradient id="br71" gradientUnits="userSpaceOnUse" x1="958.5" y1="0" x2="1266.5" y2="0"><stop offset="0.000" stop-color="#00ffcc"/><stop offset="0.188" stop-color="#04ffc2"/><stop offset="0.292" stop-color="#7effbb"/><stop offset="0.377" stop-color="#fbffb3"/><stop offset="0.442" stop-color="#ffb077"/><stop offset="0.519" stop-color="#ff774b"/><stop offset="0.643" stop-color="#fe4424"/><stop offset="0.844" stop-color="#ef1904"/><stop offset="0.994" stop-color="#d80800"/></linearGradient>
<linearGradient id="br72" gradientUnits="userSpaceOnUse" x1="958.5" y1="0" x2="1266.5" y2="0"><stop offset="0.000" stop-color="#00ffd0"/><stop offset="0.182" stop-color="#00ffc8"/><stop offset="0.279" stop-color="#71ffc1"/><stop offset="0.364" stop-color="#ecffba"/><stop offset="0.377" stop-color="#fffcb7"/><stop offset="0.422" stop-color="#ffbf87"/><stop offset="0.494" stop-color="#ff8359"/><stop offset="0.604" stop-color="#ff4f2f"/><stop offset="0.786" stop-color="#f7210c"/><stop offset="0.948" stop-color="#dd0b00"/><stop offset="0.994" stop-color="#d60700"/></linearGradient>
<linearGradient id="br73" gradientUnits="userSpaceOnUse" x1="958.5" y1="0" x2="1266.5" y2="0"><stop offset="0.000" stop-color="#00ffd5"/><stop offset="0.182" stop-color="#01ffcd"/><stop offset="0.286" stop-color="#7dffc6"/><stop offset="0.370" stop-color="#feffc0"/><stop offset="0.422" stop-color="#ffba89"/><stop offset="0.494" stop-color="#ff805a"/><stop offset="0.604" stop-color="#ff4d31"/><stop offset="0.792" stop-color="#f61f0c"/><stop offset="0.955" stop-color="#da0900"/><stop offset="0.994" stop-color="#d40600"/></linearGradient>
<linearGradient id="br74" gradientUnits="userSpaceOnUse" x1="958.5" y1="0" x2="1266.5" y2="0"><stop offset="0.000" stop-color="#00ffd9"/><stop offset="0.182" stop-color="#03ffd2"/><stop offset="0.286" stop-color="#82ffcc"/><stop offset="0.364" stop-color="#f9ffc7"/><stop offset="0.383" stop-color="#ffe5b1"/><stop offset="0.435" stop-color="#ffa980"/><stop offset="0.513" stop-color="#ff7152"/><stop offset="0.636" stop-color="#fe4029"/><stop offset="0.838" stop-color="#ef1607"/><stop offset="0.994" stop-color="#d20500"/></linearGradient>
<linearGradient id="br75" gradientUnits="userSpaceOnUse" x1="958.5" y1="0" x2="1266.5" y2="0"><stop offset="0.000" stop-color="#00ffde"/><stop offset="0.175" stop-color="#00ffd8"/><stop offset="0.260" stop-color="#63ffd4"/><stop offset="0.344" stop-color="#dfffcf"/><stop offset="0.364" stop-color="#fffecc"/><stop offset="0.409" stop-color="#ffbe97"/><stop offset="0.474" stop-color="#ff8667"/><stop offset="0.578" stop-color="#ff513b"/><stop offset="0.753" stop-color="#f92314"/><stop offset="0.916" stop-color="#de0b00"/><stop offset="0.994" stop-color="#d10400"/></linearGradient>
<linearGradient id="br76" gradientUnits="userSpaceOnUse" x1="958.5" y1="0" x2="1266.5" y2="0"><stop offset="0.000" stop-color="#00ffe2"/><stop offset="0.175" stop-color="#00ffdd"/><stop offset="0.273" stop-color="#78ffd9"/><stop offset="0.357" stop-color="#fcffd5"/><stop offset="0.409" stop-color="#ffb998"/><stop offset="0.481" stop-color="#ff7e65"/><stop offset="0.591" stop-color="#ff4a38"/><stop offset="0.779" stop-color="#f71d11"/><stop offset="0.974" stop-color="#d20500"/><stop offset="0.994" stop-color="#cf0300"/></linearGradient>
<linearGradient id="br77" gradientUnits="userSpaceOnUse" x1="958.5" y1="0" x2="1266.5" y2="0"><stop offset="0.000" stop-color="#00ffe7"/><stop offset="0.175" stop-color="#02ffe3"/><stop offset="0.273" stop-color="#7cffdf"/><stop offset="0.357" stop-color="#fffbd8"/><stop offset="0.403" stop-color="#ffbba0"/><stop offset="0.468" stop-color="#ff836d"/><stop offset="0.571" stop-color="#ff4f3f"/><stop offset="0.747" stop-color="#fa2116"/><stop offset="0.909" stop-color="#de0a02"/><stop offset="0.994" stop-color="#cd0200"/></linearGradient>
<linearGradient id="br78" gradientUnits="userSpaceOnUse" x1="958.5" y1="0" x2="1266.5" y2="0"><stop offset="0.000" stop-color="#00ffec"/><stop offset="0.169" stop-color="#00ffe9"/><stop offset="0.240" stop-color="#54ffe7"/><stop offset="0.325" stop-color="#d2ffe4"/><stop offset="0.351" stop-color="#ffffe3"/><stop offset="0.396" stop-color="#ffbda8"/><stop offset="0.461" stop-color="#ff8473"/><stop offset="0.558" stop-color="#ff5145"/><stop offset="0.727" stop-color="#fb231b"/><stop offset="0.890" stop-color="#e30b05"/><stop offset="0.994" stop-color="#ca0100"/></linearGradient>
<linearGradient id="br79" gradientUnits="userSpaceOnUse" x1="958.5" y1="0" x2="1266.5" y2="0"><stop offset="0.000" stop-color="#00fff1"/><stop offset="0.169" stop-color="#00ffef"/><stop offset="0.260" stop-color="#73ffed"/><stop offset="0.338" stop-color="#efffeb"/><stop offset="0.351" stop-color="#fff8e4"/><stop offset="0.396" stop-color="#ffb8a9"/><stop offset="0.461" stop-color="#ff8074"/><stop offset="0.565" stop-color="#ff4c43"/><stop offset="0.740" stop-color="#fa1f19"/><stop offset="0.903" stop-color="#df0804"/><stop offset="0.994" stop-color="#c80100"/></linearGradient>
<linearGradient id="br80" gradientUnits="userSpaceOnUse" x1="958.5" y1="0" x2="1266.5" y2="0"><stop offset="0.000" stop-color="#00fff6"/><stop offset="0.169" stop-color="#01fff5"/><stop offset="0.260" stop-color="#77fff4"/><stop offset="0.344" stop-color="#fffcf0"/><stop offset="0.390" stop-color="#ffbab1"/><stop offset="0.455" stop-color="#ff8079"/><stop offset="0.552" stop-color="#ff4e49"/><stop offset="0.721" stop-color="#fb211e"/><stop offset="0.890" stop-color="#e20806"/><stop offset="0.994" stop-color="#c70000"/></linearGradient>
<linearGradient id="br81" gradientUnits="userSpaceOnUse" x1="958.5" y1="0" x2="1266.5" y2="0"><stop offset="0.000" stop-color="#00fffb"/><stop offset="0.169" stop-color="#03fffb"/><stop offset="0.260" stop-color="#7bfffb"/><stop offset="0.338" stop-color="#fdfffb"/><stop offset="0.383" stop-color="#ffbcb9"/><stop offset="0.448" stop-color="#ff817f"/><stop offset="0.545" stop-color="#ff4e4d"/><stop offset="0.708" stop-color="#fc2221"/><stop offset="0.877" stop-color="#e50908"/><stop offset="0.987" stop-color="#c70000"/><stop offset="0.994" stop-color="#c70000"/></linearGradient>
<linearGradient id="br82" gradientUnits="userSpaceOnUse" x1="958.5" y1="0" x2="1266.5" y2="0"><stop offset="0.000" stop-color="#00fdff"/><stop offset="0.162" stop-color="#00fcff"/><stop offset="0.240" stop-color="#62fcff"/><stop offset="0.318" stop-color="#ddfbff"/><stop offset="0.338" stop-color="#fff9fd"/><stop offset="0.383" stop-color="#ffb7ba"/><stop offset="0.448" stop-color="#ff7d80"/><stop offset="0.545" stop-color="#ff4c4e"/><stop offset="0.714" stop-color="#fb1f21"/><stop offset="0.883" stop-color="#e30708"/><stop offset="0.987" stop-color="#c70000"/><stop offset="0.994" stop-color="#c70000"/></linearGradient>
<linearGradient id="br83" gradientUnits="userSpaceOnUse" x1="958.5" y1="0" x2="1266.5" y2="0"><stop offset="0.000" stop-color="#00f8ff"/><stop offset="0.162" stop-color="#00f6ff"/><stop offset="0.260" stop-color="#7ff4ff"/><stop offset="0.338" stop-color="#fff2fe"/><stop offset="0.383" stop-color="#ffb2bb"/><stop offset="0.448" stop-color="#ff7a81"/><stop offset="0.545" stop-color="#ff494f"/><stop offset="0.714" stop-color="#fb1d21"/><stop offset="0.883" stop-color="#e20609"/><stop offset="0.994" stop-color="#c70000"/></linearGradient>
<linearGradient id="br84" gradientUnits="userSpaceOnUse" x1="958.5" y1="0" x2="1266.5" y2="0"><stop offset="0.000" stop-color="#00f3ff"/><stop offset="0.162" stop-color="#02f0ff"/><stop offset="0.260" stop-color="#80edff"/><stop offset="0.338" stop-color="#ffeafe"/><stop offset="0.383" stop-color="#ffacbc"/><stop offset="0.448" stop-color="#ff7682"/><stop offset="0.545" stop-color="#ff4750"/><stop offset="0.714" stop-color="#fb1c22"/><stop offset="0.877" stop-color="#e3050a"/><stop offset="0.994" stop-color="#c80000"/></linearGradient>
<linearGradient id="br85" gradientUnits="userSpaceOnUse" x1="958.5" y1="0" x2="1266.5" y2="0"><stop offset="0.000" stop-color="#00edff"/><stop offset="0.156" stop-color="#00eaff"/><stop offset="0.227" stop-color="#54e8ff"/><stop offset="0.312" stop-color="#d2e5ff"/><stop offset="0.338" stop-color="#ffe3ff"/><stop offset="0.383" stop-color="#ffa7bd"/><stop offset="0.448" stop-color="#ff7284"/><stop offset="0.545" stop-color="#ff4451"/><stop offset="0.714" stop-color="#fb1a23"/><stop offset="0.877" stop-color="#e3040b"/><stop offset="0.994" stop-color="#c90001"/></linearGradient>
<linearGradient id="br86" gradientUnits="userSpaceOnUse" x1="958.5" y1="0" x2="1266.5" y2="0"><stop offset="0.000" stop-color="#00e8ff"/><stop offset="0.156" stop-color="#00e4ff"/><stop offset="0.247" stop-color="#70e0ff"/><stop offset="0.331" stop-color="#f3dcff"/><stop offset="0.338" stop-color="#ffdcff"/><stop offset="0.383" stop-color="#ffa2be"/><stop offset="0.448" stop-color="#ff6f85"/><stop offset="0.545" stop-color="#ff4252"/><stop offset="0.714" stop-color="#fb1924"/><stop offset="0.877" stop-color="#e2030c"/><stop offset="0.994" stop-color="#cb0001"/></linearGradient>
<linearGradient id="br87" gradientUnits="userSpaceOnUse" x1="958.5" y1="0" x2="1266.5" y2="0"><stop offset="0.000" stop-color="#00e3ff"/><stop offset="0.156" stop-color="#01deff"/><stop offset="0.253" stop-color="#7adaff"/><stop offset="0.338" stop-color="#fed5ff"/><stop offset="0.383" stop-color="#ff9dbf"/><stop offset="0.448" stop-color="#ff6b86"/><stop offset="0.552" stop-color="#ff3d51"/><stop offset="0.721" stop-color="#fa1624"/><stop offset="0.883" stop-color="#e0020c"/><stop offset="0.994" stop-color="#cc0002"/></linearGradient>
<linearGradient id="br88" gradientUnits="userSpaceOnUse" x1="958.5" y1="0" x2="1266.5" y2="0"><stop offset="0.000" stop-color="#00dfff"/><stop offset="0.156" stop-color="#03d8ff"/><stop offset="0.253" stop-color="#7bd3ff"/><stop offset="0.338" stop-color="#feceff"/><stop offset="0.390" stop-color="#ff92b9"/><stop offset="0.461" stop-color="#ff607e"/><stop offset="0.571" stop-color="#ff354b"/><stop offset="0.760" stop-color="#f60f1e"/><stop offset="0.942" stop-color="#d60007"/><stop offset="0.994" stop-color="#cd0002"/></linearGradient>
<linearGradient id="br89" gradientUnits="userSpaceOnUse" x1="958.5" y1="0" x2="1266.5" y2="0"><stop offset="0.000" stop-color="#00daff"/><stop offset="0.149" stop-color="#00d3ff"/><stop offset="0.240" stop-color="#6aceff"/><stop offset="0.325" stop-color="#e7c8ff"/><stop offset="0.338" stop-color="#fdc7ff"/><stop offset="0.390" stop-color="#ff8eba"/><stop offset="0.461" stop-color="#ff5d7f"/><stop offset="0.571" stop-color="#ff334c"/><stop offset="0.760" stop-color="#f60d1e"/><stop offset="0.929" stop-color="#d90008"/><stop offset="0.994" stop-color="#cf0003"/></linearGradient>
<linearGradient id="br90" gradientUnits="userSpaceOnUse" x1="958.5" y1="0" x2="1266.5" y2="0"><stop offset="0.000" stop-color="#00d5ff"/><stop offset="0.149" stop-color="#00ceff"/><stop offset="0.253" stop-color="#7dc7ff"/><stop offset="0.338" stop-color="#fdc0ff"/><stop offset="0.396" stop-color="#ff84b4"/><stop offset="0.468" stop-color="#ff577d"/><stop offset="0.578" stop-color="#ff2f4b"/><stop offset="0.773" stop-color="#f50a1d"/><stop offset="0.929" stop-color="#da0009"/><stop offset="0.994" stop-color="#d00004"/></linearGradient>
<linearGradient id="br91" gradientUnits="userSpaceOnUse" x1="958.5" y1="0" x2="1266.5" y2="0"><stop offset="0.000" stop-color="#00d0ff"/><stop offset="0.149" stop-color="#02c8ff"/><stop offset="0.253" stop-color="#7dc1ff"/><stop offset="0.338" stop-color="#fcb9ff"/><stop offset="0.396" stop-color="#ff7fb5"/><stop offset="0.468" stop-color="#ff547e"/><stop offset="0.584" stop-color="#ff2b4a"/><stop offset="0.779" stop-color="#f3081d"/><stop offset="0.935" stop-color="#da0009"/><stop offset="0.994" stop-color="#d10004"/></linearGradient>
<linearGradient id="br92" gradientUnits="userSpaceOnUse" x1="958.5" y1="0" x2="1266.5" y2="0"><stop offset="0.000" stop-color="#00ccff"/><stop offset="0.149" stop-color="#04c3ff"/><stop offset="0.253" stop-color="#7ebbff"/><stop offset="0.338" stop-color="#fcb3ff"/><stop offset="0.396" stop-color="#ff7bb6"/><stop offset="0.474" stop-color="#ff4d7b"/><stop offset="0.591" stop-color="#ff2749"/><stop offset="0.792" stop-color="#f1051b"/><stop offset="0.994" stop-color="#d20005"/></linearGradient>
<linearGradient id="br93" gradientUnits="userSpaceOnUse" x1="958.5" y1="0" x2="1266.5" y2="0"><stop offset="0.000" stop-color="#00c7ff"/><stop offset="0.143" stop-color="#00beff"/><stop offset="0.247" stop-color="#77b6ff"/><stop offset="0.338" stop-color="#fbadff"/><stop offset="0.403" stop-color="#ff72b1"/><stop offset="0.481" stop-color="#ff4878"/><stop offset="0.604" stop-color="#fe2246"/><stop offset="0.805" stop-color="#ef031a"/><stop offset="0.994" stop-color="#d40005"/></linearGradient>
<linearGradient id="br94" gradientUnits="userSpaceOnUse" x1="958.5" y1="0" x2="1266.5" y2="0"><stop offset="0.000" stop-color="#00c3ff"/><stop offset="0.143" stop-color="#01b9ff"/><stop offset="0.253" stop-color="#80b0ff"/><stop offset="0.338" stop-color="#fba6ff"/><stop offset="0.403" stop-color="#ff6eb2"/><stop offset="0.481" stop-color="#ff4579"/><stop offset="0.604" stop-color="#fe2046"/><stop offset="0.799" stop-color="#f0021c"/><stop offset="0.994" stop-color="#d50006"/></linearGradient>
<linearGradient id="br95" gradientUnits="userSpaceOnUse" x1="958.5" y1="0" x2="1266.5" y2="0"><stop offset="0.000" stop-color="#00beff"/><stop offset="0.143" stop-color="#03b4ff"/><stop offset="0.253" stop-color="#81aaff"/><stop offset="0.338" stop-color="#faa0ff"/><stop offset="0.370" stop-color="#ff83d6"/><stop offset="0.435" stop-color="#ff5798"/><stop offset="0.532" stop-color="#ff3061"/><stop offset="0.688" stop-color="#fc0f31"/><stop offset="0.851" stop-color="#e90015"/><stop offset="0.994" stop-color="#d60006"/></linearGradient>
<linearGradient id="br96" gradientUnits="userSpaceOnUse" x1="958.5" y1="0" x2="1266.5" y2="0"><stop offset="0.000" stop-color="#00baff"/><stop offset="0.136" stop-color="#00b0ff"/><stop offset="0.234" stop-color="#69a7ff"/><stop offset="0.325" stop-color="#e69cff"/><stop offset="0.344" stop-color="#ff97fa"/><stop offset="0.396" stop-color="#ff6aba"/><stop offset="0.474" stop-color="#ff427f"/><stop offset="0.591" stop-color="#ff1f4c"/><stop offset="0.792" stop-color="#f0001e"/><stop offset="0.994" stop-color="#d70007"/></linearGradient>
<linearGradient id="br97" gradientUnits="userSpaceOnUse" x1="958.5" y1="0" x2="1266.5" y2="0"><stop offset="0.000" stop-color="#00b6ff"/><stop offset="0.136" stop-color="#00abff"/><stop offset="0.247" stop-color="#7aa0ff"/><stop offset="0.338" stop-color="#f995ff"/><stop offset="0.357" stop-color="#ff85e8"/><stop offset="0.416" stop-color="#ff5ba9"/><stop offset="0.500" stop-color="#ff3672"/><stop offset="0.636" stop-color="#fe1440"/><stop offset="0.812" stop-color="#ef001c"/><stop offset="0.994" stop-color="#d80008"/></linearGradient>
<linearGradient id="br98" gradientUnits="userSpaceOnUse" x1="958.5" y1="0" x2="1266.5" y2="0"><stop offset="0.000" stop-color="#00b2ff"/><stop offset="0.136" stop-color="#02a7ff"/><stop offset="0.247" stop-color="#7b9bff"/><stop offset="0.344" stop-color="#ff8cfb"/><stop offset="0.396" stop-color="#ff63bc"/><stop offset="0.474" stop-color="#ff3c81"/><stop offset="0.591" stop-color="#ff1b4e"/><stop offset="0.792" stop-color="#f10020"/><stop offset="0.994" stop-color="#d90008"/></linearGradient>
<linearGradient id="br99" gradientUnits="userSpaceOnUse" x1="958.5" y1="0" x2="1266.5" y2="0"><stop offset="0.000" stop-color="#00aeff"/><stop offset="0.136" stop-color="#04a2ff"/><stop offset="0.247" stop-color="#7c96ff"/><stop offset="0.344" stop-color="#ff87fc"/><stop offset="0.396" stop-color="#ff5fbd"/><stop offset="0.474" stop-color="#ff3982"/><stop offset="0.597" stop-color="#fe184d"/><stop offset="0.786" stop-color="#f20022"/><stop offset="0.994" stop-color="#da0009"/></linearGradient>
<linearGradient id="br100" gradientUnits="userSpaceOnUse" x1="958.5" y1="0" x2="1266.5" y2="0"><stop offset="0.000" stop-color="#00aaff"/><stop offset="0.130" stop-color="#009eff"/><stop offset="0.240" stop-color="#7592ff"/><stop offset="0.344" stop-color="#ff82fc"/><stop offset="0.396" stop-color="#ff5bbd"/><stop offset="0.474" stop-color="#ff3783"/><stop offset="0.597" stop-color="#fe164e"/><stop offset="0.773" stop-color="#f40025"/><stop offset="0.994" stop-color="#db0009"/></linearGradient>
<linearGradient id="br101" gradientUnits="userSpaceOnUse" x1="958.5" y1="0" x2="1266.5" y2="0"><stop offset="0.000" stop-color="#00a6ff"/><stop offset="0.130" stop-color="#019aff"/><stop offset="0.247" stop-color="#7e8cff"/><stop offset="0.344" stop-color="#ff7dfd"/><stop offset="0.396" stop-color="#ff57be"/><stop offset="0.474" stop-color="#ff3484"/><stop offset="0.597" stop-color="#fe144f"/><stop offset="0.766" stop-color="#f50027"/><stop offset="0.994" stop-color="#dc000a"/></linearGradient>
<linearGradient id="br102" gradientUnits="userSpaceOnUse" x1="958.5" y1="0" x2="1266.5" y2="0"><stop offset="0.000" stop-color="#00a2ff"/><stop offset="0.130" stop-color="#0395ff"/><stop offset="0.247" stop-color="#7e87ff"/><stop offset="0.344" stop-color="#ff78fd"/><stop offset="0.396" stop-color="#ff53bf"/><stop offset="0.474" stop-color="#ff3185"/><stop offset="0.597" stop-color="#fe1250"/><stop offset="0.753" stop-color="#f6002a"/><stop offset="0.994" stop-color="#dd000b"/></linearGradient>
<linearGradient id="br103" gradientUnits="userSpaceOnUse" x1="958.5" y1="0" x2="1266.5" y2="0"><stop offset="0.000" stop-color="#009eff"/><stop offset="0.123" stop-color="#0092ff"/><stop offset="0.227" stop-color="#6985ff"/><stop offset="0.331" stop-color="#ed76ff"/><stop offset="0.344" stop-color="#ff73fe"/><stop offset="0.403" stop-color="#ff4cba"/><stop offset="0.487" stop-color="#ff2a7f"/><stop offset="0.617" stop-color="#fe0d4b"/><stop offset="0.747" stop-color="#f7002c"/><stop offset="0.994" stop-color="#de000b"/></linearGradient>
<linearGradient id="br104" gradientUnits="userSpaceOnUse" x1="958.5" y1="0" x2="1266.5" y2="0"><stop offset="0.000" stop-color="#009aff"/><stop offset="0.123" stop-color="#008eff"/><stop offset="0.240" stop-color="#787fff"/><stop offset="0.344" stop-color="#ff6efe"/><stop offset="0.403" stop-color="#ff49bb"/><stop offset="0.487" stop-color="#ff287f"/><stop offset="0.617" stop-color="#fe0b4c"/><stop offset="0.740" stop-color="#f8002e"/><stop offset="0.994" stop-color="#df000c"/></linearGradient>
<linearGradient id="br105" gradientUnits="userSpaceOnUse" x1="958.5" y1="0" x2="1266.5" y2="0"><stop offset="0.000" stop-color="#0096ff"/><stop offset="0.123" stop-color="#028aff"/><stop offset="0.247" stop-color="#817aff"/><stop offset="0.344" stop-color="#ff6aff"/><stop offset="0.403" stop-color="#ff45bb"/><stop offset="0.487" stop-color="#ff2580"/><stop offset="0.617" stop-color="#fe094d"/><stop offset="0.734" stop-color="#f80030"/><stop offset="0.994" stop-color="#df000c"/></linearGradient>
<linearGradient id="br106" gradientUnits="userSpaceOnUse" x1="958.5" y1="0" x2="1266.5" y2="0"><stop offset="0.000" stop-color="#0092ff"/><stop offset="0.123" stop-color="#0386ff"/><stop offset="0.247" stop-color="#8175ff"/><stop offset="0.344" stop-color="#ff65ff"/><stop offset="0.403" stop-color="#ff42bc"/><stop offset="0.487" stop-color="#ff2381"/><stop offset="0.617" stop-color="#fe084d"/><stop offset="0.734" stop-color="#f90031"/><stop offset="0.994" stop-color="#e0000d"/></linearGradient>
<linearGradient id="br107" gradientUnits="userSpaceOnUse" x1="958.5" y1="0" x2="1266.5" y2="0"><stop offset="0.000" stop-color="#008fff"/><stop offset="0.117" stop-color="#0082ff"/><stop offset="0.234" stop-color="#7373ff"/><stop offset="0.338" stop-color="#f561ff"/><stop offset="0.344" stop-color="#ff60ff"/><stop offset="0.403" stop-color="#ff3ebd"/><stop offset="0.487" stop-color="#ff2082"/><stop offset="0.617" stop-color="#fe064e"/><stop offset="0.747" stop-color="#f8002f"/><stop offset="0.994" stop-color="#e1000e"/></linearGradient>
<linearGradient id="br108" gradientUnits="userSpaceOnUse" x1="958.5" y1="0" x2="1266.5" y2="0"><stop offset="0.000" stop-color="#008bff"/><stop offset="0.117" stop-color="#017eff"/><stop offset="0.240" stop-color="#7c6eff"/><stop offset="0.344" stop-color="#fe5cff"/><stop offset="0.403" stop-color="#ff3bbe"/><stop offset="0.487" stop-color="#ff1e83"/><stop offset="0.617" stop-color="#fe044f"/><stop offset="0.831" stop-color="#f20021"/><stop offset="0.994" stop-color="#e2000e"/></linearGradient>
<linearGradient id="br109" gradientUnits="userSpaceOnUse" x1="958.5" y1="0" x2="1266.5" y2="0"><stop offset="0.000" stop-color="#0088ff"/><stop offset="0.117" stop-color="#037bff"/><stop offset="0.240" stop-color="#7c69ff"/><stop offset="0.344" stop-color="#fe57ff"/><stop offset="0.409" stop-color="#ff35b9"/><stop offset="0.500" stop-color="#ff187d"/><stop offset="0.643" stop-color="#fd0048"/><stop offset="0.870" stop-color="#ef001d"/><stop offset="0.994" stop-color="#e3000f"/></linearGradient>
<linearGradient id="br110" gradientUnits="userSpaceOnUse" x1="958.5" y1="0" x2="1266.5" y2="0"><stop offset="0.000" stop-color="#0084ff"/><stop offset="0.117" stop-color="#0477ff"/><stop offset="0.240" stop-color="#7d65ff"/><stop offset="0.344" stop-color="#fd53ff"/><stop offset="0.409" stop-color="#ff32ba"/><stop offset="0.500" stop-color="#ff167e"/><stop offset="0.643" stop-color="#fd0049"/><stop offset="0.870" stop-color="#f0001d"/><stop offset="0.994" stop-color="#e3000f"/></linearGradient>
<linearGradient id="br111" gradientUnits="userSpaceOnUse" x1="958.5" y1="0" x2="1266.5" y2="0"><stop offset="0.000" stop-color="#0081ff"/><stop offset="0.110" stop-color="#0074ff"/><stop offset="0.240" stop-color="#7e61ff"/><stop offset="0.344" stop-color="#fd4eff"/><stop offset="0.416" stop-color="#ff2cb5"/><stop offset="0.506" stop-color="#ff127c"/><stop offset="0.636" stop-color="#fd004c"/><stop offset="0.864" stop-color="#f1001f"/><stop offset="0.994" stop-color="#e40010"/></linearGradient>
<linearGradient id="br112" gradientUnits="userSpaceOnUse" x1="958.5" y1="0" x2="1266.5" y2="0"><stop offset="0.000" stop-color="#007dff"/><stop offset="0.110" stop-color="#0270ff"/><stop offset="0.240" stop-color="#7e5dff"/><stop offset="0.344" stop-color="#fc4aff"/><stop offset="0.416" stop-color="#ff29b6"/><stop offset="0.506" stop-color="#ff107d"/><stop offset="0.630" stop-color="#fe004f"/><stop offset="0.851" stop-color="#f20021"/><stop offset="0.994" stop-color="#e50011"/></linearGradient>
<linearGradient id="br113" gradientUnits="userSpaceOnUse" x1="958.5" y1="0" x2="1266.5" y2="0"><stop offset="0.000" stop-color="#007aff"/><stop offset="0.110" stop-color="#036dff"/><stop offset="0.240" stop-color="#7f59ff"/><stop offset="0.344" stop-color="#fc46ff"/><stop offset="0.416" stop-color="#ff26b7"/><stop offset="0.506" stop-color="#ff0e7e"/><stop offset="0.617" stop-color="#fe0053"/><stop offset="0.831" stop-color="#f40025"/><stop offset="0.994" stop-color="#e50011"/></linearGradient>
<linearGradient id="br114" gradientUnits="userSpaceOnUse" x1="958.5" y1="0" x2="1266.5" y2="0"><stop offset="0.000" stop-color="#0077ff"/><stop offset="0.104" stop-color="#006aff"/><stop offset="0.234" stop-color="#7957ff"/><stop offset="0.344" stop-color="#fc42ff"/><stop offset="0.422" stop-color="#ff21b2"/><stop offset="0.519" stop-color="#ff0978"/><stop offset="0.617" stop-color="#fe0054"/><stop offset="0.831" stop-color="#f50026"/><stop offset="0.994" stop-color="#e60012"/></linearGradient>
<linearGradient id="br115" gradientUnits="userSpaceOnUse" x1="958.5" y1="0" x2="1266.5" y2="0"><stop offset="0.000" stop-color="#0073ff"/><stop offset="0.104" stop-color="#0166ff"/><stop offset="0.234" stop-color="#7a53ff"/><stop offset="0.344" stop-color="#fb3eff"/><stop offset="0.422" stop-color="#ff1fb3"/><stop offset="0.519" stop-color="#ff0779"/><stop offset="0.617" stop-color="#fe0055"/><stop offset="0.831" stop-color="#f50027"/><stop offset="0.994" stop-color="#e70012"/></linearGradient>
<linearGradient id="br116" gradientUnits="userSpaceOnUse" x1="958.5" y1="0" x2="1266.5" y2="0"><stop offset="0.000" stop-color="#0070ff"/><stop offset="0.104" stop-color="#0263ff"/><stop offset="0.240" stop-color="#814eff"/><stop offset="0.344" stop-color="#fb3aff"/><stop offset="0.422" stop-color="#ff1cb4"/><stop offset="0.519" stop-color="#ff057a"/><stop offset="0.649" stop-color="#fd004c"/><stop offset="0.883" stop-color="#f10020"/><stop offset="0.994" stop-color="#e70013"/></linearGradient>
<linearGradient id="br117" gradientUnits="userSpaceOnUse" x1="958.5" y1="0" x2="1266.5" y2="0"><stop offset="0.000" stop-color="#006dff"/><stop offset="0.104" stop-color="#0460ff"/><stop offset="0.240" stop-color="#824aff"/><stop offset="0.351" stop-color="#ff34fb"/><stop offset="0.416" stop-color="#ff1bba"/><stop offset="0.513" stop-color="#ff047e"/><stop offset="0.662" stop-color="#fd004a"/><stop offset="0.903" stop-color="#f0001e"/><stop offset="0.994" stop-color="#e80014"/></linearGradient>
<linearGradient id="br118" gradientUnits="userSpaceOnUse" x1="958.5" y1="0" x2="1266.5" y2="0"><stop offset="0.000" stop-color="#006aff"/><stop offset="0.097" stop-color="#005dff"/><stop offset="0.234" stop-color="#7c48ff"/><stop offset="0.351" stop-color="#ff30fc"/><stop offset="0.416" stop-color="#ff18ba"/><stop offset="0.513" stop-color="#ff027f"/><stop offset="0.662" stop-color="#fd004b"/><stop offset="0.903" stop-color="#f1001f"/><stop offset="0.994" stop-color="#e80014"/></linearGradient>
<linearGradient id="br119" gradientUnits="userSpaceOnUse" x1="958.5" y1="0" x2="1266.5" y2="0"><stop offset="0.000" stop-color="#0067ff"/><stop offset="0.097" stop-color="#025aff"/><stop offset="0.234" stop-color="#7c44ff"/><stop offset="0.351" stop-color="#ff2cfc"/><stop offset="0.416" stop-color="#ff15bb"/><stop offset="0.513" stop-color="#ff007f"/><stop offset="0.662" stop-color="#fd004b"/><stop offset="0.903" stop-color="#f1001f"/><stop offset="0.994" stop-color="#e90015"/></linearGradient>
<linearGradient id="br120" gradientUnits="userSpaceOnUse" x1="958.5" y1="0" x2="1266.5" y2="0"><stop offset="0.000" stop-color="#0063ff"/><stop offset="0.097" stop-color="#0357ff"/><stop offset="0.234" stop-color="#7d41ff"/><stop offset="0.351" stop-color="#ff29fc"/><stop offset="0.416" stop-color="#ff13bc"/><stop offset="0.513" stop-color="#ff0080"/><stop offset="0.662" stop-color="#fd004c"/><stop offset="0.909" stop-color="#f1001f"/><stop offset="0.994" stop-color="#ea0015"/></linearGradient>
<linearGradient id="br121" gradientUnits="userSpaceOnUse" x1="958.5" y1="0" x2="1266.5" y2="0"><stop offset="0.000" stop-color="#0060ff"/><stop offset="0.091" stop-color="#0054ff"/><stop offset="0.227" stop-color="#773fff"/><stop offset="0.351" stop-color="#ff25fd"/><stop offset="0.416" stop-color="#ff10bc"/><stop offset="0.513" stop-color="#ff0081"/><stop offset="0.662" stop-color="#fd004d"/><stop offset="0.909" stop-color="#f10020"/><stop offset="0.994" stop-color="#ea0016"/></linearGradient>
<linearGradient id="br122" gradientUnits="userSpaceOnUse" x1="958.5" y1="0" x2="1266.5" y2="0"><stop offset="0.000" stop-color="#005dff"/><stop offset="0.091" stop-color="#0151ff"/><stop offset="0.234" stop-color="#7e3aff"/><stop offset="0.351" stop-color="#ff22fd"/><stop offset="0.416" stop-color="#ff0dbd"/><stop offset="0.506" stop-color="#ff0085"/><stop offset="0.656" stop-color="#fe004f"/><stop offset="0.896" stop-color="#f30022"/><stop offset="0.994" stop-color="#eb0017"/></linearGradient>
<linearGradient id="br123" gradientUnits="userSpaceOnUse" x1="958.5" y1="0" x2="1266.5" y2="0"><stop offset="0.000" stop-color="#005bff"/><stop offset="0.091" stop-color="#024eff"/><stop offset="0.234" stop-color="#7f37ff"/><stop offset="0.351" stop-color="#ff1efe"/><stop offset="0.416" stop-color="#ff0bbe"/><stop offset="0.494" stop-color="#ff008c"/><stop offset="0.630" stop-color="#fe0057"/><stop offset="0.857" stop-color="#f60028"/><stop offset="0.994" stop-color="#eb0017"/></linearGradient>
<linearGradient id="br124" gradientUnits="userSpaceOnUse" x1="958.5" y1="0" x2="1266.5" y2="0"><stop offset="0.000" stop-color="#0058ff"/><stop offset="0.091" stop-color="#044bff"/><stop offset="0.234" stop-color="#8034ff"/><stop offset="0.351" stop-color="#ff1bfe"/><stop offset="0.416" stop-color="#ff08be"/><stop offset="0.487" stop-color="#ff0090"/><stop offset="0.623" stop-color="#fe005a"/><stop offset="0.844" stop-color="#f7002b"/><stop offset="0.994" stop-color="#ec0018"/></linearGradient>
<linearGradient id="br125" gradientUnits="userSpaceOnUse" x1="958.5" y1="0" x2="1266.5" y2="0"><stop offset="0.000" stop-color="#0055ff"/><stop offset="0.084" stop-color="#0049ff"/><stop offset="0.227" stop-color="#7a32ff"/><stop offset="0.351" stop-color="#ff18fe"/><stop offset="0.416" stop-color="#ff06bf"/><stop offset="0.513" stop-color="#ff0084"/><stop offset="0.662" stop-color="#fe0050"/><stop offset="0.909" stop-color="#f30022"/><stop offset="0.994" stop-color="#ec0018"/></linearGradient>
<linearGradient id="br126" gradientUnits="userSpaceOnUse" x1="958.5" y1="0" x2="1266.5" y2="0"><stop offset="0.000" stop-color="#0052ff"/><stop offset="0.084" stop-color="#0246ff"/><stop offset="0.234" stop-color="#812dff"/><stop offset="0.351" stop-color="#ff14ff"/><stop offset="0.422" stop-color="#ff02bb"/><stop offset="0.526" stop-color="#ff007f"/><stop offset="0.688" stop-color="#fd004a"/><stop offset="0.948" stop-color="#f0001e"/><stop offset="0.994" stop-color="#ed0019"/></linearGradient>
<linearGradient id="br127" gradientUnits="userSpaceOnUse" x1="958.5" y1="0" x2="1266.5" y2="0"><stop offset="0.000" stop-color="#004fff"/><stop offset="0.084" stop-color="#0343ff"/><stop offset="0.234" stop-color="#822aff"/><stop offset="0.351" stop-color="#ff11ff"/><stop offset="0.422" stop-color="#ff00bb"/><stop offset="0.526" stop-color="#ff0080"/><stop offset="0.688" stop-color="#fd004b"/><stop offset="0.948" stop-color="#f1001f"/><stop offset="0.994" stop-color="#ed0019"/></linearGradient>
<linearGradient id="br128" gradientUnits="userSpaceOnUse" x1="958.5" y1="0" x2="1266.5" y2="0"><stop offset="0.000" stop-color="#004cff"/><stop offset="0.084" stop-color="#0440ff"/><stop offset="0.234" stop-color="#8227ff"/><stop offset="0.351" stop-color="#ff0eff"/><stop offset="0.422" stop-color="#ff00bc"/><stop offset="0.526" stop-color="#ff0081"/><stop offset="0.688" stop-color="#fd004c"/><stop offset="0.948" stop-color="#f1001f"/><stop offset="0.994" stop-color="#ed001a"/></linearGradient>
<linearGradient id="br129" gradientUnits="userSpaceOnUse" x1="958.5" y1="0" x2="1266.5" y2="0"><stop offset="0.000" stop-color="#004aff"/><stop offset="0.078" stop-color="#013fff"/><stop offset="0.227" stop-color="#7d25ff"/><stop offset="0.351" stop-color="#fe0bff"/><stop offset="0.416" stop-color="#ff00c2"/><stop offset="0.513" stop-color="#ff0087"/><stop offset="0.662" stop-color="#fe0053"/><stop offset="0.909" stop-color="#f40025"/><stop offset="0.994" stop-color="#ee001b"/></linearGradient>
<linearGradient id="br130" gradientUnits="userSpaceOnUse" x1="958.5" y1="0" x2="1266.5" y2="0"><stop offset="0.000" stop-color="#0047ff"/><stop offset="0.078" stop-color="#023cff"/><stop offset="0.227" stop-color="#7d22ff"/><stop offset="0.351" stop-color="#fe08ff"/><stop offset="0.416" stop-color="#ff00c2"/><stop offset="0.513" stop-color="#ff0088"/><stop offset="0.669" stop-color="#fe0052"/><stop offset="0.922" stop-color="#f30024"/><stop offset="0.994" stop-color="#ee001b"/></linearGradient>
<linearGradient id="br131" gradientUnits="userSpaceOnUse" x1="958.5" y1="0" x2="1266.5" y2="0"><stop offset="0.000" stop-color="#0044ff"/><stop offset="0.078" stop-color="#0439ff"/><stop offset="0.227" stop-color="#7e1fff"/><stop offset="0.351" stop-color="#fd05ff"/><stop offset="0.429" stop-color="#ff00b9"/><stop offset="0.532" stop-color="#ff0080"/><stop offset="0.695" stop-color="#fd004c"/><stop offset="0.961" stop-color="#f1001f"/><stop offset="0.994" stop-color="#ef001c"/></linearGradient>
<linearGradient id="br132" gradientUnits="userSpaceOnUse" x1="958.5" y1="0" x2="1266.5" y2="0"><stop offset="0.000" stop-color="#0042ff"/><stop offset="0.071" stop-color="#0037ff"/><stop offset="0.227" stop-color="#7f1cff"/><stop offset="0.351" stop-color="#fd02ff"/><stop offset="0.435" stop-color="#ff00b5"/><stop offset="0.545" stop-color="#ff007b"/><stop offset="0.721" stop-color="#fd0047"/><stop offset="0.994" stop-color="#ef001c"/></linearGradient>
<linearGradient id="br133" gradientUnits="userSpaceOnUse" x1="958.5" y1="0" x2="1266.5" y2="0"><stop offset="0.000" stop-color="#003fff"/><stop offset="0.071" stop-color="#0235ff"/><stop offset="0.227" stop-color="#7f1aff"/><stop offset="0.351" stop-color="#fd00ff"/><stop offset="0.435" stop-color="#ff00b6"/><stop offset="0.545" stop-color="#ff007c"/><stop offset="0.721" stop-color="#fd0048"/><stop offset="0.994" stop-color="#f0001d"/></linearGradient>
<linearGradient id="br134" gradientUnits="userSpaceOnUse" x1="958.5" y1="0" x2="1266.5" y2="0"><stop offset="0.000" stop-color="#003cff"/><stop offset="0.071" stop-color="#0332ff"/><stop offset="0.227" stop-color="#8017ff"/><stop offset="0.351" stop-color="#fc00ff"/><stop offset="0.435" stop-color="#ff00b7"/><stop offset="0.545" stop-color="#ff007d"/><stop offset="0.721" stop-color="#fd0048"/><stop offset="0.994" stop-color="#f0001e"/></linearGradient>
<linearGradient id="br135" gradientUnits="userSpaceOnUse" x1="958.5" y1="0" x2="1266.5" y2="0"><stop offset="0.000" stop-color="#003aff"/><stop offset="0.071" stop-color="#042fff"/><stop offset="0.227" stop-color="#8014ff"/><stop offset="0.344" stop-color="#f500ff"/><stop offset="0.364" stop-color="#ff00f4"/><stop offset="0.442" stop-color="#ff00b3"/><stop offset="0.558" stop-color="#ff0078"/><stop offset="0.740" stop-color="#fd0045"/><stop offset="0.994" stop-color="#f0001e"/></linearGradient>
<linearGradient id="br136" gradientUnits="userSpaceOnUse" x1="958.5" y1="0" x2="1266.5" y2="0"><stop offset="0.000" stop-color="#0037ff"/><stop offset="0.065" stop-color="#012eff"/><stop offset="0.221" stop-color="#7b13ff"/><stop offset="0.331" stop-color="#e700ff"/><stop offset="0.357" stop-color="#ff00fb"/><stop offset="0.435" stop-color="#ff00b8"/><stop offset="0.545" stop-color="#ff007e"/><stop offset="0.721" stop-color="#fd004a"/><stop offset="0.994" stop-color="#f1001f"/></linearGradient>
<linearGradient id="br137" gradientUnits="userSpaceOnUse" x1="958.5" y1="0" x2="1266.5" y2="0"><stop offset="0.000" stop-color="#0035ff"/><stop offset="0.065" stop-color="#022bff"/><stop offset="0.227" stop-color="#810fff"/><stop offset="0.325" stop-color="#e000ff"/><stop offset="0.357" stop-color="#ff00fb"/><stop offset="0.435" stop-color="#ff00b9"/><stop offset="0.545" stop-color="#ff007f"/><stop offset="0.721" stop-color="#fd004a"/><stop offset="0.994" stop-color="#f1001f"/></linearGradient>
<linearGradient id="br138" gradientUnits="userSpaceOnUse" x1="958.5" y1="0" x2="1266.5" y2="0"><stop offset="0.000" stop-color="#0032ff"/><stop offset="0.065" stop-color="#0329ff"/><stop offset="0.227" stop-color="#820cff"/><stop offset="0.312" stop-color="#d200ff"/><stop offset="0.357" stop-color="#ff00fc"/><stop offset="0.435" stop-color="#ff00b9"/><stop offset="0.545" stop-color="#ff0080"/><stop offset="0.721" stop-color="#fd004b"/><stop offset="0.994" stop-color="#f10020"/></linearGradient>
<linearGradient id="br139" gradientUnits="userSpaceOnUse" x1="958.5" y1="0" x2="1266.5" y2="0"><stop offset="0.000" stop-color="#0030ff"/><stop offset="0.065" stop-color="#0526ff"/><stop offset="0.227" stop-color="#8309ff"/><stop offset="0.305" stop-color="#cb00ff"/><stop offset="0.357" stop-color="#ff00fc"/><stop offset="0.435" stop-color="#ff00ba"/><stop offset="0.545" stop-color="#ff0080"/><stop offset="0.721" stop-color="#fd004c"/><stop offset="0.994" stop-color="#f20020"/></linearGradient>
<linearGradient id="br140" gradientUnits="userSpaceOnUse" x1="958.5" y1="0" x2="1266.5" y2="0"><stop offset="0.000" stop-color="#002eff"/><stop offset="0.058" stop-color="#0125ff"/><stop offset="0.221" stop-color="#7d08ff"/><stop offset="0.299" stop-color="#c500ff"/><stop offset="0.357" stop-color="#ff00fd"/><stop offset="0.435" stop-color="#ff00bb"/><stop offset="0.545" stop-color="#ff0081"/><stop offset="0.721" stop-color="#fd004c"/><stop offset="0.994" stop-color="#f20021"/></linearGradient>
<linearGradient id="br141" gradientUnits="userSpaceOnUse" x1="958.5" y1="0" x2="1266.5" y2="0"><stop offset="0.000" stop-color="#002bff"/><stop offset="0.058" stop-color="#0322ff"/><stop offset="0.221" stop-color="#7e06ff"/><stop offset="0.325" stop-color="#df00ff"/><stop offset="0.357" stop-color="#ff00fd"/><stop offset="0.435" stop-color="#ff00bb"/><stop offset="0.552" stop-color="#ff007f"/><stop offset="0.734" stop-color="#fd004a"/><stop offset="0.994" stop-color="#f20021"/></linearGradient>
<linearGradient id="br142" gradientUnits="userSpaceOnUse" x1="958.5" y1="0" x2="1266.5" y2="0"><stop offset="0.000" stop-color="#0029ff"/><stop offset="0.058" stop-color="#0420ff"/><stop offset="0.221" stop-color="#7f03ff"/><stop offset="0.357" stop-color="#ff00fd"/><stop offset="0.435" stop-color="#ff00bc"/><stop offset="0.552" stop-color="#ff0080"/><stop offset="0.734" stop-color="#fd004b"/><stop offset="0.994" stop-color="#f30022"/></linearGradient>
<linearGradient id="br143" gradientUnits="userSpaceOnUse" x1="958.5" y1="0" x2="1266.5" y2="0"><stop offset="0.000" stop-color="#0026ff"/><stop offset="0.058" stop-color="#051eff"/><stop offset="0.227" stop-color="#8500ff"/><stop offset="0.357" stop-color="#ff00fe"/><stop offset="0.435" stop-color="#ff00bc"/><stop offset="0.552" stop-color="#ff0080"/><stop offset="0.734" stop-color="#fd004c"/><stop offset="0.994" stop-color="#f30023"/></linearGradient>
<linearGradient id="br144" gradientUnits="userSpaceOnUse" x1="958.5" y1="0" x2="1266.5" y2="0"><stop offset="0.000" stop-color="#0024ff"/><stop offset="0.052" stop-color="#021cff"/><stop offset="0.221" stop-color="#8000ff"/><stop offset="0.357" stop-color="#ff00fe"/><stop offset="0.435" stop-color="#ff00bd"/><stop offset="0.552" stop-color="#ff0081"/><stop offset="0.734" stop-color="#fd004c"/><stop offset="0.994" stop-color="#f30023"/></linearGradient>
<linearGradient id="br145" gradientUnits="userSpaceOnUse" x1="958.5" y1="0" x2="1266.5" y2="0"><stop offset="0.000" stop-color="#0022ff"/><stop offset="0.052" stop-color="#031aff"/><stop offset="0.221" stop-color="#8000ff"/><stop offset="0.357" stop-color="#ff00fe"/><stop offset="0.435" stop-color="#ff00bd"/><stop offset="0.552" stop-color="#ff0082"/><stop offset="0.734" stop-color="#fd004d"/><stop offset="0.994" stop-color="#f40024"/></linearGradient>
<linearGradient id="br146" gradientUnits="userSpaceOnUse" x1="958.5" y1="0" x2="1266.5" y2="0"><stop offset="0.000" stop-color="#0020ff"/><stop offset="0.052" stop-color="#0418ff"/><stop offset="0.214" stop-color="#7b00ff"/><stop offset="0.357" stop-color="#ff00ff"/><stop offset="0.435" stop-color="#ff00be"/><stop offset="0.552" stop-color="#ff0082"/><stop offset="0.734" stop-color="#fe004e"/><stop offset="0.994" stop-color="#f40024"/></linearGradient>
<linearGradient id="br147" gradientUnits="userSpaceOnUse" x1="958.5" y1="0" x2="1266.5" y2="0"><stop offset="0.000" stop-color="#001dff"/><stop offset="0.045" stop-color="#0116ff"/><stop offset="0.201" stop-color="#7100ff"/><stop offset="0.344" stop-color="#f200ff"/><stop offset="0.357" stop-color="#ff00ff"/><stop offset="0.435" stop-color="#ff00bf"/><stop offset="0.552" stop-color="#ff0083"/><stop offset="0.734" stop-color="#fe004e"/><stop offset="0.994" stop-color="#f40025"/></linearGradient>
<linearGradient id="br148" gradientUnits="userSpaceOnUse" x1="958.5" y1="0" x2="1266.5" y2="0"><stop offset="0.000" stop-color="#001bff"/><stop offset="0.045" stop-color="#0314ff"/><stop offset="0.188" stop-color="#6800ff"/><stop offset="0.338" stop-color="#eb00ff"/><stop offset="0.357" stop-color="#ff00ff"/><stop offset="0.442" stop-color="#ff00bb"/><stop offset="0.558" stop-color="#ff0081"/><stop offset="0.747" stop-color="#fd004c"/><stop offset="0.994" stop-color="#f40025"/></linearGradient>
<linearGradient id="br149" gradientUnits="userSpaceOnUse" x1="958.5" y1="0" x2="1266.5" y2="0"><stop offset="0.000" stop-color="#0019ff"/><stop offset="0.045" stop-color="#0412ff"/><stop offset="0.175" stop-color="#5e00ff"/><stop offset="0.325" stop-color="#de00ff"/><stop offset="0.357" stop-color="#fe00ff"/><stop offset="0.442" stop-color="#ff00bc"/><stop offset="0.558" stop-color="#ff0082"/><stop offset="0.747" stop-color="#fd004d"/><stop offset="0.994" stop-color="#f50026"/></linearGradient>
<linearGradient id="br150" gradientUnits="userSpaceOnUse" x1="958.5" y1="0" x2="1266.5" y2="0"><stop offset="0.000" stop-color="#0017ff"/><stop offset="0.045" stop-color="#0510ff"/><stop offset="0.169" stop-color="#5a00ff"/><stop offset="0.325" stop-color="#de00ff"/><stop offset="0.357" stop-color="#fe00ff"/><stop offset="0.442" stop-color="#ff00bc"/><stop offset="0.565" stop-color="#ff0080"/><stop offset="0.753" stop-color="#fd004c"/><stop offset="0.994" stop-color="#f50026"/></linearGradient>
<linearGradient id="br151" gradientUnits="userSpaceOnUse" x1="958.5" y1="0" x2="1266.5" y2="0"><stop offset="0.000" stop-color="#0015ff"/><stop offset="0.039" stop-color="#020fff"/><stop offset="0.156" stop-color="#5100ff"/><stop offset="0.312" stop-color="#d200ff"/><stop offset="0.357" stop-color="#fe00ff"/><stop offset="0.448" stop-color="#ff00b9"/><stop offset="0.571" stop-color="#ff007e"/><stop offset="0.766" stop-color="#fd004a"/><stop offset="0.994" stop-color="#f50027"/></linearGradient>
<linearGradient id="br152" gradientUnits="userSpaceOnUse" x1="958.5" y1="0" x2="1266.5" y2="0"><stop offset="0.000" stop-color="#0013ff"/><stop offset="0.039" stop-color="#030dff"/><stop offset="0.149" stop-color="#4d00ff"/><stop offset="0.305" stop-color="#cc00ff"/><stop offset="0.357" stop-color="#fe00ff"/><stop offset="0.448" stop-color="#ff00b9"/><stop offset="0.571" stop-color="#ff007f"/><stop offset="0.766" stop-color="#fd004b"/><stop offset="0.994" stop-color="#f50028"/></linearGradient>
<linearGradient id="br153" gradientUnits="userSpaceOnUse" x1="958.5" y1="0" x2="1266.5" y2="0"><stop offset="0.000" stop-color="#0011ff"/><stop offset="0.039" stop-color="#040bff"/><stop offset="0.143" stop-color="#4900ff"/><stop offset="0.305" stop-color="#cc00ff"/><stop offset="0.357" stop-color="#fd00ff"/><stop offset="0.455" stop-color="#ff00b6"/><stop offset="0.584" stop-color="#ff007b"/><stop offset="0.786" stop-color="#fd0047"/><stop offset="0.994" stop-color="#f60028"/></linearGradient>
<linearGradient id="br154" gradientUnits="userSpaceOnUse" x1="958.5" y1="0" x2="1266.5" y2="0"><stop offset="0.000" stop-color="#000fff"/><stop offset="0.039" stop-color="#0508ff"/><stop offset="0.136" stop-color="#4600ff"/><stop offset="0.299" stop-color="#c600ff"/><stop offset="0.364" stop-color="#ff00fb"/><stop offset="0.448" stop-color="#ff00ba"/><stop offset="0.571" stop-color="#ff0080"/><stop offset="0.766" stop-color="#fd004c"/><stop offset="0.994" stop-color="#f60029"/></linearGradient>
<linearGradient id="br155" gradientUnits="userSpaceOnUse" x1="958.5" y1="0" x2="1266.5" y2="0"><stop offset="0.000" stop-color="#000dff"/><stop offset="0.032" stop-color="#0207ff"/><stop offset="0.130" stop-color="#4200ff"/><stop offset="0.292" stop-color="#c100ff"/><stop offset="0.364" stop-color="#ff00fb"/><stop offset="0.448" stop-color="#ff00bb"/><stop offset="0.571" stop-color="#ff0081"/><stop offset="0.766" stop-color="#fd004c"/><stop offset="0.994" stop-color="#f60029"/></linearGradient>
<linearGradient id="br156" gradientUnits="userSpaceOnUse" x1="958.5" y1="0" x2="1266.5" y2="0"><stop offset="0.000" stop-color="#000bff"/><stop offset="0.032" stop-color="#0405ff"/><stop offset="0.162" stop-color="#5a00ff"/><stop offset="0.325" stop-color="#de00ff"/><stop offset="0.364" stop-color="#ff00fb"/><stop offset="0.448" stop-color="#ff00bb"/><stop offset="0.571" stop-color="#ff0081"/><stop offset="0.766" stop-color="#fd004d"/><stop offset="0.994" stop-color="#f6002a"/></linearGradient>
<linearGradient id="br157" gradientUnits="userSpaceOnUse" x1="958.5" y1="0" x2="1266.5" y2="0"><stop offset="0.000" stop-color="#0009ff"/><stop offset="0.032" stop-color="#0503ff"/><stop offset="0.214" stop-color="#8100ff"/><stop offset="0.364" stop-color="#ff00fc"/><stop offset="0.448" stop-color="#ff00bc"/><stop offset="0.571" stop-color="#ff0082"/><stop offset="0.766" stop-color="#fe004e"/><stop offset="0.994" stop-color="#f6002a"/></linearGradient>
<linearGradient id="br158" gradientUnits="userSpaceOnUse" x1="958.5" y1="0" x2="1266.5" y2="0"><stop offset="0.000" stop-color="#0007ff"/><stop offset="0.032" stop-color="#0601ff"/><stop offset="0.214" stop-color="#8200ff"/><stop offset="0.364" stop-color="#ff00fc"/><stop offset="0.455" stop-color="#ff00b9"/><stop offset="0.584" stop-color="#ff007e"/><stop offset="0.786" stop-color="#fd004a"/><stop offset="0.994" stop-color="#f7002b"/></linearGradient>
<linearGradient id="br159" gradientUnits="userSpaceOnUse" x1="958.5" y1="0" x2="1266.5" y2="0"><stop offset="0.000" stop-color="#0005ff"/><stop offset="0.026" stop-color="#0300ff"/><stop offset="0.214" stop-color="#8200ff"/><stop offset="0.364" stop-color="#ff00fc"/><stop offset="0.455" stop-color="#ff00b9"/><stop offset="0.584" stop-color="#ff007f"/><stop offset="0.786" stop-color="#fd004b"/><stop offset="0.994" stop-color="#f7002b"/></linearGradient>
<linearGradient id="br160" gradientUnits="userSpaceOnUse" x1="958.5" y1="0" x2="1266.5" y2="0"><stop offset="0.000" stop-color="#0003ff"/><stop offset="0.026" stop-color="#0400ff"/><stop offset="0.214" stop-color="#8300ff"/><stop offset="0.364" stop-color="#ff00fd"/><stop offset="0.455" stop-color="#ff00ba"/><stop offset="0.584" stop-color="#ff007f"/><stop offset="0.786" stop-color="#fd004b"/><stop offset="0.994" stop-color="#f7002c"/></linearGradient>
<linearGradient id="br161" gradientUnits="userSpaceOnUse" x1="958.5" y1="0" x2="1266.5" y2="0"><stop offset="0.000" stop-color="#0001ff"/><stop offset="0.026" stop-color="#0500ff"/><stop offset="0.214" stop-color="#8300ff"/><stop offset="0.364" stop-color="#ff00fd"/><stop offset="0.455" stop-color="#ff00ba"/><stop offset="0.584" stop-color="#ff0080"/><stop offset="0.786" stop-color="#fd004c"/><stop offset="0.994" stop-color="#f7002c"/></linearGradient>
<linearGradient id="br162" gradientUnits="userSpaceOnUse" x1="958.5" y1="0" x2="1266.5" y2="0"><stop offset="0.000" stop-color="#0000ff"/><stop offset="0.026" stop-color="#0600ff"/><stop offset="0.214" stop-color="#8300ff"/><stop offset="0.364" stop-color="#ff00fd"/><stop offset="0.455" stop-color="#ff00bb"/><stop offset="0.584" stop-color="#ff0080"/><stop offset="0.792" stop-color="#fd004b"/><stop offset="0.994" stop-color="#f7002d"/></linearGradient>
<linearGradient id="br163" gradientUnits="userSpaceOnUse" x1="958.5" y1="0" x2="1266.5" y2="0"><stop offset="0.000" stop-color="#0000ff"/><stop offset="0.026" stop-color="#0700ff"/><stop offset="0.214" stop-color="#8400ff"/><stop offset="0.364" stop-color="#ff00fe"/><stop offset="0.455" stop-color="#ff00bb"/><stop offset="0.584" stop-color="#ff0081"/><stop offset="0.792" stop-color="#fd004c"/><stop offset="0.994" stop-color="#f8002d"/></linearGradient>
</defs>
<text x="1116" y="233.5" font-size="12" fill="#dcdcdc" text-anchor="middle" font-weight="normal" font-style="normal" textLength="66" lengthAdjust="spacingAndGlyphs">CIE 1931 xy</text>
<rect x="876.5" y="238.5" width="502" height="490" fill="#232323" stroke="#a9a9a9" stroke-width="1.2"/>
<g clip-path="url(#hs)"><rect x="874.5" y="238.00" width="446.0" height="2" shape-rendering="crispEdges" fill="url(#dim0)"/><rect x="874.5" y="240.00" width="446.0" height="2" shape-rendering="crispEdges" fill="url(#dim1)"/><rect x="874.5" y="242.00" width="446.0" height="2" shape-rendering="crispEdges" fill="url(#dim2)"/><rect x="874.5" y="244.00" width="446.0" height="2" shape-rendering="crispEdges" fill="url(#dim3)"/><rect x="874.5" y="246.00" width="446.0" height="2" shape-rendering="crispEdges" fill="url(#dim4)"/><rect x="874.5" y="248.00" width="446.0" height="2" shape-rendering="crispEdges" fill="url(#dim5)"/><rect x="874.5" y="250.00" width="446.0" height="2" shape-rendering="crispEdges" fill="url(#dim6)"/><rect x="874.5" y="252.00" width="446.0" height="2" shape-rendering="crispEdges" fill="url(#dim7)"/><rect x="874.5" y="254.00" width="446.0" height="2" shape-rendering="crispEdges" fill="url(#dim8)"/><rect x="874.5" y="256.00" width="446.0" height="2" shape-rendering="crispEdges" fill="url(#dim9)"/><rect x="874.5" y="258.00" width="446.0" height="2" shape-rendering="crispEdges" fill="url(#dim10)"/><rect x="874.5" y="260.00" width="446.0" height="2" shape-rendering="crispEdges" fill="url(#dim11)"/><rect x="874.5" y="262.00" width="446.0" height="2" shape-rendering="crispEdges" fill="url(#dim12)"/><rect x="874.5" y="264.00" width="446.0" height="2" shape-rendering="crispEdges" fill="url(#dim13)"/><rect x="874.5" y="266.00" width="446.0" height="2" shape-rendering="crispEdges" fill="url(#dim14)"/><rect x="874.5" y="268.00" width="446.0" height="2" shape-rendering="crispEdges" fill="url(#dim15)"/><rect x="874.5" y="270.00" width="446.0" height="2" shape-rendering="crispEdges" fill="url(#dim16)"/><rect x="874.5" y="272.00" width="446.0" height="2" shape-rendering="crispEdges" fill="url(#dim17)"/><rect x="874.5" y="274.00" width="446.0" height="2" shape-rendering="crispEdges" fill="url(#dim18)"/><rect x="874.5" y="276.00" width="446.0" height="2" shape-rendering="crispEdges" fill="url(#dim19)"/><rect x="874.5" y="278.00" width="446.0" height="2" shape-rendering="crispEdges" fill="url(#dim20)"/><rect x="874.5" y="280.00" width="446.0" height="2" shape-rendering="crispEdges" fill="url(#dim21)"/><rect x="874.5" y="282.00" width="446.0" height="2" shape-rendering="crispEdges" fill="url(#dim22)"/><rect x="874.5" y="284.00" width="446.0" height="2" shape-rendering="crispEdges" fill="url(#dim23)"/><rect x="874.5" y="286.00" width="446.0" height="2" shape-rendering="crispEdges" fill="url(#dim24)"/><rect x="874.5" y="288.00" width="446.0" height="2" shape-rendering="crispEdges" fill="url(#dim25)"/><rect x="874.5" y="290.00" width="446.0" height="2" shape-rendering="crispEdges" fill="url(#dim26)"/><rect x="874.5" y="292.00" width="446.0" height="2" shape-rendering="crispEdges" fill="url(#dim27)"/><rect x="874.5" y="294.00" width="446.0" height="2" shape-rendering="crispEdges" fill="url(#dim28)"/><rect x="874.5" y="296.00" width="446.0" height="2" shape-rendering="crispEdges" fill="url(#dim29)"/><rect x="874.5" y="298.00" width="446.0" height="2" shape-rendering="crispEdges" fill="url(#dim30)"/><rect x="874.5" y="300.00" width="446.0" height="2" shape-rendering="crispEdges" fill="url(#dim31)"/><rect x="874.5" y="302.00" width="446.0" height="2" shape-rendering="crispEdges" fill="url(#dim32)"/><rect x="874.5" y="304.00" width="446.0" height="2" shape-rendering="crispEdges" fill="url(#dim33)"/><rect x="874.5" y="306.00" width="446.0" height="2" shape-rendering="crispEdges" fill="url(#dim34)"/><rect x="874.5" y="308.00" width="446.0" height="2" shape-rendering="crispEdges" fill="url(#dim35)"/><rect x="874.5" y="310.00" width="446.0" height="2" shape-rendering="crispEdges" fill="url(#dim36)"/><rect x="874.5" y="312.00" width="446.0" height="2" shape-rendering="crispEdges" fill="url(#dim37)"/><rect x="874.5" y="314.00" width="446.0" height="2" shape-rendering="crispEdges" fill="url(#dim38)"/><rect x="874.5" y="316.00" width="446.0" height="2" shape-rendering="crispEdges" fill="url(#dim39)"/><rect x="874.5" y="318.00" width="446.0" height="2" shape-rendering="crispEdges" fill="url(#dim40)"/><rect x="874.5" y="320.00" width="446.0" height="2" shape-rendering="crispEdges" fill="url(#dim41)"/><rect x="874.5" y="322.00" width="446.0" height="2" shape-rendering="crispEdges" fill="url(#dim42)"/><rect x="874.5" y="324.00" width="446.0" height="2" shape-rendering="crispEdges" fill="url(#dim43)"/><rect x="874.5" y="326.00" width="446.0" height="2" shape-rendering="crispEdges" fill="url(#dim44)"/><rect x="874.5" y="328.00" width="446.0" height="2" shape-rendering="crispEdges" fill="url(#dim45)"/><rect x="874.5" y="330.00" width="446.0" height="2" shape-rendering="crispEdges" fill="url(#dim46)"/><rect x="874.5" y="332.00" width="446.0" height="2" shape-rendering="crispEdges" fill="url(#dim47)"/><rect x="874.5" y="334.00" width="446.0" height="2" shape-rendering="crispEdges" fill="url(#dim48)"/><rect x="874.5" y="336.00" width="446.0" height="2" shape-rendering="crispEdges" fill="url(#dim49)"/><rect x="874.5" y="338.00" width="446.0" height="2" shape-rendering="crispEdges" fill="url(#dim50)"/><rect x="874.5" y="340.00" width="446.0" height="2" shape-rendering="crispEdges" fill="url(#dim51)"/><rect x="874.5" y="342.00" width="446.0" height="2" shape-rendering="crispEdges" fill="url(#dim52)"/><rect x="874.5" y="344.00" width="446.0" height="2" shape-rendering="crispEdges" fill="url(#dim53)"/><rect x="874.5" y="346.00" width="446.0" height="2" shape-rendering="crispEdges" fill="url(#dim54)"/><rect x="874.5" y="348.00" width="446.0" height="2" shape-rendering="crispEdges" fill="url(#dim55)"/><rect x="874.5" y="350.00" width="446.0" height="2" shape-rendering="crispEdges" fill="url(#dim56)"/><rect x="874.5" y="352.00" width="446.0" height="2" shape-rendering="crispEdges" fill="url(#dim57)"/><rect x="874.5" y="354.00" width="446.0" height="2" shape-rendering="crispEdges" fill="url(#dim58)"/><rect x="874.5" y="356.00" width="446.0" height="2" shape-rendering="crispEdges" fill="url(#dim59)"/><rect x="874.5" y="358.00" width="446.0" height="2" shape-rendering="crispEdges" fill="url(#dim60)"/><rect x="874.5" y="360.00" width="446.0" height="2" shape-rendering="crispEdges" fill="url(#dim61)"/><rect x="874.5" y="362.00" width="446.0" height="2" shape-rendering="crispEdges" fill="url(#dim62)"/><rect x="874.5" y="364.00" width="446.0" height="2" shape-rendering="crispEdges" fill="url(#dim63)"/><rect x="874.5" y="366.00" width="446.0" height="2" shape-rendering="crispEdges" fill="url(#dim64)"/><rect x="874.5" y="368.00" width="446.0" height="2" shape-rendering="crispEdges" fill="url(#dim65)"/><rect x="874.5" y="370.00" width="446.0" height="2" shape-rendering="crispEdges" fill="url(#dim66)"/><rect x="874.5" y="372.00" width="446.0" height="2" shape-rendering="crispEdges" fill="url(#dim67)"/><rect x="874.5" y="374.00" width="446.0" height="2" shape-rendering="crispEdges" fill="url(#dim68)"/><rect x="874.5" y="376.00" width="446.0" height="2" shape-rendering="crispEdges" fill="url(#dim69)"/><rect x="874.5" y="378.00" width="446.0" height="2" shape-rendering="crispEdges" fill="url(#dim70)"/><rect x="874.5" y="380.00" width="446.0" height="2" shape-rendering="crispEdges" fill="url(#dim71)"/><rect x="874.5" y="382.00" width="446.0" height="2" shape-rendering="crispEdges" fill="url(#dim72)"/><rect x="874.5" y="384.00" width="446.0" height="2" shape-rendering="crispEdges" fill="url(#dim73)"/><rect x="874.5" y="386.00" width="446.0" height="2" shape-rendering="crispEdges" fill="url(#dim74)"/><rect x="874.5" y="388.00" width="446.0" height="2" shape-rendering="crispEdges" fill="url(#dim75)"/><rect x="874.5" y="390.00" width="446.0" height="2" shape-rendering="crispEdges" fill="url(#dim76)"/><rect x="874.5" y="392.00" width="446.0" height="2" shape-rendering="crispEdges" fill="url(#dim77)"/><rect x="874.5" y="394.00" width="446.0" height="2" shape-rendering="crispEdges" fill="url(#dim78)"/><rect x="874.5" y="396.00" width="446.0" height="2" shape-rendering="crispEdges" fill="url(#dim79)"/><rect x="874.5" y="398.00" width="446.0" height="2" shape-rendering="crispEdges" fill="url(#dim80)"/><rect x="874.5" y="400.00" width="446.0" height="2" shape-rendering="crispEdges" fill="url(#dim81)"/><rect x="874.5" y="402.00" width="446.0" height="2" shape-rendering="crispEdges" fill="url(#dim82)"/><rect x="874.5" y="404.00" width="446.0" height="2" shape-rendering="crispEdges" fill="url(#dim83)"/><rect x="874.5" y="406.00" width="446.0" height="2" shape-rendering="crispEdges" fill="url(#dim84)"/><rect x="874.5" y="408.00" width="446.0" height="2" shape-rendering="crispEdges" fill="url(#dim85)"/><rect x="874.5" y="410.00" width="446.0" height="2" shape-rendering="crispEdges" fill="url(#dim86)"/><rect x="874.5" y="412.00" width="446.0" height="2" shape-rendering="crispEdges" fill="url(#dim87)"/><rect x="874.5" y="414.00" width="446.0" height="2" shape-rendering="crispEdges" fill="url(#dim88)"/><rect x="874.5" y="416.00" width="446.0" height="2" shape-rendering="crispEdges" fill="url(#dim89)"/><rect x="874.5" y="418.00" width="446.0" height="2" shape-rendering="crispEdges" fill="url(#dim90)"/><rect x="874.5" y="420.00" width="446.0" height="2" shape-rendering="crispEdges" fill="url(#dim91)"/><rect x="874.5" y="422.00" width="446.0" height="2" shape-rendering="crispEdges" fill="url(#dim92)"/><rect x="874.5" y="424.00" width="446.0" height="2" shape-rendering="crispEdges" fill="url(#dim93)"/><rect x="874.5" y="426.00" width="446.0" height="2" shape-rendering="crispEdges" fill="url(#dim94)"/><rect x="874.5" y="428.00" width="446.0" height="2" shape-rendering="crispEdges" fill="url(#dim95)"/><rect x="874.5" y="430.00" width="446.0" height="2" shape-rendering="crispEdges" fill="url(#dim96)"/><rect x="874.5" y="432.00" width="446.0" height="2" shape-rendering="crispEdges" fill="url(#dim97)"/><rect x="874.5" y="434.00" width="446.0" height="2" shape-rendering="crispEdges" fill="url(#dim98)"/><rect x="874.5" y="436.00" width="446.0" height="2" shape-rendering="crispEdges" fill="url(#dim99)"/><rect x="874.5" y="438.00" width="446.0" height="2" shape-rendering="crispEdges" fill="url(#dim100)"/><rect x="874.5" y="440.00" width="446.0" height="2" shape-rendering="crispEdges" fill="url(#dim101)"/><rect x="874.5" y="442.00" width="446.0" height="2" shape-rendering="crispEdges" fill="url(#dim102)"/><rect x="874.5" y="444.00" width="446.0" height="2" shape-rendering="crispEdges" fill="url(#dim103)"/><rect x="874.5" y="446.00" width="446.0" height="2" shape-rendering="crispEdges" fill="url(#dim104)"/><rect x="874.5" y="448.00" width="446.0" height="2" shape-rendering="crispEdges" fill="url(#dim105)"/><rect x="874.5" y="450.00" width="446.0" height="2" shape-rendering="crispEdges" fill="url(#dim106)"/><rect x="874.5" y="452.00" width="446.0" height="2" shape-rendering="crispEdges" fill="url(#dim107)"/><rect x="874.5" y="454.00" width="446.0" height="2" shape-rendering="crispEdges" fill="url(#dim108)"/><rect x="874.5" y="456.00" width="446.0" height="2" shape-rendering="crispEdges" fill="url(#dim109)"/><rect x="874.5" y="458.00" width="446.0" height="2" shape-rendering="crispEdges" fill="url(#dim110)"/><rect x="874.5" y="460.00" width="446.0" height="2" shape-rendering="crispEdges" fill="url(#dim111)"/><rect x="874.5" y="462.00" width="446.0" height="2" shape-rendering="crispEdges" fill="url(#dim112)"/><rect x="874.5" y="464.00" width="446.0" height="2" shape-rendering="crispEdges" fill="url(#dim113)"/><rect x="874.5" y="466.00" width="446.0" height="2" shape-rendering="crispEdges" fill="url(#dim114)"/><rect x="874.5" y="468.00" width="446.0" height="2" shape-rendering="crispEdges" fill="url(#dim115)"/><rect x="874.5" y="470.00" width="446.0" height="2" shape-rendering="crispEdges" fill="url(#dim116)"/><rect x="874.5" y="472.00" width="446.0" height="2" shape-rendering="crispEdges" fill="url(#dim117)"/><rect x="874.5" y="474.00" width="446.0" height="2" shape-rendering="crispEdges" fill="url(#dim118)"/><rect x="874.5" y="476.00" width="446.0" height="2" shape-rendering="crispEdges" fill="url(#dim119)"/><rect x="874.5" y="478.00" width="446.0" height="2" shape-rendering="crispEdges" fill="url(#dim120)"/><rect x="874.5" y="480.00" width="446.0" height="2" shape-rendering="crispEdges" fill="url(#dim121)"/><rect x="874.5" y="482.00" width="446.0" height="2" shape-rendering="crispEdges" fill="url(#dim122)"/><rect x="874.5" y="484.00" width="446.0" height="2" shape-rendering="crispEdges" fill="url(#dim123)"/><rect x="874.5" y="486.00" width="446.0" height="2" shape-rendering="crispEdges" fill="url(#dim124)"/><rect x="874.5" y="488.00" width="446.0" height="2" shape-rendering="crispEdges" fill="url(#dim125)"/><rect x="874.5" y="490.00" width="446.0" height="2" shape-rendering="crispEdges" fill="url(#dim126)"/><rect x="874.5" y="492.00" width="446.0" height="2" shape-rendering="crispEdges" fill="url(#dim127)"/><rect x="874.5" y="494.00" width="446.0" height="2" shape-rendering="crispEdges" fill="url(#dim128)"/><rect x="874.5" y="496.00" width="446.0" height="2" shape-rendering="crispEdges" fill="url(#dim129)"/><rect x="874.5" y="498.00" width="446.0" height="2" shape-rendering="crispEdges" fill="url(#dim130)"/><rect x="874.5" y="500.00" width="446.0" height="2" shape-rendering="crispEdges" fill="url(#dim131)"/><rect x="874.5" y="502.00" width="446.0" height="2" shape-rendering="crispEdges" fill="url(#dim132)"/><rect x="874.5" y="504.00" width="446.0" height="2" shape-rendering="crispEdges" fill="url(#dim133)"/><rect x="874.5" y="506.00" width="446.0" height="2" shape-rendering="crispEdges" fill="url(#dim134)"/><rect x="874.5" y="508.00" width="446.0" height="2" shape-rendering="crispEdges" fill="url(#dim135)"/><rect x="874.5" y="510.00" width="446.0" height="2" shape-rendering="crispEdges" fill="url(#dim136)"/><rect x="874.5" y="512.00" width="446.0" height="2" shape-rendering="crispEdges" fill="url(#dim137)"/><rect x="874.5" y="514.00" width="446.0" height="2" shape-rendering="crispEdges" fill="url(#dim138)"/><rect x="874.5" y="516.00" width="446.0" height="2" shape-rendering="crispEdges" fill="url(#dim139)"/><rect x="874.5" y="518.00" width="446.0" height="2" shape-rendering="crispEdges" fill="url(#dim140)"/><rect x="874.5" y="520.00" width="446.0" height="2" shape-rendering="crispEdges" fill="url(#dim141)"/><rect x="874.5" y="522.00" width="446.0" height="2" shape-rendering="crispEdges" fill="url(#dim142)"/><rect x="874.5" y="524.00" width="446.0" height="2" shape-rendering="crispEdges" fill="url(#dim143)"/><rect x="874.5" y="526.00" width="446.0" height="2" shape-rendering="crispEdges" fill="url(#dim144)"/><rect x="874.5" y="528.00" width="446.0" height="2" shape-rendering="crispEdges" fill="url(#dim145)"/><rect x="874.5" y="530.00" width="446.0" height="2" shape-rendering="crispEdges" fill="url(#dim146)"/><rect x="874.5" y="532.00" width="446.0" height="2" shape-rendering="crispEdges" fill="url(#dim147)"/><rect x="874.5" y="534.00" width="446.0" height="2" shape-rendering="crispEdges" fill="url(#dim148)"/><rect x="874.5" y="536.00" width="446.0" height="2" shape-rendering="crispEdges" fill="url(#dim149)"/><rect x="874.5" y="538.00" width="446.0" height="2" shape-rendering="crispEdges" fill="url(#dim150)"/><rect x="874.5" y="540.00" width="446.0" height="2" shape-rendering="crispEdges" fill="url(#dim151)"/><rect x="874.5" y="542.00" width="446.0" height="2" shape-rendering="crispEdges" fill="url(#dim152)"/><rect x="874.5" y="544.00" width="446.0" height="2" shape-rendering="crispEdges" fill="url(#dim153)"/><rect x="874.5" y="546.00" width="446.0" height="2" shape-rendering="crispEdges" fill="url(#dim154)"/><rect x="874.5" y="548.00" width="446.0" height="2" shape-rendering="crispEdges" fill="url(#dim155)"/><rect x="874.5" y="550.00" width="446.0" height="2" shape-rendering="crispEdges" fill="url(#dim156)"/><rect x="874.5" y="552.00" width="446.0" height="2" shape-rendering="crispEdges" fill="url(#dim157)"/><rect x="874.5" y="554.00" width="446.0" height="2" shape-rendering="crispEdges" fill="url(#dim158)"/><rect x="874.5" y="556.00" width="446.0" height="2" shape-rendering="crispEdges" fill="url(#dim159)"/><rect x="874.5" y="558.00" width="446.0" height="2" shape-rendering="crispEdges" fill="url(#dim160)"/><rect x="874.5" y="560.00" width="446.0" height="2" shape-rendering="crispEdges" fill="url(#dim161)"/><rect x="874.5" y="562.00" width="446.0" height="2" shape-rendering="crispEdges" fill="url(#dim162)"/><rect x="874.5" y="564.00" width="446.0" height="2" shape-rendering="crispEdges" fill="url(#dim163)"/><rect x="874.5" y="566.00" width="446.0" height="2" shape-rendering="crispEdges" fill="url(#dim164)"/><rect x="874.5" y="568.00" width="446.0" height="2" shape-rendering="crispEdges" fill="url(#dim165)"/><rect x="874.5" y="570.00" width="446.0" height="2" shape-rendering="crispEdges" fill="url(#dim166)"/><rect x="874.5" y="572.00" width="446.0" height="2" shape-rendering="crispEdges" fill="url(#dim167)"/><rect x="874.5" y="574.00" width="446.0" height="2" shape-rendering="crispEdges" fill="url(#dim168)"/><rect x="874.5" y="576.00" width="446.0" height="2" shape-rendering="crispEdges" fill="url(#dim169)"/><rect x="874.5" y="578.00" width="446.0" height="2" shape-rendering="crispEdges" fill="url(#dim170)"/><rect x="874.5" y="580.00" width="446.0" height="2" shape-rendering="crispEdges" fill="url(#dim171)"/><rect x="874.5" y="582.00" width="446.0" height="2" shape-rendering="crispEdges" fill="url(#dim172)"/><rect x="874.5" y="584.00" width="446.0" height="2" shape-rendering="crispEdges" fill="url(#dim173)"/><rect x="874.5" y="586.00" width="446.0" height="2" shape-rendering="crispEdges" fill="url(#dim174)"/><rect x="874.5" y="588.00" width="446.0" height="2" shape-rendering="crispEdges" fill="url(#dim175)"/><rect x="874.5" y="590.00" width="446.0" height="2" shape-rendering="crispEdges" fill="url(#dim176)"/><rect x="874.5" y="592.00" width="446.0" height="2" shape-rendering="crispEdges" fill="url(#dim177)"/><rect x="874.5" y="594.00" width="446.0" height="2" shape-rendering="crispEdges" fill="url(#dim178)"/><rect x="874.5" y="596.00" width="446.0" height="2" shape-rendering="crispEdges" fill="url(#dim179)"/><rect x="874.5" y="598.00" width="446.0" height="2" shape-rendering="crispEdges" fill="url(#dim180)"/><rect x="874.5" y="600.00" width="446.0" height="2" shape-rendering="crispEdges" fill="url(#dim181)"/><rect x="874.5" y="602.00" width="446.0" height="2" shape-rendering="crispEdges" fill="url(#dim182)"/><rect x="874.5" y="604.00" width="446.0" height="2" shape-rendering="crispEdges" fill="url(#dim183)"/><rect x="874.5" y="606.00" width="446.0" height="2" shape-rendering="crispEdges" fill="url(#dim184)"/><rect x="874.5" y="608.00" width="446.0" height="2" shape-rendering="crispEdges" fill="url(#dim185)"/><rect x="874.5" y="610.00" width="446.0" height="2" shape-rendering="crispEdges" fill="url(#dim186)"/><rect x="874.5" y="612.00" width="446.0" height="2" shape-rendering="crispEdges" fill="url(#dim187)"/><rect x="874.5" y="614.00" width="446.0" height="2" shape-rendering="crispEdges" fill="url(#dim188)"/><rect x="874.5" y="616.00" width="446.0" height="2" shape-rendering="crispEdges" fill="url(#dim189)"/><rect x="874.5" y="618.00" width="446.0" height="2" shape-rendering="crispEdges" fill="url(#dim190)"/><rect x="874.5" y="620.00" width="446.0" height="2" shape-rendering="crispEdges" fill="url(#dim191)"/><rect x="874.5" y="622.00" width="446.0" height="2" shape-rendering="crispEdges" fill="url(#dim192)"/><rect x="874.5" y="624.00" width="446.0" height="2" shape-rendering="crispEdges" fill="url(#dim193)"/><rect x="874.5" y="626.00" width="446.0" height="2" shape-rendering="crispEdges" fill="url(#dim194)"/><rect x="874.5" y="628.00" width="446.0" height="2" shape-rendering="crispEdges" fill="url(#dim195)"/><rect x="874.5" y="630.00" width="446.0" height="2" shape-rendering="crispEdges" fill="url(#dim196)"/><rect x="874.5" y="632.00" width="446.0" height="2" shape-rendering="crispEdges" fill="url(#dim197)"/><rect x="874.5" y="634.00" width="446.0" height="2" shape-rendering="crispEdges" fill="url(#dim198)"/><rect x="874.5" y="636.00" width="446.0" height="2" shape-rendering="crispEdges" fill="url(#dim199)"/><rect x="874.5" y="638.00" width="446.0" height="2" shape-rendering="crispEdges" fill="url(#dim200)"/><rect x="874.5" y="640.00" width="446.0" height="2" shape-rendering="crispEdges" fill="url(#dim201)"/><rect x="874.5" y="642.00" width="446.0" height="2" shape-rendering="crispEdges" fill="url(#dim202)"/><rect x="874.5" y="644.00" width="446.0" height="2" shape-rendering="crispEdges" fill="url(#dim203)"/><rect x="874.5" y="646.00" width="446.0" height="2" shape-rendering="crispEdges" fill="url(#dim204)"/><rect x="874.5" y="648.00" width="446.0" height="2" shape-rendering="crispEdges" fill="url(#dim205)"/><rect x="874.5" y="650.00" width="446.0" height="2" shape-rendering="crispEdges" fill="url(#dim206)"/><rect x="874.5" y="652.00" width="446.0" height="2" shape-rendering="crispEdges" fill="url(#dim207)"/><rect x="874.5" y="654.00" width="446.0" height="2" shape-rendering="crispEdges" fill="url(#dim208)"/><rect x="874.5" y="656.00" width="446.0" height="2" shape-rendering="crispEdges" fill="url(#dim209)"/><rect x="874.5" y="658.00" width="446.0" height="2" shape-rendering="crispEdges" fill="url(#dim210)"/><rect x="874.5" y="660.00" width="446.0" height="2" shape-rendering="crispEdges" fill="url(#dim211)"/><rect x="874.5" y="662.00" width="446.0" height="2" shape-rendering="crispEdges" fill="url(#dim212)"/><rect x="874.5" y="664.00" width="446.0" height="2" shape-rendering="crispEdges" fill="url(#dim213)"/><rect x="874.5" y="666.00" width="446.0" height="2" shape-rendering="crispEdges" fill="url(#dim214)"/><rect x="874.5" y="668.00" width="446.0" height="2" shape-rendering="crispEdges" fill="url(#dim215)"/><rect x="874.5" y="670.00" width="446.0" height="2" shape-rendering="crispEdges" fill="url(#dim216)"/><rect x="874.5" y="672.00" width="446.0" height="2" shape-rendering="crispEdges" fill="url(#dim217)"/><rect x="874.5" y="674.00" width="446.0" height="2" shape-rendering="crispEdges" fill="url(#dim218)"/><rect x="874.5" y="676.00" width="446.0" height="2" shape-rendering="crispEdges" fill="url(#dim219)"/><rect x="874.5" y="678.00" width="446.0" height="2" shape-rendering="crispEdges" fill="url(#dim220)"/><rect x="874.5" y="680.00" width="446.0" height="2" shape-rendering="crispEdges" fill="url(#dim221)"/><rect x="874.5" y="682.00" width="446.0" height="2" shape-rendering="crispEdges" fill="url(#dim222)"/><rect x="874.5" y="684.00" width="446.0" height="2" shape-rendering="crispEdges" fill="url(#dim223)"/><rect x="874.5" y="686.00" width="446.0" height="2" shape-rendering="crispEdges" fill="url(#dim224)"/><rect x="874.5" y="688.00" width="446.0" height="2" shape-rendering="crispEdges" fill="url(#dim225)"/><rect x="874.5" y="690.00" width="446.0" height="2" shape-rendering="crispEdges" fill="url(#dim226)"/><rect x="874.5" y="692.00" width="446.0" height="2" shape-rendering="crispEdges" fill="url(#dim227)"/><rect x="874.5" y="694.00" width="446.0" height="2" shape-rendering="crispEdges" fill="url(#dim228)"/><rect x="874.5" y="696.00" width="446.0" height="2" shape-rendering="crispEdges" fill="url(#dim229)"/><rect x="874.5" y="698.00" width="446.0" height="2" shape-rendering="crispEdges" fill="url(#dim230)"/><rect x="874.5" y="700.00" width="446.0" height="2" shape-rendering="crispEdges" fill="url(#dim231)"/><rect x="874.5" y="702.00" width="446.0" height="2" shape-rendering="crispEdges" fill="url(#dim232)"/><rect x="874.5" y="704.00" width="446.0" height="2" shape-rendering="crispEdges" fill="url(#dim233)"/><rect x="874.5" y="706.00" width="446.0" height="2" shape-rendering="crispEdges" fill="url(#dim234)"/><rect x="874.5" y="708.00" width="446.0" height="2" shape-rendering="crispEdges" fill="url(#dim235)"/><rect x="874.5" y="710.00" width="446.0" height="2" shape-rendering="crispEdges" fill="url(#dim236)"/><rect x="874.5" y="712.00" width="446.0" height="2" shape-rendering="crispEdges" fill="url(#dim237)"/><rect x="874.5" y="714.00" width="446.0" height="2" shape-rendering="crispEdges" fill="url(#dim238)"/><rect x="874.5" y="716.00" width="446.0" height="2" shape-rendering="crispEdges" fill="url(#dim239)"/><rect x="874.5" y="718.00" width="446.0" height="2" shape-rendering="crispEdges" fill="url(#dim240)"/><rect x="874.5" y="720.00" width="446.0" height="2" shape-rendering="crispEdges" fill="url(#dim241)"/><rect x="874.5" y="722.00" width="446.0" height="2" shape-rendering="crispEdges" fill="url(#dim242)"/><rect x="874.5" y="724.00" width="446.0" height="2" shape-rendering="crispEdges" fill="url(#dim243)"/><rect x="874.5" y="726.00" width="446.0" height="2" shape-rendering="crispEdges" fill="url(#dim244)"/></g>
<g clip-path="url(#tr)"><rect x="958.5" y="372.00" width="308.0" height="2" shape-rendering="crispEdges" fill="url(#br0)"/><rect x="958.5" y="374.00" width="308.0" height="2" shape-rendering="crispEdges" fill="url(#br1)"/><rect x="958.5" y="376.00" width="308.0" height="2" shape-rendering="crispEdges" fill="url(#br2)"/><rect x="958.5" y="378.00" width="308.0" height="2" shape-rendering="crispEdges" fill="url(#br3)"/><rect x="958.5" y="380.00" width="308.0" height="2" shape-rendering="crispEdges" fill="url(#br4)"/><rect x="958.5" y="382.00" width="308.0" height="2" shape-rendering="crispEdges" fill="url(#br5)"/><rect x="958.5" y="384.00" width="308.0" height="2" shape-rendering="crispEdges" fill="url(#br6)"/><rect x="958.5" y="386.00" width="308.0" height="2" shape-rendering="crispEdges" fill="url(#br7)"/><rect x="958.5" y="388.00" width="308.0" height="2" shape-rendering="crispEdges" fill="url(#br8)"/><rect x="958.5" y="390.00" width="308.0" height="2" shape-rendering="crispEdges" fill="url(#br9)"/><rect x="958.5" y="392.00" width="308.0" height="2" shape-rendering="crispEdges" fill="url(#br10)"/><rect x="958.5" y="394.00" width="308.0" height="2" shape-rendering="crispEdges" fill="url(#br11)"/><rect x="958.5" y="396.00" width="308.0" height="2" shape-rendering="crispEdges" fill="url(#br12)"/><rect x="958.5" y="398.00" width="308.0" height="2" shape-rendering="crispEdges" fill="url(#br13)"/><rect x="958.5" y="400.00" width="308.0" height="2" shape-rendering="crispEdges" fill="url(#br14)"/><rect x="958.5" y="402.00" width="308.0" height="2" shape-rendering="crispEdges" fill="url(#br15)"/><rect x="958.5" y="404.00" width="308.0" height="2" shape-rendering="crispEdges" fill="url(#br16)"/><rect x="958.5" y="406.00" width="308.0" height="2" shape-rendering="crispEdges" fill="url(#br17)"/><rect x="958.5" y="408.00" width="308.0" height="2" shape-rendering="crispEdges" fill="url(#br18)"/><rect x="958.5" y="410.00" width="308.0" height="2" shape-rendering="crispEdges" fill="url(#br19)"/><rect x="958.5" y="412.00" width="308.0" height="2" shape-rendering="crispEdges" fill="url(#br20)"/><rect x="958.5" y="414.00" width="308.0" height="2" shape-rendering="crispEdges" fill="url(#br21)"/><rect x="958.5" y="416.00" width="308.0" height="2" shape-rendering="crispEdges" fill="url(#br22)"/><rect x="958.5" y="418.00" width="308.0" height="2" shape-rendering="crispEdges" fill="url(#br23)"/><rect x="958.5" y="420.00" width="308.0" height="2" shape-rendering="crispEdges" fill="url(#br24)"/><rect x="958.5" y="422.00" width="308.0" height="2" shape-rendering="crispEdges" fill="url(#br25)"/><rect x="958.5" y="424.00" width="308.0" height="2" shape-rendering="crispEdges" fill="url(#br26)"/><rect x="958.5" y="426.00" width="308.0" height="2" shape-rendering="crispEdges" fill="url(#br27)"/><rect x="958.5" y="428.00" width="308.0" height="2" shape-rendering="crispEdges" fill="url(#br28)"/><rect x="958.5" y="430.00" width="308.0" height="2" shape-rendering="crispEdges" fill="url(#br29)"/><rect x="958.5" y="432.00" width="308.0" height="2" shape-rendering="crispEdges" fill="url(#br30)"/><rect x="958.5" y="434.00" width="308.0" height="2" shape-rendering="crispEdges" fill="url(#br31)"/><rect x="958.5" y="436.00" width="308.0" height="2" shape-rendering="crispEdges" fill="url(#br32)"/><rect x="958.5" y="438.00" width="308.0" height="2" shape-rendering="crispEdges" fill="url(#br33)"/><rect x="958.5" y="440.00" width="308.0" height="2" shape-rendering="crispEdges" fill="url(#br34)"/><rect x="958.5" y="442.00" width="308.0" height="2" shape-rendering="crispEdges" fill="url(#br35)"/><rect x="958.5" y="444.00" width="308.0" height="2" shape-rendering="crispEdges" fill="url(#br36)"/><rect x="958.5" y="446.00" width="308.0" height="2" shape-rendering="crispEdges" fill="url(#br37)"/><rect x="958.5" y="448.00" width="308.0" height="2" shape-rendering="crispEdges" fill="url(#br38)"/><rect x="958.5" y="450.00" width="308.0" height="2" shape-rendering="crispEdges" fill="url(#br39)"/><rect x="958.5" y="452.00" width="308.0" height="2" shape-rendering="crispEdges" fill="url(#br40)"/><rect x="958.5" y="454.00" width="308.0" height="2" shape-rendering="crispEdges" fill="url(#br41)"/><rect x="958.5" y="456.00" width="308.0" height="2" shape-rendering="crispEdges" fill="url(#br42)"/><rect x="958.5" y="458.00" width="308.0" height="2" shape-rendering="crispEdges" fill="url(#br43)"/><rect x="958.5" y="460.00" width="308.0" height="2" shape-rendering="crispEdges" fill="url(#br44)"/><rect x="958.5" y="462.00" width="308.0" height="2" shape-rendering="crispEdges" fill="url(#br45)"/><rect x="958.5" y="464.00" width="308.0" height="2" shape-rendering="crispEdges" fill="url(#br46)"/><rect x="958.5" y="466.00" width="308.0" height="2" shape-rendering="crispEdges" fill="url(#br47)"/><rect x="958.5" y="468.00" width="308.0" height="2" shape-rendering="crispEdges" fill="url(#br48)"/><rect x="958.5" y="470.00" width="308.0" height="2" shape-rendering="crispEdges" fill="url(#br49)"/><rect x="958.5" y="472.00" width="308.0" height="2" shape-rendering="crispEdges" fill="url(#br50)"/><rect x="958.5" y="474.00" width="308.0" height="2" shape-rendering="crispEdges" fill="url(#br51)"/><rect x="958.5" y="476.00" width="308.0" height="2" shape-rendering="crispEdges" fill="url(#br52)"/><rect x="958.5" y="478.00" width="308.0" height="2" shape-rendering="crispEdges" fill="url(#br53)"/><rect x="958.5" y="480.00" width="308.0" height="2" shape-rendering="crispEdges" fill="url(#br54)"/><rect x="958.5" y="482.00" width="308.0" height="2" shape-rendering="crispEdges" fill="url(#br55)"/><rect x="958.5" y="484.00" width="308.0" height="2" shape-rendering="crispEdges" fill="url(#br56)"/><rect x="958.5" y="486.00" width="308.0" height="2" shape-rendering="crispEdges" fill="url(#br57)"/><rect x="958.5" y="488.00" width="308.0" height="2" shape-rendering="crispEdges" fill="url(#br58)"/><rect x="958.5" y="490.00" width="308.0" height="2" shape-rendering="crispEdges" fill="url(#br59)"/><rect x="958.5" y="492.00" width="308.0" height="2" shape-rendering="crispEdges" fill="url(#br60)"/><rect x="958.5" y="494.00" width="308.0" height="2" shape-rendering="crispEdges" fill="url(#br61)"/><rect x="958.5" y="496.00" width="308.0" height="2" shape-rendering="crispEdges" fill="url(#br62)"/><rect x="958.5" y="498.00" width="308.0" height="2" shape-rendering="crispEdges" fill="url(#br63)"/><rect x="958.5" y="500.00" width="308.0" height="2" shape-rendering="crispEdges" fill="url(#br64)"/><rect x="958.5" y="502.00" width="308.0" height="2" shape-rendering="crispEdges" fill="url(#br65)"/><rect x="958.5" y="504.00" width="308.0" height="2" shape-rendering="crispEdges" fill="url(#br66)"/><rect x="958.5" y="506.00" width="308.0" height="2" shape-rendering="crispEdges" fill="url(#br67)"/><rect x="958.5" y="508.00" width="308.0" height="2" shape-rendering="crispEdges" fill="url(#br68)"/><rect x="958.5" y="510.00" width="308.0" height="2" shape-rendering="crispEdges" fill="url(#br69)"/><rect x="958.5" y="512.00" width="308.0" height="2" shape-rendering="crispEdges" fill="url(#br70)"/><rect x="958.5" y="514.00" width="308.0" height="2" shape-rendering="crispEdges" fill="url(#br71)"/><rect x="958.5" y="516.00" width="308.0" height="2" shape-rendering="crispEdges" fill="url(#br72)"/><rect x="958.5" y="518.00" width="308.0" height="2" shape-rendering="crispEdges" fill="url(#br73)"/><rect x="958.5" y="520.00" width="308.0" height="2" shape-rendering="crispEdges" fill="url(#br74)"/><rect x="958.5" y="522.00" width="308.0" height="2" shape-rendering="crispEdges" fill="url(#br75)"/><rect x="958.5" y="524.00" width="308.0" height="2" shape-rendering="crispEdges" fill="url(#br76)"/><rect x="958.5" y="526.00" width="308.0" height="2" shape-rendering="crispEdges" fill="url(#br77)"/><rect x="958.5" y="528.00" width="308.0" height="2" shape-rendering="crispEdges" fill="url(#br78)"/><rect x="958.5" y="530.00" width="308.0" height="2" shape-rendering="crispEdges" fill="url(#br79)"/><rect x="958.5" y="532.00" width="308.0" height="2" shape-rendering="crispEdges" fill="url(#br80)"/><rect x="958.5" y="534.00" width="308.0" height="2" shape-rendering="crispEdges" fill="url(#br81)"/><rect x="958.5" y="536.00" width="308.0" height="2" shape-rendering="crispEdges" fill="url(#br82)"/><rect x="958.5" y="538.00" width="308.0" height="2" shape-rendering="crispEdges" fill="url(#br83)"/><rect x="958.5" y="540.00" width="308.0" height="2" shape-rendering="crispEdges" fill="url(#br84)"/><rect x="958.5" y="542.00" width="308.0" height="2" shape-rendering="crispEdges" fill="url(#br85)"/><rect x="958.5" y="544.00" width="308.0" height="2" shape-rendering="crispEdges" fill="url(#br86)"/><rect x="958.5" y="546.00" width="308.0" height="2" shape-rendering="crispEdges" fill="url(#br87)"/><rect x="958.5" y="548.00" width="308.0" height="2" shape-rendering="crispEdges" fill="url(#br88)"/><rect x="958.5" y="550.00" width="308.0" height="2" shape-rendering="crispEdges" fill="url(#br89)"/><rect x="958.5" y="552.00" width="308.0" height="2" shape-rendering="crispEdges" fill="url(#br90)"/><rect x="958.5" y="554.00" width="308.0" height="2" shape-rendering="crispEdges" fill="url(#br91)"/><rect x="958.5" y="556.00" width="308.0" height="2" shape-rendering="crispEdges" fill="url(#br92)"/><rect x="958.5" y="558.00" width="308.0" height="2" shape-rendering="crispEdges" fill="url(#br93)"/><rect x="958.5" y="560.00" width="308.0" height="2" shape-rendering="crispEdges" fill="url(#br94)"/><rect x="958.5" y="562.00" width="308.0" height="2" shape-rendering="crispEdges" fill="url(#br95)"/><rect x="958.5" y="564.00" width="308.0" height="2" shape-rendering="crispEdges" fill="url(#br96)"/><rect x="958.5" y="566.00" width="308.0" height="2" shape-rendering="crispEdges" fill="url(#br97)"/><rect x="958.5" y="568.00" width="308.0" height="2" shape-rendering="crispEdges" fill="url(#br98)"/><rect x="958.5" y="570.00" width="308.0" height="2" shape-rendering="crispEdges" fill="url(#br99)"/><rect x="958.5" y="572.00" width="308.0" height="2" shape-rendering="crispEdges" fill="url(#br100)"/><rect x="958.5" y="574.00" width="308.0" height="2" shape-rendering="crispEdges" fill="url(#br101)"/><rect x="958.5" y="576.00" width="308.0" height="2" shape-rendering="crispEdges" fill="url(#br102)"/><rect x="958.5" y="578.00" width="308.0" height="2" shape-rendering="crispEdges" fill="url(#br103)"/><rect x="958.5" y="580.00" width="308.0" height="2" shape-rendering="crispEdges" fill="url(#br104)"/><rect x="958.5" y="582.00" width="308.0" height="2" shape-rendering="crispEdges" fill="url(#br105)"/><rect x="958.5" y="584.00" width="308.0" height="2" shape-rendering="crispEdges" fill="url(#br106)"/><rect x="958.5" y="586.00" width="308.0" height="2" shape-rendering="crispEdges" fill="url(#br107)"/><rect x="958.5" y="588.00" width="308.0" height="2" shape-rendering="crispEdges" fill="url(#br108)"/><rect x="958.5" y="590.00" width="308.0" height="2" shape-rendering="crispEdges" fill="url(#br109)"/><rect x="958.5" y="592.00" width="308.0" height="2" shape-rendering="crispEdges" fill="url(#br110)"/><rect x="958.5" y="594.00" width="308.0" height="2" shape-rendering="crispEdges" fill="url(#br111)"/><rect x="958.5" y="596.00" width="308.0" height="2" shape-rendering="crispEdges" fill="url(#br112)"/><rect x="958.5" y="598.00" width="308.0" height="2" shape-rendering="crispEdges" fill="url(#br113)"/><rect x="958.5" y="600.00" width="308.0" height="2" shape-rendering="crispEdges" fill="url(#br114)"/><rect x="958.5" y="602.00" width="308.0" height="2" shape-rendering="crispEdges" fill="url(#br115)"/><rect x="958.5" y="604.00" width="308.0" height="2" shape-rendering="crispEdges" fill="url(#br116)"/><rect x="958.5" y="606.00" width="308.0" height="2" shape-rendering="crispEdges" fill="url(#br117)"/><rect x="958.5" y="608.00" width="308.0" height="2" shape-rendering="crispEdges" fill="url(#br118)"/><rect x="958.5" y="610.00" width="308.0" height="2" shape-rendering="crispEdges" fill="url(#br119)"/><rect x="958.5" y="612.00" width="308.0" height="2" shape-rendering="crispEdges" fill="url(#br120)"/><rect x="958.5" y="614.00" width="308.0" height="2" shape-rendering="crispEdges" fill="url(#br121)"/><rect x="958.5" y="616.00" width="308.0" height="2" shape-rendering="crispEdges" fill="url(#br122)"/><rect x="958.5" y="618.00" width="308.0" height="2" shape-rendering="crispEdges" fill="url(#br123)"/><rect x="958.5" y="620.00" width="308.0" height="2" shape-rendering="crispEdges" fill="url(#br124)"/><rect x="958.5" y="622.00" width="308.0" height="2" shape-rendering="crispEdges" fill="url(#br125)"/><rect x="958.5" y="624.00" width="308.0" height="2" shape-rendering="crispEdges" fill="url(#br126)"/><rect x="958.5" y="626.00" width="308.0" height="2" shape-rendering="crispEdges" fill="url(#br127)"/><rect x="958.5" y="628.00" width="308.0" height="2" shape-rendering="crispEdges" fill="url(#br128)"/><rect x="958.5" y="630.00" width="308.0" height="2" shape-rendering="crispEdges" fill="url(#br129)"/><rect x="958.5" y="632.00" width="308.0" height="2" shape-rendering="crispEdges" fill="url(#br130)"/><rect x="958.5" y="634.00" width="308.0" height="2" shape-rendering="crispEdges" fill="url(#br131)"/><rect x="958.5" y="636.00" width="308.0" height="2" shape-rendering="crispEdges" fill="url(#br132)"/><rect x="958.5" y="638.00" width="308.0" height="2" shape-rendering="crispEdges" fill="url(#br133)"/><rect x="958.5" y="640.00" width="308.0" height="2" shape-rendering="crispEdges" fill="url(#br134)"/><rect x="958.5" y="642.00" width="308.0" height="2" shape-rendering="crispEdges" fill="url(#br135)"/><rect x="958.5" y="644.00" width="308.0" height="2" shape-rendering="crispEdges" fill="url(#br136)"/><rect x="958.5" y="646.00" width="308.0" height="2" shape-rendering="crispEdges" fill="url(#br137)"/><rect x="958.5" y="648.00" width="308.0" height="2" shape-rendering="crispEdges" fill="url(#br138)"/><rect x="958.5" y="650.00" width="308.0" height="2" shape-rendering="crispEdges" fill="url(#br139)"/><rect x="958.5" y="652.00" width="308.0" height="2" shape-rendering="crispEdges" fill="url(#br140)"/><rect x="958.5" y="654.00" width="308.0" height="2" shape-rendering="crispEdges" fill="url(#br141)"/><rect x="958.5" y="656.00" width="308.0" height="2" shape-rendering="crispEdges" fill="url(#br142)"/><rect x="958.5" y="658.00" width="308.0" height="2" shape-rendering="crispEdges" fill="url(#br143)"/><rect x="958.5" y="660.00" width="308.0" height="2" shape-rendering="crispEdges" fill="url(#br144)"/><rect x="958.5" y="662.00" width="308.0" height="2" shape-rendering="crispEdges" fill="url(#br145)"/><rect x="958.5" y="664.00" width="308.0" height="2" shape-rendering="crispEdges" fill="url(#br146)"/><rect x="958.5" y="666.00" width="308.0" height="2" shape-rendering="crispEdges" fill="url(#br147)"/><rect x="958.5" y="668.00" width="308.0" height="2" shape-rendering="crispEdges" fill="url(#br148)"/><rect x="958.5" y="670.00" width="308.0" height="2" shape-rendering="crispEdges" fill="url(#br149)"/><rect x="958.5" y="672.00" width="308.0" height="2" shape-rendering="crispEdges" fill="url(#br150)"/><rect x="958.5" y="674.00" width="308.0" height="2" shape-rendering="crispEdges" fill="url(#br151)"/><rect x="958.5" y="676.00" width="308.0" height="2" shape-rendering="crispEdges" fill="url(#br152)"/><rect x="958.5" y="678.00" width="308.0" height="2" shape-rendering="crispEdges" fill="url(#br153)"/><rect x="958.5" y="680.00" width="308.0" height="2" shape-rendering="crispEdges" fill="url(#br154)"/><rect x="958.5" y="682.00" width="308.0" height="2" shape-rendering="crispEdges" fill="url(#br155)"/><rect x="958.5" y="684.00" width="308.0" height="2" shape-rendering="crispEdges" fill="url(#br156)"/><rect x="958.5" y="686.00" width="308.0" height="2" shape-rendering="crispEdges" fill="url(#br157)"/><rect x="958.5" y="688.00" width="308.0" height="2" shape-rendering="crispEdges" fill="url(#br158)"/><rect x="958.5" y="690.00" width="308.0" height="2" shape-rendering="crispEdges" fill="url(#br159)"/><rect x="958.5" y="692.00" width="308.0" height="2" shape-rendering="crispEdges" fill="url(#br160)"/><rect x="958.5" y="694.00" width="308.0" height="2" shape-rendering="crispEdges" fill="url(#br161)"/><rect x="958.5" y="696.00" width="308.0" height="2" shape-rendering="crispEdges" fill="url(#br162)"/><rect x="958.5" y="698.00" width="308.0" height="2" shape-rendering="crispEdges" fill="url(#br163)"/></g>
<line x1="872" y1="728.5" x2="876.5" y2="728.5" stroke="#a9a9a9" stroke-width="1.2"/>
<text x="871" y="733.0" font-size="12.5" fill="#dcdcdc" text-anchor="end" font-weight="normal" font-style="normal">0</text>
<text x="876.5" y="747" font-size="12.5" fill="#dcdcdc" text-anchor="middle" font-weight="normal" font-style="normal">0</text>
<line x1="872" y1="670.5" x2="876.5" y2="670.5" stroke="#a9a9a9" stroke-width="1.2"/>
<text x="871" y="675.0" font-size="12.5" fill="#dcdcdc" text-anchor="end" font-weight="normal" font-style="normal">0.1</text>
<line x1="934.5" y1="728.5" x2="934.5" y2="733" stroke="#a9a9a9" stroke-width="1.2"/>
<text x="934.5" y="747" font-size="12.5" fill="#dcdcdc" text-anchor="middle" font-weight="normal" font-style="normal">0.1</text>
<line x1="872" y1="612.5" x2="876.5" y2="612.5" stroke="#a9a9a9" stroke-width="1.2"/>
<text x="871" y="617.0" font-size="12.5" fill="#dcdcdc" text-anchor="end" font-weight="normal" font-style="normal">0.2</text>
<line x1="994.5" y1="728.5" x2="994.5" y2="733" stroke="#a9a9a9" stroke-width="1.2"/>
<text x="994.5" y="747" font-size="12.5" fill="#dcdcdc" text-anchor="middle" font-weight="normal" font-style="normal">0.2</text>
<line x1="872" y1="554.5" x2="876.5" y2="554.5" stroke="#a9a9a9" stroke-width="1.2"/>
<text x="871" y="559.0" font-size="12.5" fill="#dcdcdc" text-anchor="end" font-weight="normal" font-style="normal">0.3</text>
<line x1="1054.5" y1="728.5" x2="1054.5" y2="733" stroke="#a9a9a9" stroke-width="1.2"/>
<text x="1054.5" y="747" font-size="12.5" fill="#dcdcdc" text-anchor="middle" font-weight="normal" font-style="normal">0.3</text>
<line x1="872" y1="496.5" x2="876.5" y2="496.5" stroke="#a9a9a9" stroke-width="1.2"/>
<text x="871" y="501.0" font-size="12.5" fill="#dcdcdc" text-anchor="end" font-weight="normal" font-style="normal">0.4</text>
<line x1="1114.5" y1="728.5" x2="1114.5" y2="733" stroke="#a9a9a9" stroke-width="1.2"/>
<text x="1114.5" y="747" font-size="12.5" fill="#dcdcdc" text-anchor="middle" font-weight="normal" font-style="normal">0.4</text>
<line x1="872" y1="438.5" x2="876.5" y2="438.5" stroke="#a9a9a9" stroke-width="1.2"/>
<text x="871" y="443.0" font-size="12.5" fill="#dcdcdc" text-anchor="end" font-weight="normal" font-style="normal">0.5</text>
<line x1="1174.5" y1="728.5" x2="1174.5" y2="733" stroke="#a9a9a9" stroke-width="1.2"/>
<text x="1174.5" y="747" font-size="12.5" fill="#dcdcdc" text-anchor="middle" font-weight="normal" font-style="normal">0.5</text>
<line x1="872" y1="379.5" x2="876.5" y2="379.5" stroke="#a9a9a9" stroke-width="1.2"/>
<text x="871" y="384.0" font-size="12.5" fill="#dcdcdc" text-anchor="end" font-weight="normal" font-style="normal">0.6</text>
<line x1="1234.5" y1="728.5" x2="1234.5" y2="733" stroke="#a9a9a9" stroke-width="1.2"/>
<text x="1234.5" y="747" font-size="12.5" fill="#dcdcdc" text-anchor="middle" font-weight="normal" font-style="normal">0.6</text>
<line x1="872" y1="321.5" x2="876.5" y2="321.5" stroke="#a9a9a9" stroke-width="1.2"/>
<text x="871" y="326.0" font-size="12.5" fill="#dcdcdc" text-anchor="end" font-weight="normal" font-style="normal">0.7</text>
<line x1="1294.5" y1="728.5" x2="1294.5" y2="733" stroke="#a9a9a9" stroke-width="1.2"/>
<text x="1294.5" y="747" font-size="12.5" fill="#dcdcdc" text-anchor="middle" font-weight="normal" font-style="normal">0.7</text>
<line x1="872" y1="263.5" x2="876.5" y2="263.5" stroke="#a9a9a9" stroke-width="1.2"/>
<text x="871" y="268.0" font-size="12.5" fill="#dcdcdc" text-anchor="end" font-weight="normal" font-style="normal">0.8</text>
<line x1="1354.5" y1="728.5" x2="1354.5" y2="733" stroke="#a9a9a9" stroke-width="1.2"/>
<text x="1354.5" y="747" font-size="12.5" fill="#dcdcdc" text-anchor="middle" font-weight="normal" font-style="normal">0.8</text>
</svg>
<svg class="abs" style="left:0;top:0" width="1440" height="860" viewBox="0 0 1440 860">
<rect x="1048.5" y="371.0" width="13" height="13" fill="#0a7a20" stroke="#e8f0e0" stroke-width="1.4"/>
<circle cx="1054.5" cy="377" r="4.2" fill="#109a30" stroke="#202020" stroke-width="1.25"/>
<rect x="1120.5" y="426.2" width="13" height="13" fill="#707020" stroke="#f0f0d8" stroke-width="1.4"/>
<circle cx="1126.6" cy="432.8" r="4.8" fill="#a8a840" stroke="#202020" stroke-width="1.25"/>
<rect x="1003.3" y="529.4" width="13" height="13" fill="#208a80" stroke="#d8f8f0" stroke-width="1.4"/>
<circle cx="1009.5" cy="537" r="4.2" fill="#30a8a0" stroke="#202020" stroke-width="1.25"/>
<rect x="1055.4" y="529.4" width="13" height="13" fill="#909090" stroke="#101010" stroke-width="2"/>
<circle cx="1063.5" cy="536.5" r="4.5" fill="#b0b0b0" stroke="#404040" stroke-width="1"/>
<circle cx="1060.5" cy="535.6" r="4.5" fill="#ffffff" stroke="#ffffff" stroke-width="0.5"/>
<rect x="1251.0" y="528.0" width="14" height="14" fill="#7a0a10" stroke="#f8e8e8" stroke-width="1.4"/>
<circle cx="1269" cy="538.5" r="3.6" fill="#d01818" stroke="#900" stroke-width="0.5"/>
<rect x="1060.5" y="631.5" width="13" height="13" fill="#a020a8" stroke="#f0c8f0" stroke-width="1.4"/>
<circle cx="1067.7" cy="633.6" r="4.2" fill="#8a1890" stroke="#501050" stroke-width="1.2"/>
<rect x="958.4" y="685.2" width="13" height="13" fill="none" stroke="#f0f0ff" stroke-width="1.4"/>
<circle cx="962" cy="686" r="5" fill="#0a0ab8" stroke="#06067a" stroke-width="1"/>
</svg>

<div class="abs" style="left:0;top:0;width:1440px;height:20px;overflow:hidden;background:linear-gradient(90deg,#2e353d 0%,#353c44 22%,#3a424a 36%,#2c333b 50%,#262d35 62%,#3a444c 68%,#2c343c 74%,#46505a 80%,#36404a 86%,#2e363e 100%)">
  <div class="abs" style="left:-10px;top:-4px;width:295px;height:28px;border-radius:0 14px 14px 0;background:linear-gradient(90deg,#bcc0c4 0%,#b4b8bc 75%,#a8acb0 100%);filter:blur(4px)"></div>
  <div class="abs" style="left:387px;top:6px;width:46px;height:14px;background:#b0d0ea;filter:blur(1px)"></div>
</div>
<div class="abs" style="left:0;top:20px;width:1440px;height:1px;background:#cfd2d4"></div>
<div class="abs" style="left:0;top:3px;width:16px;height:16px;background:radial-gradient(circle at 40% 50%,#18b020 0%,#0e8a16 50%,#04400a 100%)"></div>
<svg class="abs" style="left:0;top:0" width="1440" height="21" viewBox="0 0 1440 21">
  <text x="8" y="16.5" font-size="15" font-weight="bold" fill="#061806" text-anchor="middle" stroke="#78f078" stroke-width="2" paint-order="stroke">5</text>
  <text x="21" y="15" font-size="12.5" fill="#0c1014" textLength="248" lengthAdjust="spacingAndGlyphs">CalMAN 5 CalMAN Enthusiast for Home Video</text>
</svg>
<div class="abs" style="left:1333px;top:-2px;width:105px;height:20px;border:1px solid #202830;border-radius:0 0 5px 5px;overflow:hidden;box-shadow:0 0 0 1px rgba(255,255,255,0.35)">
  <div class="abs" style="left:0;top:0;width:28px;height:18px;background:linear-gradient(#c0c4c8 0%,#a8acb0 45%,#4a525c 50%,#5a6470 100%);border-right:1px solid #e0e0e0"></div>
  <div class="abs" style="left:29px;top:0;width:27px;height:18px;background:linear-gradient(#b8bec4 0%,#a0a8b0 45%,#505a66 50%,#6a7480 100%);border-right:1px solid #e0e0e0"></div>
  <div class="abs" style="left:57px;top:0;width:47px;height:18px;background:linear-gradient(#e8a090 0%,#d88070 45%,#c03018 52%,#d06048 100%)"></div>
</div>
<svg class="abs" style="left:1320px;top:0" width="120" height="20" viewBox="0 0 120 20">
  <rect x="24" y="9" width="10" height="3" fill="#f4f6fa" stroke="#303840" stroke-width="0.5"/>
  <rect x="52" y="2.5" width="8" height="8" fill="none" stroke="#f0f2f6" stroke-width="1.6"/>
  <rect x="50" y="5" width="7" height="7.5" fill="#405060" stroke="#f0f2f6" stroke-width="1.8"/>
  <path d="M89.8 4 L97.2 11 M97.2 4 L89.8 11" stroke="#5a2018" stroke-width="4" stroke-linecap="square" opacity="0.7"/>
  <path d="M89.8 4 L97.2 11 M97.2 4 L89.8 11" stroke="#fafafa" stroke-width="2.6" stroke-linecap="square"/>
</svg>

<!-- CalMAN 5 logo -->
<div class="abs" style="left:1px;top:21px;width:182px;height:31px;border-radius:0 0 4px 4px;background:linear-gradient(#5cd84a 0%,#3cc82e 45%,#2cb822 100%);border:1px solid #a8f098;border-top:none"></div>
<svg class="abs" style="left:0;top:21px" width="190" height="32" viewBox="0 0 190 32">
  <defs><linearGradient id="lg5" x1="0" y1="0" x2="0" y2="1"><stop offset="0" stop-color="#f4fbf0"/><stop offset="1" stop-color="#c8dcc4"/></linearGradient></defs>
  <text x="6" y="25.5" font-size="29" font-weight="bold" fill="#145010" opacity="0.55" stroke="#145010" stroke-width="1.2" textLength="142" lengthAdjust="spacingAndGlyphs">CalMAN5</text>
  <text x="5" y="24.5" font-size="29" font-weight="bold" fill="url(#lg5)" stroke="#c8d8c0" stroke-width="0.5" textLength="142" lengthAdjust="spacingAndGlyphs">CalMAN5</text>
  <circle cx="166" cy="15.5" r="9" fill="#36be28"/>
  <path d="M161 13 L171 13 L166 18.5 Z" fill="#f8f8f8"/>
</svg>

<!-- history tabs -->
<div class="abs" style="left:0;top:57px;width:27px;height:28px;border-radius:0 4px 4px 0;background:linear-gradient(#8a8a8a,#5a5a5a);border:1px solid #b0b0b0;border-left:none"></div>
<svg class="abs" style="left:0;top:57px" width="30" height="30" viewBox="0 0 30 30">
  <circle cx="12.5" cy="13.5" r="9" fill="#6e6e6e" stroke="#5a5a5a"/>
  <path d="M10.5 8.5 L16 13.5 L10.5 18.5 Z" fill="#f8f8f8"/>
</svg>
<div class="abs" style="left:29px;top:57px;width:59px;height:31px;border-radius:4px 0 0 0;background:linear-gradient(#3e3e3e,#363636);border:1px solid #6a6a6a;border-bottom:none;border-right:1px solid #5a5a5a"></div>
<div class="abs" style="left:87px;top:57px;width:34px;height:31px;border-radius:0 4px 0 0;background:#333;border:1px solid #6a6a6a;border-bottom:none;border-left:none"></div>
<svg class="abs" style="left:0;top:57px" width="130" height="31" viewBox="0 0 130 31">
  <text x="35" y="20" font-size="11.5" fill="#e4e4e4" textLength="47" lengthAdjust="spacingAndGlyphs">History 1</text>
  <line x1="87.5" y1="3" x2="87.5" y2="31" stroke="#8a8a8a" stroke-width="1"/>
  <circle cx="103" cy="17.5" r="9" fill="#393939"/>
  <path d="M103 14 V21 M99.5 17.5 H106.5" stroke="#707070" stroke-width="1.2"/>
</svg>

<div class="abs" style="left:842px;top:57px;width:142px;height:30px;border-radius:0 4px 0 0;background:linear-gradient(#6c6c6c,#5c5c5c);overflow:hidden"><div class="abs" style="left:0;top:0;width:6px;height:30px;background:linear-gradient(90deg,#40d040,#20b020)"></div></div><svg class="abs" style="left:842px;top:57px" width="142" height="30" viewBox="0 0 142 30"><text x="9" y="11.5" font-size="11.5" fill="#f0f0f0" text-anchor="start" font-weight="normal" font-style="normal" textLength="102" lengthAdjust="spacingAndGlyphs">X-Rite i1Display OEM</text><text x="9" y="25.5" font-size="11.5" fill="#f0f0f0" text-anchor="start" font-weight="normal" font-style="normal" textLength="105" lengthAdjust="spacingAndGlyphs">Front Projector (UHP)</text><circle cx="126" cy="16" r="9" fill="#585858"/><path d="M120.5 13.5 L131.5 13.5 L126 19 Z" fill="#f8f8f8"/></svg>
<div class="abs" style="left:990px;top:57px;width:198px;height:30px;border-radius:0 4px 0 0;background:linear-gradient(#6c6c6c,#5c5c5c);overflow:hidden"><div class="abs" style="left:0;top:0;width:6px;height:30px;background:linear-gradient(90deg,#40d040,#20b020)"></div></div><svg class="abs" style="left:990px;top:57px" width="198" height="30" viewBox="0 0 198 30"><text x="9" y="11.5" font-size="11.5" fill="#f0f0f0" text-anchor="start" font-weight="normal" font-style="normal" textLength="113" lengthAdjust="spacingAndGlyphs">AV Foundry VideoForge</text><text x="9" y="25.5" font-size="11.5" fill="#f0f0f0" text-anchor="start" font-weight="normal" font-style="normal" textLength="159" lengthAdjust="spacingAndGlyphs">VideoForge software:1.0RC [529]</text><circle cx="182.5" cy="16" r="9" fill="#585858"/><path d="M177.0 13.5 L188.0 13.5 L182.5 19 Z" fill="#f8f8f8"/></svg>
<div class="abs" style="left:1195px;top:57px;width:143px;height:30px;border-radius:0 4px 0 0;background:linear-gradient(#6c6c6c,#5c5c5c);overflow:hidden"><div class="abs" style="left:0;top:0;width:6px;height:30px;background:linear-gradient(90deg,#f0f040,#c8c820)"></div></div><svg class="abs" style="left:1195px;top:57px" width="143" height="30" viewBox="0 0 143 30"><text x="9" y="11.5" font-size="11.5" fill="#f0f0f0" text-anchor="start" font-weight="normal" font-style="normal" textLength="104" lengthAdjust="spacingAndGlyphs">Direct Display Control</text><circle cx="127" cy="16" r="9" fill="#585858"/><path d="M121.5 13.5 L132.5 13.5 L127 19 Z" fill="#f8f8f8"/></svg>
<div class="abs" style="left:1341px;top:57px;width:34px;height:28px;border-radius:4px;background:linear-gradient(#8a8a8a,#5e5e5e);border:1px solid #a8a8a8"></div><svg class="abs" style="left:1341px;top:57px" width="34" height="28" viewBox="0 0 34 28"><circle cx="17.0" cy="14" r="10" fill="#626262"/><g transform="translate(17,14)" fill="#b4b4b4"><rect x="-1.4" y="-7.5" width="2.8" height="3.5" transform="rotate(0)"/><rect x="-1.4" y="-7.5" width="2.8" height="3.5" transform="rotate(45)"/><rect x="-1.4" y="-7.5" width="2.8" height="3.5" transform="rotate(90)"/><rect x="-1.4" y="-7.5" width="2.8" height="3.5" transform="rotate(135)"/><rect x="-1.4" y="-7.5" width="2.8" height="3.5" transform="rotate(180)"/><rect x="-1.4" y="-7.5" width="2.8" height="3.5" transform="rotate(225)"/><rect x="-1.4" y="-7.5" width="2.8" height="3.5" transform="rotate(270)"/><rect x="-1.4" y="-7.5" width="2.8" height="3.5" transform="rotate(315)"/><circle r="4.8" fill="none" stroke="#b4b4b4" stroke-width="2.2"/></g></svg>
<div class="abs" style="left:1377px;top:57px;width:34px;height:28px;border-radius:4px;background:linear-gradient(#8a8a8a,#5e5e5e);border:1px solid #a8a8a8"></div><svg class="abs" style="left:1377px;top:57px" width="34" height="28" viewBox="0 0 34 28"><circle cx="17.0" cy="14" r="10" fill="#626262"/><text x="17" y="19.5" font-size="15" font-weight="bold" fill="#f0f0f0" text-anchor="middle">?</text></svg>
<div class="abs" style="left:1413px;top:57px;width:30px;height:28px;border-radius:4px 0 0 4px;background:linear-gradient(#8a8a8a,#5e5e5e);border:1px solid #a8a8a8;border-right:none"></div><svg class="abs" style="left:1413px;top:57px" width="27" height="28" viewBox="0 0 27 28"><circle cx="14" cy="14" r="10" fill="#626262"/><path d="M15.5 8.5 L10 14 L15.5 19.5 Z" fill="#f4f4f4"/></svg>
<div class="abs" style="left:1px;top:798px;width:137px;height:61px;border-radius:4px;background:linear-gradient(#a4a4a4 0%,#8c8c8c 12%,#787878 65%,#5c5c5c 100%);border:1px solid #2a2a2a;box-shadow:inset 0 1px 0 #b8b8b8"><div class="abs" style="left:5px;top:5px;width:126px;height:36px;border-radius:4px;background:#c0c0c0;box-shadow:0 0 2px 1px #c0c0c080, inset 0 1px 1px rgba(255,255,255,0.15)"></div><svg class="abs" style="left:0;top:0" width="137" height="61" viewBox="0 0 137 61"><text x="68.5" y="55" font-size="11" fill="#262626" text-anchor="middle" font-weight="bold" font-style="normal">White</text></svg></div>
<div class="abs" style="left:140px;top:798px;width:137px;height:61px;border-radius:4px;background:linear-gradient(#a4a4a4 0%,#8c8c8c 12%,#787878 65%,#5c5c5c 100%);border:1px solid #2a2a2a;box-shadow:inset 0 1px 0 #b8b8b8"><div class="abs" style="left:5px;top:5px;width:126px;height:36px;border-radius:4px;background:#c00000;box-shadow:0 0 2px 1px #c0000080, inset 0 1px 1px rgba(255,255,255,0.15)"></div><svg class="abs" style="left:0;top:0" width="137" height="61" viewBox="0 0 137 61"><text x="68.5" y="55" font-size="11" fill="#262626" text-anchor="middle" font-weight="bold" font-style="normal">Red</text></svg></div>
<div class="abs" style="left:280px;top:798px;width:137px;height:61px;border-radius:4px;background:linear-gradient(#a4a4a4 0%,#8c8c8c 12%,#787878 65%,#5c5c5c 100%);border:1px solid #2a2a2a;box-shadow:inset 0 1px 0 #b8b8b8"><div class="abs" style="left:5px;top:5px;width:126px;height:36px;border-radius:4px;background:#00c000;box-shadow:0 0 2px 1px #00c00080, inset 0 1px 1px rgba(255,255,255,0.15)"></div><svg class="abs" style="left:0;top:0" width="137" height="61" viewBox="0 0 137 61"><text x="68.5" y="55" font-size="11" fill="#262626" text-anchor="middle" font-weight="bold" font-style="normal">Green</text></svg></div>
<div class="abs" style="left:419px;top:798px;width:137px;height:61px;border-radius:4px;background:linear-gradient(#a4a4a4 0%,#8c8c8c 12%,#787878 65%,#5c5c5c 100%);border:1px solid #2a2a2a;box-shadow:inset 0 1px 0 #b8b8b8"><div class="abs" style="left:5px;top:5px;width:126px;height:36px;border-radius:4px;background:#0000c0;box-shadow:0 0 2px 1px #0000c080, inset 0 1px 1px rgba(255,255,255,0.15)"></div><svg class="abs" style="left:0;top:0" width="137" height="61" viewBox="0 0 137 61"><text x="68.5" y="55" font-size="11" fill="#262626" text-anchor="middle" font-weight="bold" font-style="normal">Blue</text></svg></div>
<div class="abs" style="left:559px;top:798px;width:137px;height:61px;border-radius:4px;background:linear-gradient(#a4a4a4 0%,#8c8c8c 12%,#787878 65%,#5c5c5c 100%);border:1px solid #2a2a2a;box-shadow:inset 0 1px 0 #b8b8b8"><div class="abs" style="left:5px;top:5px;width:126px;height:36px;border-radius:4px;background:#00c0c0;box-shadow:0 0 2px 1px #00c0c080, inset 0 1px 1px rgba(255,255,255,0.15)"></div><svg class="abs" style="left:0;top:0" width="137" height="61" viewBox="0 0 137 61"><text x="68.5" y="55" font-size="11" fill="#262626" text-anchor="middle" font-weight="bold" font-style="normal">Cyan</text></svg></div>
<div class="abs" style="left:698px;top:798px;width:137px;height:61px;border-radius:4px;background:linear-gradient(#a4a4a4 0%,#8c8c8c 12%,#787878 65%,#5c5c5c 100%);border:1px solid #2a2a2a;box-shadow:inset 0 1px 0 #b8b8b8"><div class="abs" style="left:5px;top:5px;width:126px;height:36px;border-radius:4px;background:#c000c0;box-shadow:0 0 2px 1px #c000c080, inset 0 1px 1px rgba(255,255,255,0.15)"></div><svg class="abs" style="left:0;top:0" width="137" height="61" viewBox="0 0 137 61"><text x="68.5" y="55" font-size="11" fill="#262626" text-anchor="middle" font-weight="bold" font-style="normal">Magenta</text></svg></div>
<div class="abs" style="left:837px;top:798px;width:137px;height:61px;border-radius:4px;background:linear-gradient(#a4a4a4 0%,#8c8c8c 12%,#787878 65%,#5c5c5c 100%);border:1px solid #2a2a2a;box-shadow:inset 0 1px 0 #b8b8b8"><div class="abs" style="left:5px;top:5px;width:126px;height:36px;border-radius:4px;background:#c0c000;box-shadow:0 0 2px 1px #c0c00080, inset 0 1px 1px rgba(255,255,255,0.15)"></div><svg class="abs" style="left:0;top:0" width="137" height="61" viewBox="0 0 137 61"><text x="68.5" y="55" font-size="11" fill="#262626" text-anchor="middle" font-weight="bold" font-style="normal">Yellow</text></svg></div>
<div class="abs" style="left:977px;top:798px;width:137px;height:62px;border-radius:4px;background:#1e1e1e"><div class="abs" style="left:6px;top:5px;width:127px;height:36px;border-radius:4px;background:#ffffff"></div><svg class="abs" style="left:0;top:0" width="138" height="62" viewBox="0 0 138 62"><text x="69" y="55" font-size="11" fill="#f4f4f4" text-anchor="middle" font-weight="bold" font-style="normal">100W</text></svg></div>

<div class="abs" style="left:1117px;top:798px;width:48px;height:18px;border-radius:4px 4px 0 0;background:linear-gradient(#b0b0b0 0%,#9a9a9a 40%,#7a7a7a 100%);border:1px solid #3a3a3a"></div>
<div class="abs" style="left:1117px;top:816px;width:48px;height:44px;background:linear-gradient(#9a9a9a,#6e6e6e);border:1px solid #3a3a3a"></div>
<svg class="abs" style="left:1117px;top:798px" width="48" height="62" viewBox="0 0 48 62">
  <ellipse cx="24" cy="9" rx="9" ry="7" fill="#8a8a8a"/><path d="M19 12 L24 6.5 L29 12 Z" fill="#333"/>
  <rect x="9.5" y="24.5" width="29" height="29" rx="4" fill="#7a7a7a" stroke="#202020" stroke-width="2.2"/>
  <rect x="12" y="27" width="24" height="24" rx="2" fill="#8a8a8a"/>
  <rect x="17" y="30" width="14" height="17" fill="#d0d0d0"/>
  <rect x="17" y="39" width="14" height="8" fill="#bcbcbc"/>
</svg>

<div class="abs" style="left:1166px;top:798px;width:45px;height:31px;border-radius:3px;background:linear-gradient(#b0b0b0 0%,#9a9a9a 40%,#7a7a7a 100%);border:1px solid #3a3a3a"></div><svg class="abs" style="left:1166px;top:798px" width="45" height="31" viewBox="0 0 45 31"><g transform="translate(22.5,15)"><circle r="9.5" fill="#8e8e8e"/><rect x="-5" y="-5" width="10" height="10" fill="#2a2a2a"/></g></svg>
<div class="abs" style="left:1211px;top:798px;width:45px;height:31px;border-radius:3px;background:linear-gradient(#b0b0b0 0%,#9a9a9a 40%,#7a7a7a 100%);border:1px solid #3a3a3a"></div><svg class="abs" style="left:1211px;top:798px" width="45" height="31" viewBox="0 0 45 31"><g transform="translate(22.5,15)"><circle r="9.5" fill="#8e8e8e"/><path d="M-4 -6 L6 0 L-4 6 Z" fill="#2a2a2a"/></g></svg>
<div class="abs" style="left:1256px;top:798px;width:45px;height:31px;border-radius:3px;background:linear-gradient(#b0b0b0 0%,#9a9a9a 40%,#7a7a7a 100%);border:1px solid #3a3a3a"></div><svg class="abs" style="left:1256px;top:798px" width="45" height="31" viewBox="0 0 45 31"><g transform="translate(22.5,15)"><circle r="9.5" fill="#8e8e8e"/><text x="0" y="4" font-size="12" font-weight="bold" fill="#2a2a2a" text-anchor="middle">[··]</text></g></svg>
<div class="abs" style="left:1301px;top:798px;width:45px;height:31px;border-radius:3px;background:linear-gradient(#b0b0b0 0%,#9a9a9a 40%,#7a7a7a 100%);border:1px solid #3a3a3a"></div><svg class="abs" style="left:1301px;top:798px" width="45" height="31" viewBox="0 0 45 31"><g transform="translate(22.5,15)"><circle r="9.5" fill="#8e8e8e"/><text x="0" y="5" font-size="17" font-weight="bold" fill="#2a2a2a" text-anchor="middle">∞</text></g></svg>
<div class="abs" style="left:1347px;top:798px;width:46px;height:31px;border-radius:3px;background:linear-gradient(#444,#363636);border:1px solid #262626"></div><svg class="abs" style="left:1347px;top:798px" width="46" height="31" viewBox="0 0 46 31"><circle cx="23" cy="15" r="9" fill="#3c3c3c"/></svg>
<div class="abs" style="left:1393px;top:798px;width:46px;height:31px;border-radius:3px;background:linear-gradient(#444,#363636);border:1px solid #262626"></div><svg class="abs" style="left:1393px;top:798px" width="46" height="31" viewBox="0 0 46 31"><circle cx="23" cy="15" r="9" fill="#3c3c3c"/></svg>

<div class="abs" style="left:1166px;top:829px;width:137px;height:31px;border-radius:3px;background:linear-gradient(#ababab,#888);border:1px solid #3a3a3a"></div>
<div class="abs" style="left:1303px;top:829px;width:137px;height:31px;border-radius:3px;background:linear-gradient(#ababab,#888);border:1px solid #3a3a3a"></div>
<svg class="abs" style="left:1166px;top:829px" width="274" height="31" viewBox="0 0 274 31">
  <circle cx="31" cy="15" r="10" fill="#9a9a9a"/>
  <path d="M29 10 L25 15 L29 20 M34 10 L30 15 L34 20" fill="none" stroke="#2a2a2a" stroke-width="1.8"/>
  <text x="56" y="25" font-size="24" fill="#2e2e2e" textLength="51" lengthAdjust="spacingAndGlyphs">Back</text>
</svg>
<svg class="abs" style="left:1280px;top:810px" width="160" height="50" viewBox="0 0 160 50">
  <ellipse cx="20" cy="25" rx="11" ry="19" transform="rotate(12 20 25)" fill="#111" stroke="#fff" stroke-width="1.5"/>
  <ellipse cx="23" cy="25" rx="9" ry="17" transform="rotate(12 23 25)" fill="#f0c030"/>
  <path d="M20 22 L26 25 L20 28 Z" fill="#111"/>
  <text x="34" y="24" font-size="19.5" font-weight="bold" fill="#111" stroke="#f4f4f4" stroke-width="2.5" paint-order="stroke" textLength="121" lengthAdjust="spacingAndGlyphs">HIENDY</text>
  <rect x="34" y="29" width="122" height="1" fill="#ccc"/>
  <text x="34" y="40" font-size="10" font-weight="bold" fill="#222" stroke="#f4f4f4" stroke-width="1.6" paint-order="stroke" textLength="122" lengthAdjust="spacingAndGlyphs">HiFiCLUB 影音俱樂部</text>
  <text x="34" y="45.5" font-size="5" fill="#222" stroke="#eee" stroke-width="0.8" paint-order="stroke">WWW.HIENDY.COM</text>
</svg>

<svg class="abs" style="left:1420px;top:720px" width="20" height="40" viewBox="0 0 20 40"><path d="M12 11 L12 25.5 L15.5 22.2 L18.2 28.3 L20.6 27.3 L18 21.4 L22.8 21.4 Z" fill="#f4f4f4" stroke="#000" stroke-width="1.1" stroke-linejoin="miter"/></svg>
</body></html>
